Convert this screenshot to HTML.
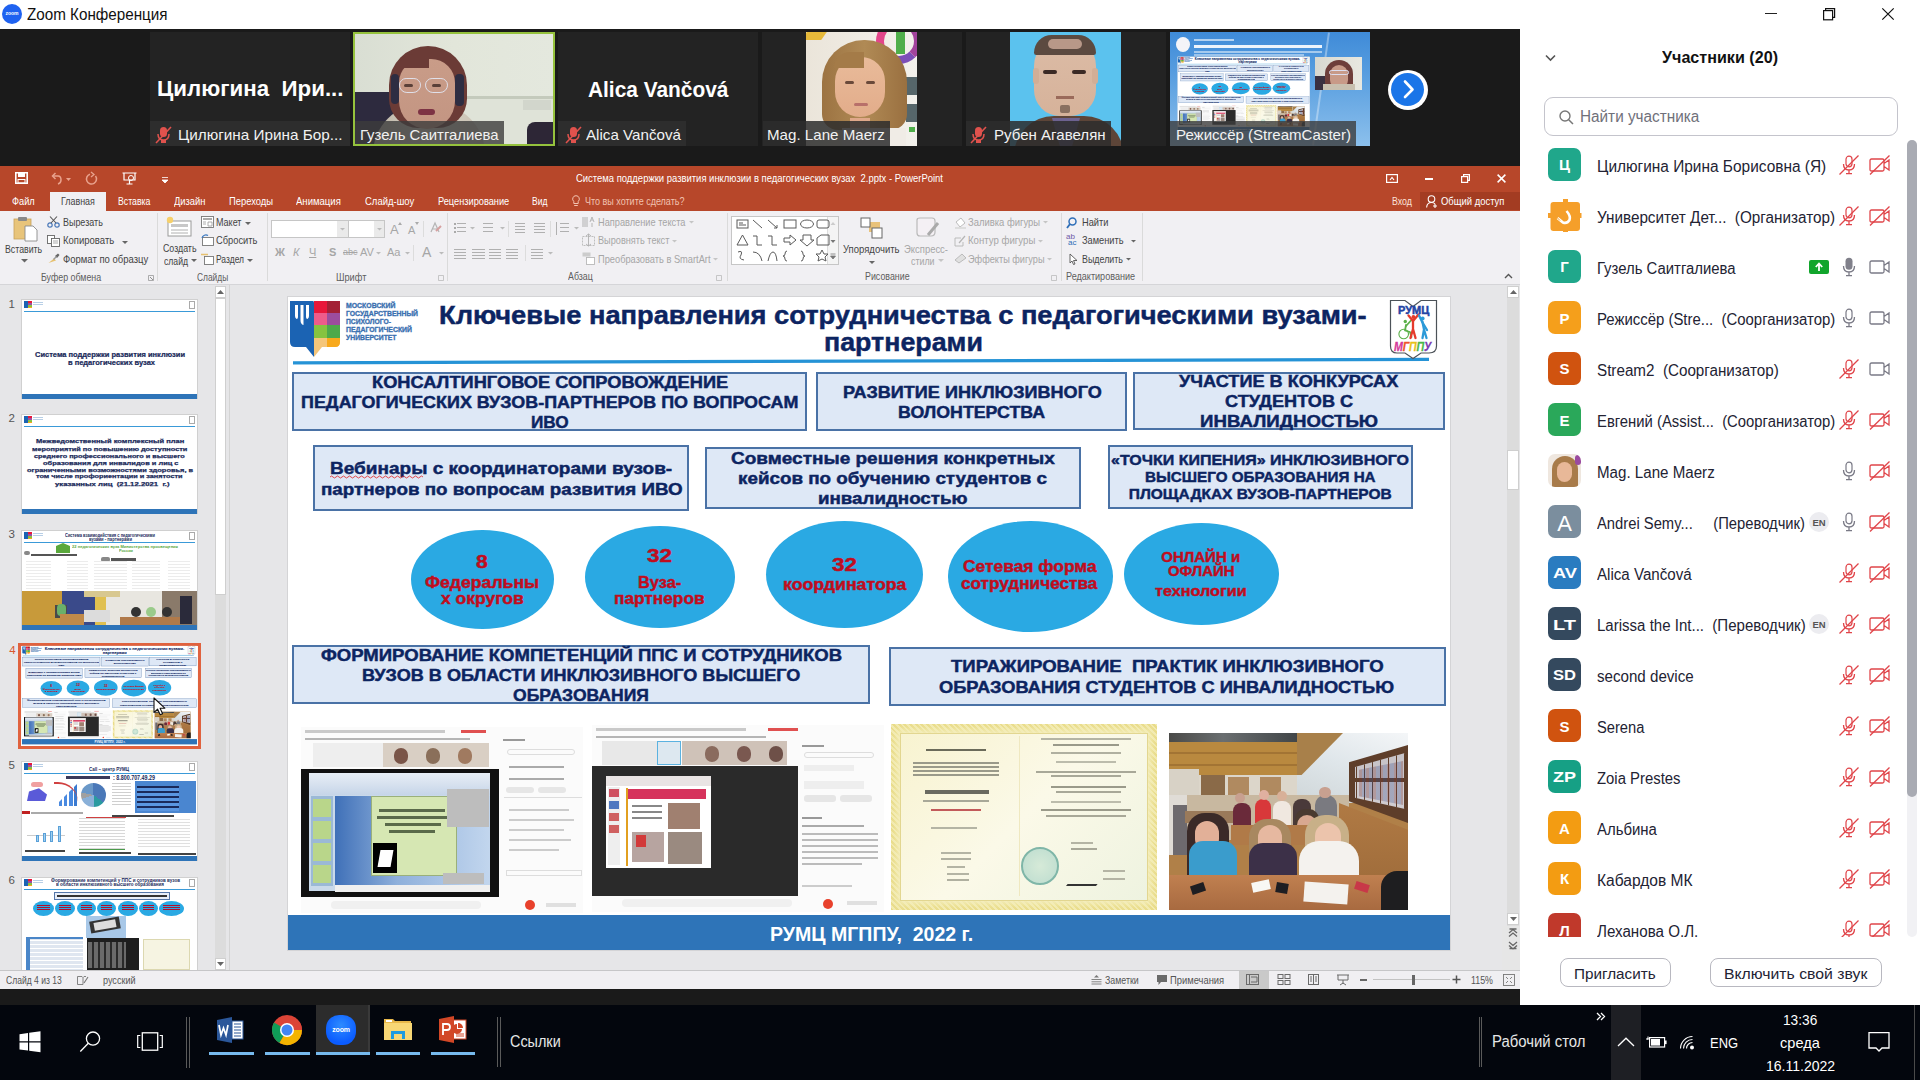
<!DOCTYPE html><html><head><meta charset="utf-8"><style>
*{margin:0;padding:0;box-sizing:border-box}
html,body{width:1920px;height:1080px;overflow:hidden;background:#fff;font-family:"Liberation Sans",sans-serif}
.a{position:absolute}
.t{position:absolute;white-space:pre;transform-origin:0 0}
svg{position:absolute;overflow:visible}

</style></head><body>
<div class="a" style="left:0;top:0;width:1920px;height:29px;background:#fff"></div>
<div class="a" style="left:2px;top:4px;width:20px;height:20px;border-radius:50%;background:#1f62f0"></div>
<div class="a" style="left:5px;top:11px;width:14px;height:5px;font:bold 5px/5px 'Liberation Sans';color:#fff;text-align:center">zoom</div>
<div class="t" id="t0" style="top:7.00px;font-size:16px;line-height:16px;color:#111;left:27.30px;transform:scaleX(0.9502);">Zoom Конференция</div>
<div class="a" style="left:1765px;top:13px;width:12px;height:1px;background:#222"></div>
<svg style="left:1823px;top:8px" width="13" height="13"><rect x="0.6" y="2.6" width="9" height="9.2" fill="none" stroke="#111" stroke-width="1.2"/><path d="M2.6 2.6V0.6H11.6V9.4H9.6" fill="none" stroke="#111" stroke-width="1.2"/></svg>
<svg style="left:1882px;top:8px" width="12" height="12"><path d="M0.3 0.3L11.7 11.7M11.7 0.3L0.3 11.7" stroke="#111" stroke-width="1.2"/></svg>
<div class="a" style="left:0;top:29px;width:1520px;height:137px;background:#1a1a1a"></div>
<div class="a" style="left:150px;top:32px;width:200px;height:114px;background:#232323;overflow:hidden"></div>
<div class="a" style="left:353px;top:32px;width:202px;height:114px;background:#232323;overflow:hidden"></div>
<div class="a" style="left:558px;top:32px;width:200px;height:114px;background:#232323;overflow:hidden"></div>
<div class="a" style="left:762px;top:32px;width:200px;height:114px;background:#232323;overflow:hidden"></div>
<div class="a" style="left:966px;top:32px;width:200px;height:114px;background:#232323;overflow:hidden"></div>
<div class="a" style="left:1170px;top:32px;width:200px;height:114px;background:#232323;overflow:hidden"></div>
<div class="t" id="t1" style="top:78.00px;font-size:22px;line-height:22px;color:#fff;font-weight:bold;left:156.50px;transform:scaleX(1.0141);">Цилюгина  Ири...</div>
<div class="a" style="left:150px;top:121px;width:200px;height:25px;background:#2d2d2d"></div>
<svg style="left:155px;top:126px" width="17" height="18"><rect x="5" y="1" width="7" height="10" rx="3.5" fill="#e0524d"/><path d="M3 8Q3 14 8.5 14Q14 14 14 8" fill="none" stroke="#e0524d" stroke-width="1.5"/><rect x="6" y="14" width="5" height="3" fill="#e0524d"/><path d="M1 17L16 1" stroke="#e0524d" stroke-width="1.6"/></svg>
<div class="t" id="t2" style="top:127.00px;font-size:15px;line-height:15px;color:#f2f2f2;left:178.40px;transform:scaleX(1.0195);">Цилюгина Ирина Бор...</div>
<div class="a" style="left:353px;top:32px;width:202px;height:114px;background:linear-gradient(90deg,#d9ded3 0%,#e2e6da 50%,#e4e8de 100%);border:2px solid #95c23d;overflow:hidden">
<div class="a" style="left:0;top:58px;width:40px;height:60px;background:#2d2a3e"></div>
<div class="a" style="left:105px;top:62px;width:95px;height:3px;background:#c4cabc"></div>
<div class="a" style="left:105px;top:65px;width:95px;height:50px;background:#dfe3d8"></div>
<div class="a" style="left:168px;top:66px;width:28px;height:10px;background:#d2d6cc"></div>
<div class="a" style="left:172px;top:88px;width:30px;height:30px;background:#2d2636;border-radius:8px 0 0 0"></div>
<div class="a" style="left:18px;top:70px;width:112px;height:50px;border-radius:50px 50px 0 0;background:linear-gradient(90deg,#bdb6a8,#d8d2c4 50%,#c9c2b4)"></div>
<div class="a" style="left:34px;top:12px;width:78px;height:82px;border-radius:40px 40px 30px 30px;background:#6b3b36"></div>
<div class="a" style="left:44px;top:25px;width:56px;height:70px;border-radius:24px 24px 28px 28px;background:linear-gradient(#c99c88,#c39582)"></div>
<div class="a" style="left:44px;top:20px;width:30px;height:14px;border-radius:20px 0 0 0;background:#6b3b36"></div>
<div class="a" style="left:44px;top:44px;width:22px;height:15px;border:1.5px solid #e0e0ea;border-radius:9px 9px 10px 10px"></div>
<div class="a" style="left:70px;top:44px;width:23px;height:15px;border:1.5px solid #e0e0ea;border-radius:9px 9px 10px 10px"></div>
<div class="a" style="left:49px;top:50px;width:9px;height:3px;background:#5a4038;border-radius:2px"></div>
<div class="a" style="left:77px;top:50px;width:9px;height:3px;background:#5a4038;border-radius:2px"></div>
<div class="a" style="left:63px;top:75px;width:17px;height:6px;border-radius:4px;background:#7d3344"></div>
<div class="a" style="left:36px;top:40px;width:8px;height:30px;border-radius:4px;background:#2e2d42"></div>
<div class="a" style="left:100px;top:40px;width:9px;height:32px;border-radius:4px;background:#2e2d42"></div>
</div>
<div class="a" style="left:355px;top:121px;width:149px;height:23px;background:rgba(60,60,60,.8)"></div>
<div class="t" id="t3" style="top:127.00px;font-size:15px;line-height:15px;color:#f2f2f2;left:360.00px;transform:scaleX(0.9928);">Гузель Саитгалиева</div>
<div class="t" id="t4" style="top:79.00px;font-size:22px;line-height:22px;color:#fff;font-weight:bold;left:588.00px;transform:scaleX(0.9487);">Alica Vančová</div>
<div class="a" style="left:558px;top:121px;width:128px;height:25px;background:#2d2d2d"></div>
<svg style="left:565px;top:126px" width="17" height="18"><rect x="5" y="1" width="7" height="10" rx="3.5" fill="#e0524d"/><path d="M3 8Q3 14 8.5 14Q14 14 14 8" fill="none" stroke="#e0524d" stroke-width="1.5"/><rect x="6" y="14" width="5" height="3" fill="#e0524d"/><path d="M1 17L16 1" stroke="#e0524d" stroke-width="1.6"/></svg>
<div class="t" id="t5" style="top:127.00px;font-size:15px;line-height:15px;color:#f2f2f2;left:586.00px;transform:scaleX(1.0111);">Alica Vančová</div>
<div class="a" style="left:806px;top:32px;width:111px;height:114px;background:linear-gradient(90deg,#ebe5da,#f3f1ec);overflow:hidden">
<div class="a" style="left:-2px;top:0;width:20px;height:8px;background:#e6b93a;transform:skewX(-35deg)"></div>
<div class="a" style="left:70px;top:-14px;width:46px;height:46px;border-radius:50%;border:8px solid #a2439c;border-left-color:#e2468a;border-bottom-color:#7d4fb8"></div>
<div class="a" style="left:90px;top:0;width:9px;height:22px;background:#4fae4a"></div>
<div class="a" style="left:100px;top:45px;width:11px;height:18px;background:#56666a"></div>
<div class="a" style="left:100px;top:72px;width:11px;height:18px;background:#56666a"></div>
<div class="a" style="left:103px;top:95px;width:6px;height:5px;background:#4fae4a"></div>
<div class="a" style="left:16px;top:8px;width:85px;height:90px;border-radius:42px 42px 16px 16px;background:linear-gradient(90deg,#9c7342,#b08a55 50%,#9a7040)"></div>
<div class="a" style="left:29px;top:25px;width:50px;height:60px;border-radius:24px 24px 25px 25px;background:linear-gradient(#e9bb9a,#e2ac8a)"></div>
<div class="a" style="left:28px;top:20px;width:30px;height:16px;border-radius:20px 0 0 0;background:#a47b48"></div>
<div class="a" style="left:39px;top:49px;width:9px;height:3px;border-radius:2px;background:#6a4a3a"></div>
<div class="a" style="left:60px;top:49px;width:9px;height:3px;border-radius:2px;background:#6a4a3a"></div>
<div class="a" style="left:48px;top:71px;width:14px;height:3px;border-radius:2px;background:#b8706a"></div>
<div class="a" style="left:44px;top:86px;width:20px;height:14px;background:#e0a88a"></div>
<div class="a" style="left:36px;top:96px;width:64px;height:20px;background:#f0ece6"></div>
</div>
<div class="a" style="left:763px;top:121px;width:127px;height:25px;background:rgba(45,45,45,.85)"></div>
<div class="t" id="t6" style="top:127.00px;font-size:15px;line-height:15px;color:#f2f2f2;left:767.00px;transform:scaleX(1.0083);">Mag. Lane Maerz</div>
<div class="a" style="left:1010px;top:32px;width:111px;height:114px;background:#5bc2ee;overflow:hidden">
<div class="a" style="left:4px;top:84px;width:110px;height:40px;border-radius:40px 40px 0 0;background:#5d4538"></div>
<div class="a" style="left:42px;top:86px;width:28px;height:30px;background:#6d6290;clip-path:polygon(0 0,100% 0,70% 100%,30% 100%)"></div>
<div class="a" style="left:24px;top:4px;width:62px;height:80px;border-radius:30px 30px 26px 26px;background:linear-gradient(#dcbca6,#d6b29a)"></div>
<div class="a" style="left:23px;top:36px;width:6px;height:16px;border-radius:3px;background:#d2ae96"></div>
<div class="a" style="left:82px;top:36px;width:6px;height:16px;border-radius:3px;background:#d2ae96"></div>
<div class="a" style="left:24px;top:3px;width:62px;height:20px;border-radius:30px 30px 4px 4px;background:#5c4a40"></div>
<div class="a" style="left:38px;top:7px;width:34px;height:10px;border-radius:14px;background:#b89888"></div>
<div class="a" style="left:33px;top:38px;width:14px;height:4px;border-radius:2px;background:#3b2a25"></div>
<div class="a" style="left:62px;top:38px;width:14px;height:4px;border-radius:2px;background:#3b2a25"></div>
<div class="a" style="left:46px;top:64px;width:18px;height:3px;background:#9a6a5a"></div>
<div class="a" style="left:50px;top:73px;width:10px;height:8px;background:#8a7060;border-radius:2px"></div>
</div>
<div class="a" style="left:966px;top:121px;width:145px;height:25px;background:rgba(45,45,45,.85)"></div>
<svg style="left:970px;top:126px" width="17" height="18"><rect x="5" y="1" width="7" height="10" rx="3.5" fill="#e0524d"/><path d="M3 8Q3 14 8.5 14Q14 14 14 8" fill="none" stroke="#e0524d" stroke-width="1.5"/><rect x="6" y="14" width="5" height="3" fill="#e0524d"/><path d="M1 17L16 1" stroke="#e0524d" stroke-width="1.6"/></svg>
<div class="t" id="t7" style="top:127.00px;font-size:15px;line-height:15px;color:#f2f2f2;left:994.00px;transform:scaleX(1.0037);">Рубен Агавелян</div>
<div class="a" style="left:1170px;top:32px;width:200px;height:114px;background:linear-gradient(180deg,#3f8bd8 0%,#5a9fe0 40%,#8cc0ec 100%);overflow:hidden">
<div class="a" style="left:150px;top:0;width:2px;height:114px;background:rgba(255,255,255,.35);transform:rotate(8deg)"></div>
<div class="a" style="left:6px;top:5px;width:14px;height:15px;border-radius:50%;background:#f4f4f8"></div>
<div class="a" style="left:24px;top:7px;width:40px;height:2px;background:rgba(255,255,255,.6)"></div>
<div class="a" style="left:24px;top:13px;width:128px;height:3px;background:rgba(255,255,255,.9)"></div>
<div class="a" style="left:24px;top:19px;width:128px;height:1.5px;background:rgba(255,255,255,.5)"></div>
<div class="a" style="left:24px;top:22px;width:110px;height:1.5px;background:rgba(255,255,255,.45)"></div>
<div class="a" style="left:145px;top:25px;width:47px;height:33px;background:linear-gradient(90deg,#d8d8d0,#e8e8e0)"></div>
<div class="a" style="left:145px;top:44px;width:10px;height:14px;background:#3a3040"></div>
<div class="a" style="left:155px;top:28px;width:28px;height:30px;border-radius:14px 14px 6px 6px;background:#6e3e3a"></div>
<div class="a" style="left:160px;top:33px;width:18px;height:24px;border-radius:9px;background:#c89a88"></div>
<div class="a" style="left:159px;top:38px;width:20px;height:5px;border:1px solid #dde;border-radius:3px"></div>
<div class="a" style="left:153px;top:52px;width:32px;height:6px;background:#c8c0b0"></div>
</div>
<div class="a" style="left:1387.5px;top:69.5px;width:40px;height:40px;border-radius:50%;background:#fff"></div>
<div class="a" style="left:1391px;top:73px;width:33px;height:33px;border-radius:50%;background:#1a75e8"></div>
<svg style="left:1401px;top:80px" width="16" height="18"><path d="M4 1.5L11.5 9.5L4 17" fill="none" stroke="#fff" stroke-width="2.6" stroke-linecap="round" stroke-linejoin="round"/></svg>
<div class="a" style="left:0;top:166px;width:1520px;height:45px;background:#b7472a"></div>
<svg style="left:15px;top:172px" width="13" height="12"><path d="M0.8 0.8H12.2V11.2H0.8Z" fill="none" stroke="#fff" stroke-width="1.6"/><rect x="3" y="1" width="7" height="4" fill="#fff"/><rect x="3" y="7.5" width="7" height="3.5" fill="none" stroke="#fff" stroke-width="1"/></svg>
<svg style="left:50px;top:172px" width="22" height="13"><path d="M3 4H8Q11 4 11 8Q11 11 8 12" fill="none" stroke="#e9a28d" stroke-width="1.5"/><path d="M5.5 1L2.5 4L5.5 7" fill="none" stroke="#e9a28d" stroke-width="1.5"/><path d="M16 6L21 6L18.5 9Z" fill="#e9a28d"/></svg>
<svg style="left:86px;top:172px" width="12" height="13"><path d="M9.5 4A5 5 0 1 1 4 2.2" fill="none" stroke="#e9a28d" stroke-width="1.5"/><path d="M5 0L8 2.5L5 5" fill="none" stroke="#e9a28d" stroke-width="1.3"/></svg>
<svg style="left:122px;top:172px" width="15" height="13"><path d="M0.5 1H14.5M2 1V8H13V1M7.5 8V12M4.5 12H10.5" fill="none" stroke="#fff" stroke-width="1.2"/><circle cx="9" cy="6" r="2.5" fill="none" stroke="#fff" stroke-width="1"/></svg>
<svg style="left:162px;top:177px" width="6" height="9"><path d="M0 0.5H6M0 3L6 3L3 6Z" fill="#fff" stroke="#fff" stroke-width="0.8"/></svg>
<div class="t" id="t8" style="top:173.00px;font-size:10.5px;line-height:10.5px;color:#fff;left:576.00px;transform:scaleX(0.8999);">Система поддержки развития инклюзии в педагогических вузах  2.pptx - PowerPoint</div>
<svg style="left:1386px;top:174px" width="12" height="9"><rect x="0.6" y="0.6" width="10.8" height="7.8" fill="none" stroke="#fff" stroke-width="1.2"/><path d="M4 6L6 3.5L8 6" fill="none" stroke="#fff" stroke-width="1.2"/></svg>
<div class="a" style="left:1425px;top:178px;width:8px;height:1.6px;background:#fff"></div>
<svg style="left:1461px;top:174px" width="9" height="9"><rect x="0.6" y="2.6" width="6" height="5.8" fill="none" stroke="#fff" stroke-width="1.2"/><path d="M2.6 2.6V0.6H8.4V6.4H6.6" fill="none" stroke="#fff" stroke-width="1.2"/></svg>
<svg style="left:1497px;top:174px" width="9" height="9"><path d="M0.6 0.6L8.4 8.4M8.4 0.6L0.6 8.4" stroke="#fff" stroke-width="1.5"/></svg>
<div class="a" style="left:50px;top:192px;width:56px;height:19px;background:#f1f0f3"></div>
<div class="a" style="left:1420px;top:192px;width:100px;height:18px;background:#a33c22"></div>
<div class="t" id="t9" style="top:196.00px;font-size:11px;line-height:11px;color:#fff;left:11.70px;transform:scaleX(0.8393);">Файл</div>
<div class="t" id="t10" style="top:196.00px;font-size:11px;line-height:11px;color:#444;left:60.60px;transform:scaleX(0.8096);">Главная</div>
<div class="t" id="t11" style="top:196.00px;font-size:11px;line-height:11px;color:#fff;left:118.40px;transform:scaleX(0.7924);">Вставка</div>
<div class="t" id="t12" style="top:196.00px;font-size:11px;line-height:11px;color:#fff;left:174.00px;transform:scaleX(0.8517);">Дизайн</div>
<div class="t" id="t13" style="top:196.00px;font-size:11px;line-height:11px;color:#fff;left:228.60px;transform:scaleX(0.8545);">Переходы</div>
<div class="t" id="t14" style="top:196.00px;font-size:11px;line-height:11px;color:#fff;left:296.30px;transform:scaleX(0.8675);">Анимация</div>
<div class="t" id="t15" style="top:196.00px;font-size:11px;line-height:11px;color:#fff;left:364.50px;transform:scaleX(0.8627);">Слайд-шоу</div>
<div class="t" id="t16" style="top:196.00px;font-size:11px;line-height:11px;color:#fff;left:437.60px;transform:scaleX(0.8381);">Рецензирование</div>
<div class="t" id="t17" style="top:196.00px;font-size:11px;line-height:11px;color:#fff;left:532.40px;transform:scaleX(0.7736);">Вид</div>
<svg style="left:572px;top:195px" width="8" height="12"><path d="M4 0.7A3.3 3.3 0 0 0 1.8 6.5V8.5H6.2V6.5A3.3 3.3 0 0 0 4 0.7ZM2.2 10.5H5.8" fill="none" stroke="#f3c4b2" stroke-width="1"/></svg>
<div class="t" id="t18" style="top:196.00px;font-size:11px;line-height:11px;color:#f1c2b0;left:584.90px;transform:scaleX(0.8182);">Что вы хотите сделать?</div>
<div class="t" id="t19" style="top:196.00px;font-size:11px;line-height:11px;color:#fbe3da;left:1392.30px;transform:scaleX(0.7995);">Вход</div>
<svg style="left:1426px;top:195px" width="12" height="13"><circle cx="5.5" cy="4" r="3.3" fill="none" stroke="#fff" stroke-width="1.1"/><path d="M0.6 12.5Q1 7.5 5.5 7.5Q8 7.5 9 9" fill="none" stroke="#fff" stroke-width="1.1"/><path d="M9 9V13M7 11H11" stroke="#fff" stroke-width="1.1"/></svg>
<div class="t" id="t20" style="top:196.00px;font-size:11px;line-height:11px;color:#fff;left:1441.00px;transform:scaleX(0.8578);">Общий доступ</div>
<div class="a" style="left:0;top:211px;width:1520px;height:74px;background:#f1f0f3;border-bottom:1px solid #d5d5d8"></div>
<div class="a" style="left:157px;top:213px;width:1px;height:68px;background:#dadada"></div>
<div class="a" style="left:267.2px;top:213px;width:1px;height:68px;background:#dadada"></div>
<div class="a" style="left:447.4px;top:213px;width:1px;height:68px;background:#dadada"></div>
<div class="a" style="left:726.5px;top:213px;width:1px;height:68px;background:#dadada"></div>
<div class="a" style="left:1060.6px;top:213px;width:1px;height:68px;background:#dadada"></div>
<div class="a" style="left:1142px;top:213px;width:1px;height:68px;background:#dadada"></div>
<svg style="left:13px;top:216px" width="25" height="26"><rect x="1" y="3" width="17" height="20" fill="#e8c47a" stroke="#c9a25a" stroke-width="0.8"/><rect x="5" y="1" width="9" height="4" rx="1" fill="#8a8a8a"/><path d="M12 10H20L24 14V25H12Z" fill="#fff" stroke="#8a8a8a" stroke-width="0.9"/></svg>
<div class="t" id="t21" style="top:244.00px;font-size:11px;line-height:11px;color:#444;left:5.00px;transform:scaleX(0.7976);">Вставить</div>
<svg style="left:21px;top:259px" width="7" height="4"><path d="M0 0H7L3.5 3.5Z" fill="#666"/></svg>
<svg style="left:47px;top:216px" width="13" height="12"><circle cx="3" cy="9" r="2.2" fill="none" stroke="#4a78b8" stroke-width="1.2"/><circle cx="10" cy="9" r="2.2" fill="none" stroke="#4a78b8" stroke-width="1.2"/><path d="M4 7L10 0.5M9 7L3 0.5" stroke="#555" stroke-width="1.1"/></svg>
<div class="t" id="t22" style="top:217.00px;font-size:11px;line-height:11px;color:#444;left:62.50px;transform:scaleX(0.8133);">Вырезать</div>
<svg style="left:47px;top:235px" width="13" height="12"><rect x="0.5" y="0.5" width="7" height="8" fill="#fff" stroke="#666" stroke-width="0.9"/><rect x="4.5" y="3.5" width="8" height="8" fill="#fff" stroke="#666" stroke-width="0.9"/><path d="M6 6H11M6 8H11" stroke="#888" stroke-width="0.7"/></svg>
<div class="t" id="t23" style="top:235.00px;font-size:11px;line-height:11px;color:#444;left:62.50px;transform:scaleX(0.8644);">Копировать</div>
<svg style="left:122px;top:241px" width="6" height="3"><path d="M0 0H6L3 3Z" fill="#666"/></svg>
<svg style="left:48px;top:253px" width="12" height="11"><path d="M0.5 10L6 5.5L8 7.5Z" fill="#e7c16f"/><path d="M7 3L10 0.5L11.5 2L9 5Z" fill="#666"/><path d="M5 6L8 3L9 4L6 7Z" fill="#999"/></svg>
<div class="t" id="t24" style="top:254.00px;font-size:11px;line-height:11px;color:#444;left:62.50px;transform:scaleX(0.8637);">Формат по образцу</div>
<div class="t" id="t25" style="top:272.00px;font-size:10.5px;line-height:10.5px;color:#5e5e5e;left:41.40px;transform:scaleX(0.8436);">Буфер обмена</div>
<svg style="left:148px;top:275px" width="6" height="6"><path d="M0.5 0.5H5.5V5.5H0.5Z" fill="none" stroke="#999" stroke-width="0.8"/><path d="M2 2L5 5" stroke="#777" stroke-width="0.8"/></svg>
<svg style="left:166px;top:216px" width="26" height="21"><rect x="2" y="5" width="23" height="15" fill="#fff" stroke="#9a9a9a" stroke-width="1"/><rect x="5" y="8" width="17" height="3" fill="#c8c8c8"/><path d="M5 14H22M5 17H22" stroke="#b0b0b0" stroke-width="1"/><circle cx="4" cy="4" r="3.2" fill="#f6d06b"/></svg>
<div class="t" id="t26" style="top:243.00px;font-size:11px;line-height:11px;color:#444;left:162.50px;transform:scaleX(0.8012);">Создать</div>
<div class="t" id="t27" style="top:256.00px;font-size:11px;line-height:11px;color:#444;left:164.00px;transform:scaleX(0.7841);">слайд</div>
<svg style="left:191px;top:259px" width="6" height="3"><path d="M0 0H6L3 3Z" fill="#666"/></svg>
<svg style="left:201px;top:216px" width="13" height="12"><rect x="0.5" y="0.5" width="12" height="11" fill="#fff" stroke="#777" stroke-width="0.9"/><rect x="2" y="2" width="9" height="2" fill="#aaa"/><path d="M2 6H5M2 8H5M7 6H11V10H7Z" stroke="#999" stroke-width="0.8" fill="none"/></svg>
<div class="t" id="t28" style="top:217.00px;font-size:11px;line-height:11px;color:#444;left:216.40px;transform:scaleX(0.8189);">Макет</div>
<svg style="left:245px;top:222px" width="6" height="3"><path d="M0 0H6L3 3Z" fill="#666"/></svg>
<svg style="left:201px;top:234px" width="13" height="12"><rect x="1.5" y="3.5" width="11" height="8" fill="#fff" stroke="#777" stroke-width="0.9"/><path d="M1 4A4 4 0 0 1 7 1.5" fill="none" stroke="#3a78c0" stroke-width="1.2"/></svg>
<div class="t" id="t29" style="top:235.00px;font-size:11px;line-height:11px;color:#444;left:216.40px;transform:scaleX(0.8465);">Сбросить</div>
<svg style="left:201px;top:253px" width="13" height="12"><rect x="3.5" y="3.5" width="9" height="8" fill="#fff" stroke="#777" stroke-width="0.9"/><path d="M0 1.5H7" stroke="#e7c16f" stroke-width="1.5"/></svg>
<div class="t" id="t30" style="top:254.00px;font-size:11px;line-height:11px;color:#444;left:216.40px;transform:scaleX(0.7701);">Раздел</div>
<svg style="left:247px;top:259px" width="6" height="3"><path d="M0 0H6L3 3Z" fill="#666"/></svg>
<div class="t" id="t31" style="top:272.00px;font-size:10.5px;line-height:10.5px;color:#5e5e5e;left:196.60px;transform:scaleX(0.7981);">Слайды</div>
<div class="a" style="left:271px;top:220px;width:114px;height:18px;background:#fff;border:1px solid #c6c6c6"></div>
<div class="a" style="left:337px;top:221px;width:11px;height:16px;background:#eaeaea"></div>
<div class="a" style="left:348px;top:220px;width:1px;height:18px;background:#c6c6c6"></div>
<div class="a" style="left:374px;top:221px;width:10px;height:16px;background:#eaeaea"></div>
<svg style="left:340px;top:228px" width="5" height="3"><path d="M0 0H5L2.5 2.5Z" fill="#bbb"/></svg>
<svg style="left:377px;top:228px" width="5" height="3"><path d="M0 0H5L2.5 2.5Z" fill="#bbb"/></svg>
<div class="t" id="t32" style="top:223.00px;font-size:13px;line-height:13px;color:#a6a6a6;left:390.00px;">A</div>
<svg style="left:398px;top:222px" width="4" height="3"><path d="M0 3L2 0L4 3Z" fill="#aaa"/></svg>
<div class="t" id="t33" style="top:225.00px;font-size:11px;line-height:11px;color:#a6a6a6;left:408.00px;">A</div>
<svg style="left:415px;top:222px" width="4" height="3"><path d="M0 0L2 3L4 0Z" fill="#aaa"/></svg>
<div class="a" style="left:423px;top:221px;width:1px;height:16px;background:#dcdcdc"></div>
<svg style="left:430px;top:222px" width="12" height="11"><path d="M1 10L5 1L9 10M2.5 7H7.5" fill="none" stroke="#b5b5b5" stroke-width="1.2"/><path d="M6 9L11 4" stroke="#d6a0a0" stroke-width="2"/></svg>
<div class="t" id="t34" style="top:247.00px;font-size:11px;line-height:11px;color:#a6a6a6;left:275.00px;font-weight:bold;">Ж</div>
<div class="t" id="t35" style="top:247.00px;font-size:11px;line-height:11px;color:#a6a6a6;left:293.00px;font-style:italic;">К</div>
<div class="t" id="t36" style="top:247.00px;font-size:11px;line-height:11px;color:#a6a6a6;left:309.00px;text-decoration:underline;">Ч</div>
<div class="t" id="t37" style="top:247.00px;font-size:11px;line-height:11px;color:#a6a6a6;left:329.00px;font-weight:bold;">S</div>
<div class="t" id="t38" style="top:247.00px;font-size:11px;line-height:11px;color:#a6a6a6;left:343.00px;text-decoration:line-through;font-size:9px;">abc</div>
<div class="t" id="t39" style="top:247.00px;font-size:11px;line-height:11px;color:#a6a6a6;left:360.00px;">AV</div>
<div class="t" id="t40" style="top:247.00px;font-size:11px;line-height:11px;color:#a6a6a6;left:387.00px;">Aa</div>
<div class="t" id="t41" style="top:247.00px;font-size:11px;line-height:11px;color:#a6a6a6;left:422.00px;font-size:14px;">A</div>
<svg style="left:376px;top:252px" width="5" height="3"><path d="M0 0H5L2.5 2.5Z" fill="#bbb"/></svg>
<svg style="left:405px;top:252px" width="5" height="3"><path d="M0 0H5L2.5 2.5Z" fill="#bbb"/></svg>
<svg style="left:439px;top:252px" width="5" height="3"><path d="M0 0H5L2.5 2.5Z" fill="#bbb"/></svg>
<div class="a" style="left:413px;top:245px;width:1px;height:16px;background:#dcdcdc"></div>
<div class="t" id="t42" style="top:272.00px;font-size:10.5px;line-height:10.5px;color:#5e5e5e;left:335.80px;transform:scaleX(0.8800);">Шрифт</div>
<svg style="left:438px;top:275px" width="6" height="6"><path d="M0.5 0.5H5.5V5.5H0.5Z" fill="none" stroke="#bbb" stroke-width="0.8"/></svg>
<div class="a" style="left:457px;top:223px;width:9px;height:1.4px;background:#b0b0b0"></div><div class="a" style="left:457px;top:227px;width:9px;height:1.4px;background:#b0b0b0"></div><div class="a" style="left:457px;top:231px;width:9px;height:1.4px;background:#b0b0b0"></div><div class="a" style="left:483px;top:223px;width:10px;height:1.4px;background:#b0b0b0"></div><div class="a" style="left:483px;top:227px;width:10px;height:1.4px;background:#b0b0b0"></div><div class="a" style="left:483px;top:231px;width:10px;height:1.4px;background:#b0b0b0"></div><div class="a" style="left:515px;top:223px;width:10px;height:1.4px;background:#b0b0b0"></div><div class="a" style="left:515px;top:226px;width:10px;height:1.4px;background:#b0b0b0"></div><div class="a" style="left:515px;top:229px;width:10px;height:1.4px;background:#b0b0b0"></div><div class="a" style="left:515px;top:232px;width:10px;height:1.4px;background:#b0b0b0"></div><div class="a" style="left:534px;top:223px;width:11px;height:1.4px;background:#b0b0b0"></div><div class="a" style="left:534px;top:226px;width:11px;height:1.4px;background:#b0b0b0"></div><div class="a" style="left:534px;top:229px;width:11px;height:1.4px;background:#b0b0b0"></div><div class="a" style="left:534px;top:232px;width:11px;height:1.4px;background:#b0b0b0"></div><div class="a" style="left:560px;top:223px;width:9px;height:1.4px;background:#b0b0b0"></div><div class="a" style="left:560px;top:227px;width:9px;height:1.4px;background:#b0b0b0"></div><div class="a" style="left:560px;top:231px;width:9px;height:1.4px;background:#b0b0b0"></div>
<div class="a" style="left:454px;top:222.5px;width:2px;height:2px;background:#aaa"></div><div class="a" style="left:454px;top:226.5px;width:2px;height:2px;background:#aaa"></div><div class="a" style="left:454px;top:230.5px;width:2px;height:2px;background:#aaa"></div>
<svg style="left:470px;top:227px" width="5" height="3"><path d="M0 0H5L2.5 2.5Z" fill="#bbb"/></svg>
<svg style="left:500px;top:227px" width="5" height="3"><path d="M0 0H5L2.5 2.5Z" fill="#bbb"/></svg>
<svg style="left:574px;top:227px" width="5" height="3"><path d="M0 0H5L2.5 2.5Z" fill="#bbb"/></svg>
<div class="a" style="left:508px;top:221px;width:1px;height:16px;background:#dcdcdc"></div>
<div class="a" style="left:550px;top:221px;width:1px;height:16px;background:#dcdcdc"></div>
<div class="a" style="left:556px;top:222px;width:1.4px;height:13px;background:#b0b0b0"></div>
<div class="a" style="left:454px;top:249px;width:12px;height:1.4px;background:#b0b0b0"></div><div class="a" style="left:454px;top:252px;width:12px;height:1.4px;background:#b0b0b0"></div><div class="a" style="left:454px;top:255px;width:12px;height:1.4px;background:#b0b0b0"></div><div class="a" style="left:454px;top:258px;width:12px;height:1.4px;background:#b0b0b0"></div><div class="a" style="left:472px;top:249px;width:13px;height:1.4px;background:#b0b0b0"></div><div class="a" style="left:472px;top:252px;width:13px;height:1.4px;background:#b0b0b0"></div><div class="a" style="left:472px;top:255px;width:13px;height:1.4px;background:#b0b0b0"></div><div class="a" style="left:472px;top:258px;width:13px;height:1.4px;background:#b0b0b0"></div><div class="a" style="left:489px;top:249px;width:12px;height:1.4px;background:#b0b0b0"></div><div class="a" style="left:489px;top:252px;width:12px;height:1.4px;background:#b0b0b0"></div><div class="a" style="left:489px;top:255px;width:12px;height:1.4px;background:#b0b0b0"></div><div class="a" style="left:489px;top:258px;width:12px;height:1.4px;background:#b0b0b0"></div><div class="a" style="left:506px;top:249px;width:12px;height:1.4px;background:#b0b0b0"></div><div class="a" style="left:506px;top:252px;width:12px;height:1.4px;background:#b0b0b0"></div><div class="a" style="left:506px;top:255px;width:12px;height:1.4px;background:#b0b0b0"></div><div class="a" style="left:506px;top:258px;width:12px;height:1.4px;background:#b0b0b0"></div><div class="a" style="left:531px;top:249px;width:12px;height:1.4px;background:#b0b0b0"></div><div class="a" style="left:531px;top:252px;width:12px;height:1.4px;background:#b0b0b0"></div><div class="a" style="left:531px;top:255px;width:12px;height:1.4px;background:#b0b0b0"></div><div class="a" style="left:531px;top:258px;width:12px;height:1.4px;background:#b0b0b0"></div>
<div class="a" style="left:525px;top:245px;width:1px;height:16px;background:#dcdcdc"></div>
<svg style="left:548px;top:252px" width="5" height="3"><path d="M0 0H5L2.5 2.5Z" fill="#bbb"/></svg>
<svg style="left:582px;top:216px" width="13" height="12"><path d="M1 1V11M3 1V11M5 1V11" stroke="#b0b0b0" stroke-width="1"/><path d="M8 6L10 1L12 6M9 4H11M10 7V11" fill="none" stroke="#b0b0b0" stroke-width="0.9"/></svg>
<div class="t" id="t43" style="top:217.00px;font-size:11px;line-height:11px;color:#a6a6a6;left:598.00px;transform:scaleX(0.8381);">Направление текста</div>
<svg style="left:582px;top:234px" width="13" height="13"><rect x="0.5" y="2.5" width="12" height="9" fill="none" stroke="#b8b8b8" stroke-width="0.9" stroke-dasharray="2 1"/><path d="M6.5 0V12M4 2L6.5 0L9 2M4 10L6.5 12L9 10" fill="none" stroke="#b0b0b0" stroke-width="0.9"/></svg>
<div class="t" id="t44" style="top:235.00px;font-size:11px;line-height:11px;color:#a6a6a6;left:598.00px;transform:scaleX(0.8333);">Выровнять текст</div>
<svg style="left:582px;top:252px" width="13" height="13"><rect x="0.5" y="0.5" width="8" height="4" fill="#ccc"/><rect x="4.5" y="5.5" width="8" height="7" fill="#fff" stroke="#b8b8b8" stroke-width="0.9"/></svg>
<div class="t" id="t45" style="top:254.00px;font-size:11px;line-height:11px;color:#a6a6a6;left:598.00px;transform:scaleX(0.8431);">Преобразовать в SmartArt</div>
<svg style="left:689px;top:221px" width="5" height="3"><path d="M0 0H5L2.5 2.5Z" fill="#c5c5c5"/></svg>
<svg style="left:672px;top:240px" width="5" height="3"><path d="M0 0H5L2.5 2.5Z" fill="#c5c5c5"/></svg>
<svg style="left:713px;top:258px" width="5" height="3"><path d="M0 0H5L2.5 2.5Z" fill="#c5c5c5"/></svg>
<div class="t" id="t46" style="top:271.00px;font-size:10.5px;line-height:10.5px;color:#5e5e5e;left:568.00px;transform:scaleX(0.8416);">Абзац</div>
<svg style="left:716px;top:275px" width="6" height="6"><path d="M0.5 0.5H5.5V5.5H0.5Z" fill="none" stroke="#bbb" stroke-width="0.8"/></svg>
<div class="a" style="left:731px;top:216px;width:108px;height:49px;background:#fff;border:1px solid #c6c6c6"></div>
<div class="a" style="left:827px;top:217px;width:11px;height:47px;background:#f4f4f4;border-left:1px solid #dedede"></div>
<svg style="left:735px;top:219px" width="90" height="44">
<g fill="none" stroke="#5a5a5a" stroke-width="1">
<rect x="2" y="1" width="11" height="8"/><path d="M4 4H8M4 6H11"/>
<path d="M18 1L27 9"/><path d="M33 1L42 9M42 9V6M42 9H39"/>
<rect x="49" y="1" width="12" height="8"/><ellipse cx="72" cy="5" rx="6.5" ry="4"/><rect x="82" y="1" width="12" height="8" rx="2"/>
<path d="M2 26L7.5 16L13 26Z"/><path d="M18 17H22V26H27"/><path d="M33 17H37V26H42"/>
<path d="M49 19H55V16L61 21L55 26V23H49Z"/><path d="M68 16H76V21H79L72 27L65 21H68Z"/><path d="M82 19L86 16H94V26H82Z"/>
<path d="M3 33Q8 31 6 36Q3 40 9 41"/><path d="M18 33Q25 33 27 42"/><path d="M33 42Q35 33 38 33Q41 33 42 42"/>
<path d="M52 32Q50 32 50 35Q50 37 48 37Q50 37 50 40Q50 42 52 42"/><path d="M66 32Q68 32 68 35Q68 37 70 37Q68 37 68 40Q68 42 66 42"/>
<path d="M87 31L89 35L93 35L90 38L91 42L87 40L83 42L84 38L81 35L85 35Z"/>
</g></svg>
<svg style="left:830px;top:221px" width="6" height="40"><path d="M0.5 4L3 1L5.5 4" fill="#ccc"/><path d="M0.5 19L3 22L5.5 19Z" fill="#777"/><path d="M0.5 33H5.5M0.5 35L3 38L5.5 35Z" fill="#777" stroke="#777" stroke-width="0.8"/></svg>
<svg style="left:860px;top:217px" width="23" height="22"><rect x="9" y="5" width="11" height="10" fill="#e9c27a"/><rect x="1" y="1" width="9" height="9" fill="#fff" stroke="#666" stroke-width="1"/><rect x="12" y="11" width="10" height="10" fill="#fff" stroke="#666" stroke-width="1"/></svg>
<div class="t" id="t47" style="top:244.00px;font-size:11px;line-height:11px;color:#444;left:843.00px;transform:scaleX(0.8630);">Упорядочить</div>
<svg style="left:869px;top:261px" width="6" height="3"><path d="M0 0H6L3 3Z" fill="#666"/></svg>
<svg style="left:914px;top:217px" width="26" height="24"><path d="M3 3Q3 1 6 1H18Q21 1 21 4V15Q21 19 17 19H6Q3 19 3 16Z" fill="#f4f0f4" stroke="#b9b9b9" stroke-width="1.2"/><path d="M14 18L24 6" stroke="#aaa" stroke-width="3"/></svg>
<div class="t" id="t48" style="top:244.00px;font-size:11px;line-height:11px;color:#a6a6a6;left:904.00px;transform:scaleX(0.8593);">Экспресс-</div>
<div class="t" id="t49" style="top:256.00px;font-size:11px;line-height:11px;color:#a6a6a6;left:910.50px;transform:scaleX(0.8034);">стили</div>
<svg style="left:938px;top:259px" width="6" height="3"><path d="M0 0H6L3 3Z" fill="#c5c5c5"/></svg>
<svg style="left:954px;top:217px" width="13" height="13"><path d="M2 5L7 1L11 6L6 10Z" fill="#fff" stroke="#b5b5b5" stroke-width="0.9"/><path d="M1 11H12" stroke="#ddd" stroke-width="2"/></svg>
<div class="t" id="t50" style="top:217.00px;font-size:11px;line-height:11px;color:#a6a6a6;left:968.20px;transform:scaleX(0.8582);">Заливка фигуры</div>
<svg style="left:954px;top:235px" width="13" height="12"><path d="M1 3H7M1 3V11H9V7" fill="none" stroke="#b5b5b5" stroke-width="0.9"/><path d="M5 8L11 1" stroke="#b5b5b5" stroke-width="1.2"/></svg>
<div class="t" id="t51" style="top:235.00px;font-size:11px;line-height:11px;color:#a6a6a6;left:968.20px;transform:scaleX(0.8749);">Контур фигуры</div>
<svg style="left:954px;top:253px" width="13" height="11"><path d="M1 7L8 1L12 5L5 10Z" fill="#e0e0e0" stroke="#b5b5b5" stroke-width="0.9"/></svg>
<div class="t" id="t52" style="top:254.00px;font-size:11px;line-height:11px;color:#a6a6a6;left:968.20px;transform:scaleX(0.8345);">Эффекты фигуры</div>
<svg style="left:1043px;top:221px" width="5" height="3"><path d="M0 0H5L2.5 2.5Z" fill="#c5c5c5"/></svg>
<svg style="left:1038px;top:240px" width="5" height="3"><path d="M0 0H5L2.5 2.5Z" fill="#c5c5c5"/></svg>
<svg style="left:1047px;top:258px" width="5" height="3"><path d="M0 0H5L2.5 2.5Z" fill="#c5c5c5"/></svg>
<div class="t" id="t53" style="top:271.00px;font-size:10.5px;line-height:10.5px;color:#5e5e5e;left:864.60px;transform:scaleX(0.8432);">Рисование</div>
<svg style="left:1051px;top:275px" width="6" height="6"><path d="M0.5 0.5H5.5V5.5H0.5Z" fill="none" stroke="#bbb" stroke-width="0.8"/></svg>
<svg style="left:1066px;top:217px" width="11" height="12"><circle cx="6.5" cy="4.5" r="3.5" fill="none" stroke="#2f6fb8" stroke-width="1.5"/><path d="M4 7L1 11" stroke="#2f6fb8" stroke-width="1.8"/></svg>
<div class="t" id="t54" style="top:217.00px;font-size:11px;line-height:11px;color:#444;left:1081.50px;transform:scaleX(0.8442);">Найти</div>
<div class="t" id="t55" style="top:233.00px;font-size:8px;line-height:8px;color:#6f5aa8;left:1066.00px;">ab</div>
<div class="t" id="t56" style="top:239.00px;font-size:8px;line-height:8px;color:#2f6fb8;left:1068.00px;">ac</div>
<div class="t" id="t57" style="top:235.00px;font-size:11px;line-height:11px;color:#444;left:1081.50px;transform:scaleX(0.8394);">Заменить</div>
<svg style="left:1131px;top:240px" width="5" height="3"><path d="M0 0H5L2.5 2.5Z" fill="#666"/></svg>
<svg style="left:1069px;top:253px" width="9" height="12"><path d="M1 1L8 7.5H4.5L6 11L4.5 11.5L3 8L1 10Z" fill="#fff" stroke="#555" stroke-width="0.9"/></svg>
<div class="t" id="t58" style="top:254.00px;font-size:11px;line-height:11px;color:#444;left:1081.50px;transform:scaleX(0.8079);">Выделить</div>
<svg style="left:1126px;top:258px" width="5" height="3"><path d="M0 0H5L2.5 2.5Z" fill="#666"/></svg>
<div class="t" id="t59" style="top:271.00px;font-size:10.5px;line-height:10.5px;color:#5e5e5e;left:1066.30px;transform:scaleX(0.8637);">Редактирование</div>
<svg style="left:1504px;top:273px" width="9" height="6"><path d="M1 5L4.5 1.5L8 5" fill="none" stroke="#555" stroke-width="1.4"/></svg>
<div class="a" style="left:0;top:285px;width:1520px;height:685px;background:#e6e6e8"></div>
<div class="a" style="left:229px;top:285px;width:1px;height:685px;background:#d4d4d4"></div>
<div class="a" style="left:215px;top:286px;width:11px;height:684px;background:#dcdcdc"></div>
<div class="a" style="left:215px;top:286px;width:11px;height:12px;background:#fff;border:1px solid #cfcfcf"></div>
<svg style="left:217px;top:290px" width="7" height="4"><path d="M0 4L3.5 0L7 4Z" fill="#666"/></svg>
<div class="a" style="left:215px;top:298px;width:11px;height:297px;background:#fff;border:1px solid #cfcfcf"></div>
<div class="a" style="left:215px;top:958px;width:11px;height:12px;background:#fff;border:1px solid #cfcfcf"></div>
<svg style="left:217px;top:962px" width="7" height="4"><path d="M0 0L3.5 4L7 0Z" fill="#666"/></svg>
<div class="a" style="left:1507px;top:286px;width:12px;height:684px;background:#dcdcdc"></div>
<div class="a" style="left:1507px;top:286px;width:12px;height:12px;background:#fff;border:1px solid #cfcfcf"></div>
<svg style="left:1510px;top:290px" width="7" height="4"><path d="M0 4L3.5 0L7 4Z" fill="#666"/></svg>
<div class="a" style="left:1507px;top:450px;width:12px;height:40px;background:#fff;border:1px solid #cfcfcf"></div>
<div class="a" style="left:1507px;top:913px;width:12px;height:12px;background:#fff;border:1px solid #cfcfcf"></div>
<svg style="left:1510px;top:917px" width="7" height="4"><path d="M0 0L3.5 4L7 0Z" fill="#666"/></svg>
<div class="a" style="left:1502px;top:926px;width:18px;height:44px;background:#e6e6e6"></div>
<svg style="left:1509px;top:928px" width="8" height="22"><path d="M0.5 1H7.5M0 5L4 1.5L8 5M0 8.5L4 5L8 8.5" fill="none" stroke="#666" stroke-width="1.3"/><path d="M0.5 20.5H7.5M0 14L4 17.5L8 14M0 17.5L4 21L8 17.5" fill="none" stroke="#666" stroke-width="1.3"/></svg>
<div class="a" style="left:0;top:970px;width:1520px;height:19px;background:#f0eff2;border-top:1px solid #c6c6c8"></div>
<div class="t" id="t60" style="top:975.00px;font-size:10.5px;line-height:10.5px;color:#555;left:5.80px;transform:scaleX(0.8131);">Слайд 4 из 13</div>
<svg style="left:77px;top:975px" width="12" height="10"><path d="M0.5 1.5H5L6 2.5V9.5H0.5ZM6 2.5L7 1.5H9" fill="none" stroke="#777" stroke-width="0.9"/><path d="M7 8L11 2" stroke="#777" stroke-width="1.1"/></svg>
<div class="t" id="t61" style="top:975.00px;font-size:10.5px;line-height:10.5px;color:#555;left:102.50px;transform:scaleX(0.8624);">русский</div>
<svg style="left:1091px;top:975px" width="11" height="10"><path d="M5.5 0L3 2.5H8Z" fill="#777"/><path d="M0.5 4.5H10.5M0.5 6.8H10.5M0.5 9H10.5" stroke="#777" stroke-width="0.9"/></svg>
<div class="t" id="t62" style="top:975.00px;font-size:10.5px;line-height:10.5px;color:#555;left:1105.30px;transform:scaleX(0.8389);">Заметки</div>
<svg style="left:1157px;top:975px" width="10" height="11"><path d="M0 0H10V7H4L1.5 10V7H0Z" fill="#6a6a6a"/></svg>
<div class="t" id="t63" style="top:975.00px;font-size:10.5px;line-height:10.5px;color:#555;left:1169.60px;transform:scaleX(0.8940);">Примечания</div>
<div class="a" style="left:1239px;top:971px;width:30px;height:18px;background:#c9c9c9"></div>
<svg style="left:1246px;top:974px" width="104" height="12"><g fill="none" stroke="#6a6a6a" stroke-width="1">
<rect x="0.5" y="0.5" width="12" height="10"/><path d="M3.5 0.5V10.5M5 3H11V8H5"/>
<rect x="32" y="0.5" width="5" height="4"/><rect x="39" y="0.5" width="5" height="4"/><rect x="32" y="6.5" width="5" height="4"/><rect x="39" y="6.5" width="5" height="4"/>
<rect x="62.5" y="0.5" width="10" height="10"/><path d="M67.5 0.5V10.5M64 3H66M64 5H66M64 7H66M69 3H71M69 5H71M69 7H71"/>
<path d="M91 1H103M92 1V6H102V1M97 6V10M94 11L97 9L100 11"/>
</g></svg>
<div class="a" style="left:1360px;top:979px;width:7px;height:1.5px;background:#666"></div>
<div class="a" style="left:1373px;top:979px;width:77px;height:1px;background:#c2c2c2"></div>
<div class="a" style="left:1412px;top:975px;width:3px;height:10px;background:#666"></div>
<svg style="left:1452px;top:975px" width="9" height="9"><path d="M4.5 0.5V8.5M0.5 4.5H8.5" stroke="#555" stroke-width="1.5"/></svg>
<div class="t" id="t64" style="top:975.00px;font-size:10.5px;line-height:10.5px;color:#555;left:1470.90px;transform:scaleX(0.8436);">115%</div>
<svg style="left:1503px;top:974px" width="12" height="12"><rect x="0.5" y="0.5" width="11" height="11" fill="none" stroke="#777" stroke-width="0.9"/><path d="M3 3L5 5M9 3L7 5M3 9L5 7M9 9L7 7" stroke="#777" stroke-width="0.9"/></svg>
<div class="a" style="left:0;top:989px;width:1520px;height:16px;background:#1a1a1a"></div>
<div class="a" style="left:288px;top:297px;width:1162px;height:653px;background:#fff;box-shadow:0 0 0 1px #d4d4d6"></div>
<svg style="left:289px;top:300px" width="52" height="60">
<path d="M1 1H24Q25 1 25 3V57L17 47H6Q1 47 1 42Z" fill="#1b63b3"/>
<path d="M25 4Q25 1 28 1H51V42Q51 47 46 47H33L25 57Z" fill="#f5c67a"/>
<rect x="25" y="1" width="13" height="12" fill="#e8173a"/><rect x="38" y="1" width="13" height="12" fill="#a32135"/>
<rect x="25" y="13" width="13" height="12" fill="#ee5c8a"/><rect x="38" y="13" width="13" height="12" fill="#9c4d9d"/>
<rect x="25" y="25" width="13" height="13" fill="#86c340"/><rect x="38" y="25" width="13" height="13" fill="#4ea94a"/>
<path d="M38 38H51V42Q51 47 46 47H38Z" fill="#f8a91c"/>
<path d="M6 5H9V17Q9 19 7.5 19Q6 18 6 16ZM11.5 5H14.5V25Q13 25 12 23Q11.5 22 11.5 20ZM17 5H20V16Q20 18 18.5 19Q17 19 17 17Z" fill="#fff"/>
</svg>
<div class="t" id="t65" style="top:302.00px;font-size:7.8px;line-height:7.8px;color:#3a70b0;font-weight:bold;left:346.00px;transform:scaleX(0.8847);-webkit-text-stroke:0.35px">МОСКОВСКИЙ</div>
<div class="t" id="t66" style="top:310.00px;font-size:7.8px;line-height:7.8px;color:#3a70b0;font-weight:bold;left:346.00px;transform:scaleX(0.8770);-webkit-text-stroke:0.35px">ГОСУДАРСТВЕННЫЙ</div>
<div class="t" id="t67" style="top:318.00px;font-size:7.8px;line-height:7.8px;color:#3a70b0;font-weight:bold;left:346.00px;transform:scaleX(0.8615);-webkit-text-stroke:0.35px">ПСИХОЛОГО-</div>
<div class="t" id="t68" style="top:326.00px;font-size:7.8px;line-height:7.8px;color:#3a70b0;font-weight:bold;left:346.00px;transform:scaleX(0.8839);-webkit-text-stroke:0.35px">ПЕДАГОГИЧЕСКИЙ</div>
<div class="t" id="t69" style="top:334.00px;font-size:7.8px;line-height:7.8px;color:#3a70b0;font-weight:bold;left:346.00px;transform:scaleX(0.8723);-webkit-text-stroke:0.35px">УНИВЕРСИТЕТ</div>
<div class="t" id="t70" style="top:302.00px;font-size:26px;line-height:26px;color:#0c2461;font-weight:bold;left:439.20px;transform:scaleX(1.0485);-webkit-text-stroke:0.45px;">Ключевые направления сотрудничества с педагогическими вузами-</div>
<div class="t" id="t71" style="top:329.00px;font-size:26px;line-height:26px;color:#0c2461;font-weight:bold;left:823.90px;transform:scaleX(1.0307);-webkit-text-stroke:0.45px;">партнерами</div>
<svg style="left:0;top:0" width="1" height="1"><path d="M293 362.8L1429 359.4" stroke="#2593d6" stroke-width="3.2"/></svg>
<svg style="left:1389px;top:299px" width="50" height="62">
<path d="M1.5 1.5H16L24 7.5L32 1.5H47.5V47Q47.5 54 40 54H32L24 59.5L16 54H8Q1.5 54 1.5 47Z" fill="#fff" stroke="#4c5258" stroke-width="1.2"/>
<g fill="none" stroke-linecap="round" stroke-linejoin="round">
<g stroke="#5cb04a" stroke-width="1.8"><path d="M17 26L16 31.5L21 33L22.5 38"/><path d="M17 27L22 21.5"/></g>
<circle cx="14.7" cy="35" r="4.8" stroke="#5cb04a" stroke-width="1.1"/>
<g stroke="#e53b2c" stroke-width="2.3"><path d="M19.5 16.5L24 22L29.5 15.5"/><path d="M24 21V30L21.5 39M24 30L26.5 39"/></g>
<g stroke="#2c9ad8" stroke-width="2.3"><path d="M30 16.5L33.5 23.5L38 31"/><path d="M33.5 23L35 30.5L33.5 39M35 30.5L37.5 39"/></g>
</g>
<circle cx="16.3" cy="22.5" r="1.7" fill="#5cb04a"/><circle cx="24.4" cy="18" r="1.9" fill="#e53b2c"/><circle cx="33.7" cy="19.5" r="1.9" fill="#2c9ad8"/>
</svg>
<div class="t" id="t72" style="top:306.00px;font-size:10px;line-height:10px;color:#2344a4;font-weight:bold;left:1397.80px;transform:scaleX(1.0983);-webkit-text-stroke:0.45px;">РУМЦ</div>
<div class="t" style="left:1394px;top:339.5px;font:italic bold 13px/13px 'Liberation Sans';letter-spacing:-0.2px;-webkit-text-stroke:0.3px;transform:scaleX(0.82)"><span style="color:#d43a9a">М</span><span style="color:#f0542a">Г</span><span style="color:#e8c21a">П</span><span style="color:#4cb848">П</span><span style="color:#7a3ab0">У</span></div>
<div class="a" style="left:291.5px;top:372px;width:515.5px;height:58.5px;background:#dee8f6;border:2px solid #4a72a6"></div>
<div class="t" id="t73" style="top:374.00px;font-size:16.3px;line-height:16.3px;color:#0c2461;font-weight:bold;left:371.70px;transform:scaleX(1.1205);-webkit-text-stroke:0.45px;">КОНСАЛТИНГОВОЕ СОПРОВОЖДЕНИЕ</div>
<div class="t" id="t74" style="top:394.00px;font-size:16.3px;line-height:16.3px;color:#0c2461;font-weight:bold;left:300.70px;transform:scaleX(1.1017);-webkit-text-stroke:0.45px;">ПЕДАГОГИЧЕСКИХ ВУЗОВ-ПАРТНЕРОВ ПО ВОПРОСАМ</div>
<div class="t" id="t75" style="top:414.00px;font-size:16.3px;line-height:16.3px;color:#0c2461;font-weight:bold;left:530.60px;transform:scaleX(1.0555);-webkit-text-stroke:0.45px;">ИВО</div>
<div class="a" style="left:815.5px;top:372px;width:311.5px;height:58.5px;background:#dee8f6;border:2px solid #4a72a6"></div>
<div class="t" id="t76" style="top:384.00px;font-size:16.3px;line-height:16.3px;color:#0c2461;font-weight:bold;left:842.50px;transform:scaleX(1.1091);-webkit-text-stroke:0.45px;">РАЗВИТИЕ ИНКЛЮЗИВНОГО</div>
<div class="t" id="t77" style="top:404.00px;font-size:16.3px;line-height:16.3px;color:#0c2461;font-weight:bold;left:898.00px;transform:scaleX(1.0912);-webkit-text-stroke:0.45px;">ВОЛОНТЕРСТВА</div>
<div class="a" style="left:1132.5px;top:371.5px;width:312.5px;height:58.0px;background:#dee8f6;border:2px solid #4a72a6"></div>
<div class="t" id="t78" style="top:373.00px;font-size:16.3px;line-height:16.3px;color:#0c2461;font-weight:bold;left:1178.75px;transform:scaleX(1.1138);-webkit-text-stroke:0.45px;">УЧАСТИЕ В КОНКУРСАХ</div>
<div class="t" id="t79" style="top:393.00px;font-size:16.3px;line-height:16.3px;color:#0c2461;font-weight:bold;left:1224.70px;transform:scaleX(1.1133);-webkit-text-stroke:0.45px;">СТУДЕНТОВ С</div>
<div class="t" id="t80" style="top:413.00px;font-size:16.3px;line-height:16.3px;color:#0c2461;font-weight:bold;left:1199.70px;transform:scaleX(1.1467);-webkit-text-stroke:0.45px;">ИНВАЛИДНОСТЬЮ</div>
<div class="a" style="left:312.8px;top:444.7px;width:376.59999999999997px;height:66.55000000000001px;background:#dee8f6;border:2px solid #4a72a6"></div>
<div class="t" id="t81" style="top:460.00px;font-size:16.3px;line-height:16.3px;color:#0c2461;font-weight:bold;left:330.00px;transform:scaleX(1.1684);-webkit-text-stroke:0.45px;">Вебинары с координаторами вузов-</div>
<svg style="left:330px;top:475px" width="100" height="4"><path d="M0 2Q1.5 0 3 2T6 2T9 2T12 2T15 2T18 2T21 2T24 2T27 2T30 2T33 2T36 2T39 2T42 2T45 2T48 2T51 2T54 2T57 2T60 2T63 2T66 2T69 2T72 2T75 2T78 2T81 2T84 2T87 2T90 2T93 2" fill="none" stroke="#e02020" stroke-width="0.8"/></svg>
<div class="t" id="t82" style="top:481.00px;font-size:16.3px;line-height:16.3px;color:#0c2461;font-weight:bold;left:320.60px;transform:scaleX(1.1539);-webkit-text-stroke:0.45px;">партнеров по вопросам развития ИВО</div>
<div class="a" style="left:705px;top:447.2px;width:376px;height:61.55000000000001px;background:#dee8f6;border:2px solid #4a72a6"></div>
<div class="t" id="t83" style="top:450.00px;font-size:16.3px;line-height:16.3px;color:#0c2461;font-weight:bold;left:730.60px;transform:scaleX(1.1663);-webkit-text-stroke:0.45px;">Совместные решения конкретных</div>
<div class="t" id="t84" style="top:470.00px;font-size:16.3px;line-height:16.3px;color:#0c2461;font-weight:bold;left:738.40px;transform:scaleX(1.1565);-webkit-text-stroke:0.45px;">кейсов по обучению студентов с</div>
<div class="t" id="t85" style="top:490.00px;font-size:16.3px;line-height:16.3px;color:#0c2461;font-weight:bold;left:818.00px;transform:scaleX(1.1510);-webkit-text-stroke:0.45px;">инвалидностью</div>
<div class="a" style="left:1107.5px;top:445.3px;width:305.5px;height:63.44999999999999px;background:#dee8f6;border:2px solid #4a72a6"></div>
<div class="t" id="t86" style="top:452.00px;font-size:15.5px;line-height:15.5px;color:#0c2461;font-weight:bold;left:1111.00px;transform:scaleX(1.0324);-webkit-text-stroke:0.45px;">«ТОЧКИ КИПЕНИЯ» ИНКЛЮЗИВНОГО</div>
<div class="t" id="t87" style="top:469.00px;font-size:15.5px;line-height:15.5px;color:#0c2461;font-weight:bold;left:1145.00px;transform:scaleX(0.9807);-webkit-text-stroke:0.45px;">ВЫСШЕГО ОБРАЗОВАНИЯ НА</div>
<div class="t" id="t88" style="top:486.00px;font-size:15.5px;line-height:15.5px;color:#0c2461;font-weight:bold;left:1128.75px;-webkit-text-stroke:0.45px;">ПЛОЩАДКАХ ВУЗОВ-ПАРТНЕРОВ</div>
<div class="a" style="left:411.25px;top:530.3px;width:142.75px;height:99.10000000000002px;border-radius:50%;background:#2aa9e3"></div>
<div class="t" id="t89" style="top:552.00px;font-size:19px;line-height:19px;color:#c00d1e;font-weight:bold;left:476.00px;transform:scaleX(1.1155);-webkit-text-stroke:0.45px;">8</div>
<div class="t" id="t90" style="top:574.00px;font-size:16.3px;line-height:16.3px;color:#c00d1e;font-weight:bold;left:425.30px;transform:scaleX(1.0822);-webkit-text-stroke:0.45px;">Федеральны</div>
<div class="t" id="t91" style="top:590.00px;font-size:16.3px;line-height:16.3px;color:#c00d1e;font-weight:bold;left:441.00px;transform:scaleX(1.0749);-webkit-text-stroke:0.45px;">х округов</div>
<div class="a" style="left:584.7px;top:525.6px;width:150.0px;height:102.5px;border-radius:50%;background:#2aa9e3"></div>
<div class="t" id="t92" style="top:546.00px;font-size:19px;line-height:19px;color:#c00d1e;font-weight:bold;left:647.20px;transform:scaleX(1.1826);-webkit-text-stroke:0.45px;">32</div>
<div class="t" id="t93" style="top:574.00px;font-size:16.3px;line-height:16.3px;color:#c00d1e;font-weight:bold;left:637.80px;transform:scaleX(1.0057);-webkit-text-stroke:0.45px;">Вуза-</div>
<div class="t" id="t94" style="top:590.00px;font-size:16.3px;line-height:16.3px;color:#c00d1e;font-weight:bold;left:614.40px;transform:scaleX(1.0610);-webkit-text-stroke:0.45px;">партнеров</div>
<div class="a" style="left:766px;top:521px;width:157px;height:107px;border-radius:50%;background:#2aa9e3"></div>
<div class="t" id="t95" style="top:555.00px;font-size:19px;line-height:19px;color:#c00d1e;font-weight:bold;left:831.60px;transform:scaleX(1.1826);-webkit-text-stroke:0.45px;">32</div>
<div class="t" id="t96" style="top:576.00px;font-size:16.3px;line-height:16.3px;color:#c00d1e;font-weight:bold;left:782.50px;transform:scaleX(1.0899);-webkit-text-stroke:0.45px;">координатора</div>
<div class="a" style="left:947.5px;top:521px;width:165.5999999999999px;height:110.89999999999998px;border-radius:50%;background:#2aa9e3"></div>
<div class="t" id="t97" style="top:558.00px;font-size:16.3px;line-height:16.3px;color:#c00d1e;font-weight:bold;left:963.00px;transform:scaleX(1.0680);-webkit-text-stroke:0.45px;">Сетевая форма</div>
<div class="t" id="t98" style="top:575.00px;font-size:16.3px;line-height:16.3px;color:#c00d1e;font-weight:bold;left:961.25px;transform:scaleX(1.0538);-webkit-text-stroke:0.45px;">сотрудничества</div>
<div class="a" style="left:1123.75px;top:523px;width:155.0px;height:102px;border-radius:50%;background:#2aa9e3"></div>
<div class="t" id="t99" style="top:549.00px;font-size:15px;line-height:15px;color:#c00d1e;font-weight:bold;left:1161.25px;-webkit-text-stroke:0.45px;">ОНЛАЙН и</div>
<div class="t" id="t100" style="top:563.00px;font-size:15px;line-height:15px;color:#c00d1e;font-weight:bold;left:1167.50px;transform:scaleX(0.9944);-webkit-text-stroke:0.45px;">ОФЛАЙН</div>
<div class="t" id="t101" style="top:583.00px;font-size:15px;line-height:15px;color:#c00d1e;font-weight:bold;left:1155.00px;transform:scaleX(1.0792);-webkit-text-stroke:0.45px;">технологии</div>
<div class="a" style="left:291.9px;top:645px;width:578.1px;height:58.75px;background:#dee8f6;border:2px solid #4a72a6"></div>
<div class="t" id="t102" style="top:647.00px;font-size:16.3px;line-height:16.3px;color:#0c2461;font-weight:bold;left:320.60px;transform:scaleX(1.1384);-webkit-text-stroke:0.45px;">ФОРМИРОВАНИЕ КОМПЕТЕНЦИЙ ППС И СОТРУДНИКОВ</div>
<div class="t" id="t103" style="top:667.00px;font-size:16.3px;line-height:16.3px;color:#0c2461;font-weight:bold;left:361.90px;transform:scaleX(1.1099);-webkit-text-stroke:0.45px;">ВУЗОВ В ОБЛАСТИ ИНКЛЮЗИВНОГО ВЫСШЕГО</div>
<div class="t" id="t104" style="top:687.00px;font-size:16.3px;line-height:16.3px;color:#0c2461;font-weight:bold;left:512.80px;transform:scaleX(1.0783);-webkit-text-stroke:0.45px;">ОБРАЗОВАНИЯ</div>
<div class="a" style="left:889.4px;top:646.6px;width:556.1999999999999px;height:59.64999999999998px;background:#dee8f6;border:2px solid #4a72a6"></div>
<div class="t" id="t105" style="top:658.00px;font-size:16.3px;line-height:16.3px;color:#0c2461;font-weight:bold;left:951.25px;transform:scaleX(1.1408);-webkit-text-stroke:0.45px;">ТИРАЖИРОВАНИЕ  ПРАКТИК ИНКЛЮЗИВНОГО</div>
<div class="t" id="t106" style="top:679.00px;font-size:16.3px;line-height:16.3px;color:#0c2461;font-weight:bold;left:939.40px;transform:scaleX(1.1221);-webkit-text-stroke:0.45px;">ОБРАЗОВАНИЯ СТУДЕНТОВ С ИНВАЛИДНОСТЬЮ</div>
<div class="a" style="left:301px;top:727px;width:282px;height:186px;background:#fbfbfb;overflow:hidden">
<div class="a" style="left:4px;top:3px;width:140px;height:3px;background:#c9c9c9"></div>
<div class="a" style="left:4px;top:11px;width:165px;height:2px;background:#b5b5b5"></div>
<div class="a" style="left:160px;top:3px;width:25px;height:3px;background:#e05050"></div>
<div class="a" style="left:12px;top:16px;width:75px;height:24px;background:#eeeeee"></div>
<div class="a" style="left:82px;top:16px;width:106px;height:24px;background:#d9cfc4"></div>
<div class="a" style="left:93px;top:21px;width:14px;height:16px;border-radius:7px;background:#7a5548"></div>
<div class="a" style="left:125px;top:21px;width:14px;height:16px;border-radius:7px;background:#8a6f5a"></div>
<div class="a" style="left:157px;top:21px;width:14px;height:16px;border-radius:7px;background:#a07a60"></div>
<div class="a" style="left:0;top:42px;width:198px;height:128px;background:#111"></div>
<div class="a" style="left:8px;top:46px;width:181px;height:118px;background:#c9d9ea"></div>
<div class="a" style="left:8px;top:46px;width:181px;height:22px;background:linear-gradient(#e8eef6,#c6d5e8)"></div>
<div class="a" style="left:10px;top:69px;width:22px;height:90px;background:#9bb9d6"></div>
<div class="a" style="left:12px;top:72px;width:18px;height:18px;background:#b9d68a"></div>
<div class="a" style="left:12px;top:94px;width:18px;height:18px;background:#b9d68a"></div>
<div class="a" style="left:12px;top:116px;width:18px;height:18px;background:#b9d68a"></div>
<div class="a" style="left:12px;top:138px;width:18px;height:18px;background:#b9d68a"></div>
<div class="a" style="left:34px;top:69px;width:155px;height:90px;background:linear-gradient(90deg,#3f70b8,#8fb0db 40%,#c2d6ee)"></div>
<div class="a" style="left:70px;top:69px;width:86px;height:80px;background:#d6e7b3;border:1px solid #9ab07a"></div>
<div class="a" style="left:78px;top:82px;width:66px;height:2.5px;background:#5a6a4a"></div>
<div class="a" style="left:76px;top:89px;width:70px;height:2.5px;background:#5a6a4a"></div>
<div class="a" style="left:84px;top:96px;width:56px;height:2.5px;background:#5a6a4a"></div>
<div class="a" style="left:88px;top:103px;width:46px;height:2.5px;background:#5a6a4a"></div>
<div class="a" style="left:72px;top:116px;width:24px;height:30px;background:#000"></div>
<div class="a" style="left:78px;top:123px;width:13px;height:17px;background:#fff;transform:skewX(-10deg)"></div>
<div class="a" style="left:146px;top:62px;width:42px;height:38px;background:#bdbdbd"></div>
<div class="a" style="left:142px;top:146px;width:41px;height:11px;background:#bdbdbd"></div>
<div class="a" style="left:34px;top:158px;width:155px;height:7px;background:#f0f0f0"></div>
<div class="a" style="left:202px;top:12px;width:22px;height:2px;background:#999"></div>
<div class="a" style="left:206px;top:22px;width:68px;height:6px;border:1px solid #ddd;border-radius:3px"></div>
<div class="a" style="left:208px;top:39px;width:55px;height:2px;background:#aaa"></div>
<div class="a" style="left:208px;top:51px;width:55px;height:2px;background:#aaa"></div>
<div class="a" style="left:205px;top:60px;width:28px;height:6px;background:#e6e6e6;border-radius:3px"></div>
<div class="a" style="left:237px;top:60px;width:28px;height:6px;background:#e6e6e6;border-radius:3px"></div>
<div class="a" style="left:203px;top:70px;width:78px;height:1px;background:#ddd"></div>
<div class="a" style="left:208px;top:82px;width:60px;height:1.5px;background:#ccc"></div>
<div class="a" style="left:208px;top:92px;width:65px;height:1.5px;background:#ccc"></div>
<div class="a" style="left:208px;top:102px;width:55px;height:1.5px;background:#ccc"></div>
<div class="a" style="left:208px;top:112px;width:62px;height:1.5px;background:#ccc"></div>
<div class="a" style="left:208px;top:122px;width:50px;height:1.5px;background:#ccc"></div>
<div class="a" style="left:205px;top:143px;width:76px;height:6px;border:1px solid #ddd"></div>
<div class="a" style="left:30px;top:174px;width:150px;height:8px;background:#f0f0f0;border-radius:4px"></div>
<div class="a" style="left:224px;top:173px;width:10px;height:10px;border-radius:50%;background:#e8412c"></div>
<div class="a" style="left:245px;top:176px;width:30px;height:4px;background:#e0e0e0"></div>
</div>
<div class="a" style="left:592px;top:725px;width:292px;height:187px;background:#fbfbfb;overflow:hidden">
<div class="a" style="left:4px;top:3px;width:150px;height:3px;background:#c9c9c9"></div>
<div class="a" style="left:4px;top:11px;width:170px;height:2px;background:#b5b5b5"></div>
<div class="a" style="left:176px;top:3px;width:30px;height:3px;background:#e05050"></div>
<div class="a" style="left:10px;top:16px;width:55px;height:24px;background:#e8e8e8"></div>
<div class="a" style="left:65px;top:16px;width:24px;height:24px;background:#dde8f0;border:1px solid #5bb2e0"></div>
<div class="a" style="left:90px;top:16px;width:105px;height:24px;background:#cfc2b8"></div>
<div class="a" style="left:113px;top:21px;width:14px;height:16px;border-radius:7px;background:#8a6b5e"></div>
<div class="a" style="left:145px;top:21px;width:14px;height:16px;border-radius:7px;background:#7a5850"></div>
<div class="a" style="left:177px;top:21px;width:14px;height:16px;border-radius:7px;background:#6e5048"></div>
<div class="a" style="left:0;top:41px;width:206px;height:130px;background:#2a2a2a"></div>
<div class="a" style="left:14px;top:51px;width:105px;height:92px;background:#fff"></div>
<div class="a" style="left:14px;top:51px;width:105px;height:10px;background:#e9e4e4"></div>
<div class="a" style="left:16px;top:62px;width:12px;height:78px;background:#eee"></div>
<div class="a" style="left:17px;top:64px;width:10px;height:8px;background:#cf5060"></div>
<div class="a" style="left:17px;top:76px;width:10px;height:8px;background:#5078c0"></div>
<div class="a" style="left:17px;top:88px;width:10px;height:8px;background:#cf6060"></div>
<div class="a" style="left:17px;top:100px;width:10px;height:8px;background:#cf6060"></div>
<div class="a" style="left:34px;top:63px;width:80px;height:78px;background:#fff;border-left:2px solid #e2a020"></div>
<div class="a" style="left:36px;top:64px;width:78px;height:10px;background:#d6335c"></div>
<div class="a" style="left:40px;top:80px;width:30px;height:2px;background:#888"></div>
<div class="a" style="left:40px;top:86px;width:30px;height:2px;background:#888"></div>
<div class="a" style="left:40px;top:92px;width:30px;height:2px;background:#888"></div>
<div class="a" style="left:76px;top:78px;width:32px;height:26px;background:#a08070"></div>
<div class="a" style="left:40px;top:107px;width:32px;height:30px;background:#b7a4a0"></div>
<div class="a" style="left:76px;top:107px;width:34px;height:32px;background:#9a8a80"></div>
<div class="a" style="left:44px;top:110px;width:10px;height:12px;background:#d23a3a"></div>
<div class="a" style="left:210px;top:20px;width:22px;height:2px;background:#999"></div>
<div class="a" style="left:212px;top:27px;width:70px;height:6px;border:1px solid #ddd;border-radius:3px"></div>
<div class="a" style="left:212px;top:40px;width:50px;height:6px;background:#eee"></div>
<div class="a" style="left:212px;top:56px;width:60px;height:8px;background:#eee"></div>
<div class="a" style="left:212px;top:70px;width:32px;height:7px;background:#e6e6e6;border-radius:3px"></div>
<div class="a" style="left:248px;top:70px;width:32px;height:7px;background:#e6e6e6;border-radius:3px"></div>
<div class="a" style="left:210px;top:92px;width:20px;height:2px;background:#999"></div>
<div class="a" style="left:210px;top:100px;width:62px;height:1.5px;background:#aaa"></div>
<div class="a" style="left:210px;top:108px;width:76px;height:1.5px;background:#bbb"></div>
<div class="a" style="left:210px;top:114px;width:76px;height:1.5px;background:#bbb"></div>
<div class="a" style="left:210px;top:120px;width:76px;height:1.5px;background:#bbb"></div>
<div class="a" style="left:210px;top:126px;width:76px;height:1.5px;background:#bbb"></div>
<div class="a" style="left:210px;top:132px;width:76px;height:1.5px;background:#bbb"></div>
<div class="a" style="left:210px;top:138px;width:60px;height:1.5px;background:#bbb"></div>
<div class="a" style="left:210px;top:160px;width:50px;height:1.5px;background:#ccc"></div>
<div class="a" style="left:30px;top:174px;width:170px;height:8px;background:#f0f0f0;border-radius:4px"></div>
<div class="a" style="left:231px;top:174px;width:10px;height:10px;border-radius:50%;background:#e8412c"></div>
<div class="a" style="left:255px;top:176px;width:30px;height:4px;background:#e0e0e0"></div>
</div>
<div class="a" style="left:891px;top:724px;width:266px;height:186px;background:repeating-linear-gradient(45deg,#e9dc8a 0 2px,#f2eab0 2px 4px);overflow:hidden">
<div class="a" style="left:9px;top:9px;width:248px;height:168px;background:linear-gradient(135deg,#f8f3d0,#fbf9e8 50%,#eef3e0);border:1px solid #e2d690;box-shadow:0 0 6px 3px #f4eebc"></div>
<div class="a" style="left:128px;top:12px;width:1px;height:160px;background:#efe8c0"></div>
<div class="a" style="left:35px;top:25px;width:60px;height:2px;background:#6b6b5a"></div>
<div class="a" style="left:22px;top:38px;width:86px;height:1.5px;background:#9a9a8a"></div>
<div class="a" style="left:22px;top:42px;width:86px;height:1.5px;background:#9a9a8a"></div>
<div class="a" style="left:22px;top:46px;width:86px;height:1.5px;background:#9a9a8a"></div>
<div class="a" style="left:22px;top:50px;width:86px;height:1.5px;background:#9a9a8a"></div>
<div class="a" style="left:34px;top:66px;width:64px;height:4px;background:#6a6a60"></div>
<div class="a" style="left:32px;top:76px;width:66px;height:1.5px;background:#a8a898"></div>
<div class="a" style="left:40px;top:85px;width:50px;height:2px;background:#c25a5a"></div>
<div class="a" style="left:40px;top:103px;width:46px;height:1.5px;background:#b4b4a4"></div>
<div class="a" style="left:50px;top:128px;width:30px;height:1.5px;background:#b4b4a4"></div>
<div class="a" style="left:50px;top:134px;width:30px;height:1.5px;background:#b0b0a0"></div>
<div class="a" style="left:56px;top:142px;width:18px;height:1.5px;background:#b4b4a4"></div>
<div class="a" style="left:56px;top:149px;width:22px;height:1.5px;background:#b4b4a4"></div>
<div class="a" style="left:56px;top:155px;width:22px;height:1.5px;background:#b0b0a0"></div>
<div class="a" style="left:150px;top:14px;width:90px;height:1.5px;background:#b4b4a4"></div>
<div class="a" style="left:162px;top:20px;width:66px;height:1.5px;background:#9a9a8a"></div>
<div class="a" style="left:160px;top:28px;width:70px;height:1.5px;background:#b0b0a0"></div>
<div class="a" style="left:165px;top:37px;width:60px;height:1.5px;background:#bcbcac"></div>
<div class="a" style="left:145px;top:47px;width:100px;height:1.5px;background:#a8a898"></div>
<div class="a" style="left:160px;top:51px;width:70px;height:1.5px;background:#a8a898"></div>
<div class="a" style="left:160px;top:62px;width:75px;height:1.5px;background:#9a9a8a"></div>
<div class="a" style="left:165px;top:67px;width:65px;height:1.5px;background:#a8a898"></div>
<div class="a" style="left:160px;top:77px;width:70px;height:1.5px;background:#bcbcac"></div>
<div class="a" style="left:150px;top:85px;width:90px;height:1.5px;background:#9a9a8a"></div>
<div class="a" style="left:155px;top:91px;width:80px;height:1.5px;background:#a8a898"></div>
<div class="a" style="left:180px;top:118px;width:22px;height:1.5px;background:#b4b4a4"></div>
<div class="a" style="left:180px;top:124px;width:26px;height:1.5px;background:#a8a898"></div>
<div class="a" style="left:130px;top:123px;width:38px;height:38px;border-radius:50%;border:2px solid #7fb6a8;background:radial-gradient(#d6ead8,#bcdccf)"></div>
<div class="a" style="left:180px;top:150px;width:30px;height:12px;border-bottom:2px solid #333;transform:skewX(-40deg)"></div>
<div class="a" style="left:212px;top:146px;width:22px;height:1.5px;background:#b4b4a4"></div>
<div class="a" style="left:212px;top:154px;width:22px;height:1.5px;background:#b4b4a4"></div>
</div>
<div class="a" style="left:1169px;top:733px;width:239px;height:177px;background:#b08048;overflow:hidden">
<div class="a" style="left:0;top:0;width:135px;height:9px;background:linear-gradient(90deg,#4a4a48,#6a6e70 40%,#3e4244)"></div>
<div class="a" style="left:0;top:9px;width:135px;height:36px;background:repeating-linear-gradient(180deg,#b9893f 0 10px,#a27434 10px 12px)"></div>
<div class="a" style="left:0;top:36px;width:30px;height:40px;background:#d8d2c6"></div>
<div class="a" style="left:30px;top:42px;width:120px;height:32px;background:#dcd6ca"></div>
<div class="a" style="left:32px;top:42px;width:24px;height:20px;background:#8a6a48"></div>
<div class="a" style="left:59px;top:44px;width:21px;height:30px;background:#b08a60"></div>
<div class="a" style="left:91px;top:44px;width:21px;height:24px;background:#b08a60"></div>
<div class="a" style="left:128px;top:0;width:111px;height:70px;background:linear-gradient(200deg,#f4f6f8 0%,#dfe6ea 50%,#cfd6d8 100%)"></div>
<div class="a" style="left:128px;top:0;width:46px;height:42px;background:#a8804a;clip-path:polygon(0 0,100% 0,10% 100%,0 100%)"></div>
<div class="a" style="left:180px;top:12px;width:59px;height:78px;background:#5e3e2a;clip-path:polygon(0 22%,100% 0,100% 100%,0 72%)"></div>
<div class="a" style="left:186px;top:20px;width:50px;height:56px;background:repeating-linear-gradient(90deg,transparent 0 1px,#5e3e2a 1px 2px,transparent 2px 8px),linear-gradient(180deg,#c8c4c8 0 44%,#5e3e2a 44% 52%,#d0ccd0 52% 100%);clip-path:polygon(0 25%,100% 0,100% 100%,0 80%)"></div><div class="a" style="left:190px;top:28px;width:44px;height:44px;background:repeating-linear-gradient(90deg,rgba(120,60,60,.35) 0 3px,rgba(60,80,140,.3) 3px 7px);clip-path:polygon(0 20%,100% 0,100% 100%,0 80%)"></div>
<div class="a" style="left:0;top:62px;width:180px;height:45px;background:#c8b8a0"></div>
<div class="a" style="left:170px;top:70px;width:69px;height:107px;background:linear-gradient(180deg,#b07a44,#9a6838);clip-path:polygon(0 0,100% 25%,100% 100%,0 100%)"></div>
<div class="a" style="left:0;top:62px;width:18px;height:60px;background:#e0dcd6"></div>
<div class="a" style="left:4px;top:72px;width:14px;height:50px;background:#6e6a6e"></div>
<div class="a" style="left:16px;top:78px;width:50px;height:12px;background:#9a7a5a"></div>
<div class="a" style="left:64px;top:70px;width:18px;height:22px;border-radius:8px 8px 0 0;background:#6a2a3a"></div>
<div class="a" style="left:86px;top:66px;width:16px;height:24px;border-radius:8px 8px 0 0;background:#d8383a"></div>
<div class="a" style="left:104px;top:68px;width:18px;height:24px;border-radius:8px 8px 0 0;background:#f0e8e0"></div>
<div class="a" style="left:124px;top:66px;width:18px;height:26px;border-radius:8px 8px 0 0;background:#4a3a3a"></div>
<div class="a" style="left:146px;top:62px;width:22px;height:30px;border-radius:10px 10px 0 0;background:#7a7a80"></div>
<div class="a" style="left:66px;top:60px;width:10px;height:10px;border-radius:5px;background:#c8a090"></div>
<div class="a" style="left:90px;top:57px;width:10px;height:10px;border-radius:5px;background:#e0b0a0"></div>
<div class="a" style="left:108px;top:58px;width:10px;height:10px;border-radius:5px;background:#d8b098"></div>
<div class="a" style="left:150px;top:54px;width:12px;height:11px;border-radius:6px;background:#c8a090"></div>
<div class="a" style="left:126px;top:76px;width:24px;height:30px;border-radius:10px 10px 0 0;background:#4a3a30"></div>
<div class="a" style="left:128px;top:82px;width:20px;height:22px;border-radius:10px;background:#d8a890"></div>
<div class="a" style="left:62px;top:92px;width:110px;height:20px;background:#b07a48"></div>
<div class="a" style="left:20px;top:100px;width:40px;height:4px;background:#a07040"></div>
<div class="a" style="left:18px;top:80px;width:42px;height:70px;border-radius:18px 18px 0 0;background:#3a2a28"></div>
<div class="a" style="left:26px;top:88px;width:24px;height:30px;border-radius:12px;background:#e2b098"></div>
<div class="a" style="left:20px;top:108px;width:48px;height:42px;border-radius:14px 14px 0 0;background:#3a9ccc"></div>
<div class="a" style="left:80px;top:86px;width:42px;height:64px;border-radius:18px 18px 0 0;background:#a88860"></div>
<div class="a" style="left:89px;top:92px;width:24px;height:30px;border-radius:12px;background:#e6b8a0"></div>
<div class="a" style="left:80px;top:110px;width:48px;height:40px;border-radius:14px 14px 0 0;background:#3c3048"></div>
<div class="a" style="left:136px;top:82px;width:44px;height:52px;border-radius:20px 20px 0 0;background:#c8b088"></div>
<div class="a" style="left:146px;top:90px;width:26px;height:32px;border-radius:13px;background:#ecc4ac"></div>
<div class="a" style="left:130px;top:108px;width:60px;height:48px;border-radius:20px 20px 0 0;background:#f4f2ee"></div>
<div class="a" style="left:0;top:142px;width:239px;height:35px;background:linear-gradient(180deg,#c08050,#a86a40)"></div>
<div class="a" style="left:22px;top:151px;width:14px;height:9px;background:#1e1e22;transform:rotate(-18deg)"></div>
<div class="a" style="left:107px;top:150px;width:12px;height:10px;background:#1e1e22;transform:rotate(10deg)"></div>
<div class="a" style="left:83px;top:148px;width:18px;height:10px;background:#f8f8f4;transform:rotate(-12deg)"></div>
<div class="a" style="left:135px;top:150px;width:44px;height:20px;background:#f4f2ee;transform:rotate(4deg)"></div>
<div class="a" style="left:186px;top:150px;width:14px;height:8px;background:#c83848;transform:rotate(18deg)"></div>
<div class="a" style="left:212px;top:138px;width:30px;height:40px;border-radius:16px 0 0 0;background:#1e1e20"></div>
</div>
<div class="a" style="left:288px;top:915px;width:1162px;height:35px;background:#2e74b8"></div>
<div class="t" id="t107" style="top:923.00px;font-size:21px;line-height:21px;color:#fff;font-weight:bold;left:770.00px;transform:scaleX(0.9311);">РУМЦ МГППУ,  2022 г.</div>
<div class="a" style="left:0;top:0;width:1920px;height:1080px;transform-origin:0 0;transform:translate(1145.009px,23.087px) scale(0.11351)">
<div class="a" style="left:288px;top:297px;width:1162px;height:653px;background:#fff;box-shadow:0 0 0 1px #d4d4d6"></div>
<svg style="left:289px;top:300px" width="52" height="60">
<path d="M1 1H24Q25 1 25 3V57L17 47H6Q1 47 1 42Z" fill="#1b63b3"/>
<path d="M25 4Q25 1 28 1H51V42Q51 47 46 47H33L25 57Z" fill="#f5c67a"/>
<rect x="25" y="1" width="13" height="12" fill="#e8173a"/><rect x="38" y="1" width="13" height="12" fill="#a32135"/>
<rect x="25" y="13" width="13" height="12" fill="#ee5c8a"/><rect x="38" y="13" width="13" height="12" fill="#9c4d9d"/>
<rect x="25" y="25" width="13" height="13" fill="#86c340"/><rect x="38" y="25" width="13" height="13" fill="#4ea94a"/>
<path d="M38 38H51V42Q51 47 46 47H38Z" fill="#f8a91c"/>
<path d="M6 5H9V17Q9 19 7.5 19Q6 18 6 16ZM11.5 5H14.5V25Q13 25 12 23Q11.5 22 11.5 20ZM17 5H20V16Q20 18 18.5 19Q17 19 17 17Z" fill="#fff"/>
</svg>
<div class="t" style="top:302.00px;font-size:7.8px;line-height:7.8px;color:#3a70b0;font-weight:bold;left:346.00px;transform:scaleX(0.8847);-webkit-text-stroke:0.35px">МОСКОВСКИЙ</div>
<div class="t" style="top:310.00px;font-size:7.8px;line-height:7.8px;color:#3a70b0;font-weight:bold;left:346.00px;transform:scaleX(0.8770);-webkit-text-stroke:0.35px">ГОСУДАРСТВЕННЫЙ</div>
<div class="t" style="top:318.00px;font-size:7.8px;line-height:7.8px;color:#3a70b0;font-weight:bold;left:346.00px;transform:scaleX(0.8615);-webkit-text-stroke:0.35px">ПСИХОЛОГО-</div>
<div class="t" style="top:326.00px;font-size:7.8px;line-height:7.8px;color:#3a70b0;font-weight:bold;left:346.00px;transform:scaleX(0.8839);-webkit-text-stroke:0.35px">ПЕДАГОГИЧЕСКИЙ</div>
<div class="t" style="top:334.00px;font-size:7.8px;line-height:7.8px;color:#3a70b0;font-weight:bold;left:346.00px;transform:scaleX(0.8723);-webkit-text-stroke:0.35px">УНИВЕРСИТЕТ</div>
<div class="t" style="top:302.00px;font-size:26px;line-height:26px;color:#0c2461;font-weight:bold;left:439.20px;transform:scaleX(1.0485);-webkit-text-stroke:0.45px;">Ключевые направления сотрудничества с педагогическими вузами-</div>
<div class="t" style="top:329.00px;font-size:26px;line-height:26px;color:#0c2461;font-weight:bold;left:823.90px;transform:scaleX(1.0307);-webkit-text-stroke:0.45px;">партнерами</div>
<svg style="left:0;top:0" width="1" height="1"><path d="M293 362.8L1429 359.4" stroke="#2593d6" stroke-width="3.2"/></svg>
<svg style="left:1389px;top:299px" width="50" height="62">
<path d="M1.5 1.5H16L24 7.5L32 1.5H47.5V47Q47.5 54 40 54H32L24 59.5L16 54H8Q1.5 54 1.5 47Z" fill="#fff" stroke="#4c5258" stroke-width="1.2"/>
<g fill="none" stroke-linecap="round" stroke-linejoin="round">
<g stroke="#5cb04a" stroke-width="1.8"><path d="M17 26L16 31.5L21 33L22.5 38"/><path d="M17 27L22 21.5"/></g>
<circle cx="14.7" cy="35" r="4.8" stroke="#5cb04a" stroke-width="1.1"/>
<g stroke="#e53b2c" stroke-width="2.3"><path d="M19.5 16.5L24 22L29.5 15.5"/><path d="M24 21V30L21.5 39M24 30L26.5 39"/></g>
<g stroke="#2c9ad8" stroke-width="2.3"><path d="M30 16.5L33.5 23.5L38 31"/><path d="M33.5 23L35 30.5L33.5 39M35 30.5L37.5 39"/></g>
</g>
<circle cx="16.3" cy="22.5" r="1.7" fill="#5cb04a"/><circle cx="24.4" cy="18" r="1.9" fill="#e53b2c"/><circle cx="33.7" cy="19.5" r="1.9" fill="#2c9ad8"/>
</svg>
<div class="t" style="top:306.00px;font-size:10px;line-height:10px;color:#2344a4;font-weight:bold;left:1397.80px;transform:scaleX(1.0983);-webkit-text-stroke:0.45px;">РУМЦ</div>
<div class="t" style="left:1394px;top:339.5px;font:italic bold 13px/13px 'Liberation Sans';letter-spacing:-0.2px;-webkit-text-stroke:0.3px;transform:scaleX(0.82)"><span style="color:#d43a9a">М</span><span style="color:#f0542a">Г</span><span style="color:#e8c21a">П</span><span style="color:#4cb848">П</span><span style="color:#7a3ab0">У</span></div>
<div class="a" style="left:291.5px;top:372px;width:515.5px;height:58.5px;background:#dee8f6;border:2px solid #4a72a6"></div>
<div class="t" style="top:374.00px;font-size:16.3px;line-height:16.3px;color:#0c2461;font-weight:bold;left:371.70px;transform:scaleX(1.1205);-webkit-text-stroke:0.45px;">КОНСАЛТИНГОВОЕ СОПРОВОЖДЕНИЕ</div>
<div class="t" style="top:394.00px;font-size:16.3px;line-height:16.3px;color:#0c2461;font-weight:bold;left:300.70px;transform:scaleX(1.1017);-webkit-text-stroke:0.45px;">ПЕДАГОГИЧЕСКИХ ВУЗОВ-ПАРТНЕРОВ ПО ВОПРОСАМ</div>
<div class="t" style="top:414.00px;font-size:16.3px;line-height:16.3px;color:#0c2461;font-weight:bold;left:530.60px;transform:scaleX(1.0555);-webkit-text-stroke:0.45px;">ИВО</div>
<div class="a" style="left:815.5px;top:372px;width:311.5px;height:58.5px;background:#dee8f6;border:2px solid #4a72a6"></div>
<div class="t" style="top:384.00px;font-size:16.3px;line-height:16.3px;color:#0c2461;font-weight:bold;left:842.50px;transform:scaleX(1.1091);-webkit-text-stroke:0.45px;">РАЗВИТИЕ ИНКЛЮЗИВНОГО</div>
<div class="t" style="top:404.00px;font-size:16.3px;line-height:16.3px;color:#0c2461;font-weight:bold;left:898.00px;transform:scaleX(1.0912);-webkit-text-stroke:0.45px;">ВОЛОНТЕРСТВА</div>
<div class="a" style="left:1132.5px;top:371.5px;width:312.5px;height:58.0px;background:#dee8f6;border:2px solid #4a72a6"></div>
<div class="t" style="top:373.00px;font-size:16.3px;line-height:16.3px;color:#0c2461;font-weight:bold;left:1178.75px;transform:scaleX(1.1138);-webkit-text-stroke:0.45px;">УЧАСТИЕ В КОНКУРСАХ</div>
<div class="t" style="top:393.00px;font-size:16.3px;line-height:16.3px;color:#0c2461;font-weight:bold;left:1224.70px;transform:scaleX(1.1133);-webkit-text-stroke:0.45px;">СТУДЕНТОВ С</div>
<div class="t" style="top:413.00px;font-size:16.3px;line-height:16.3px;color:#0c2461;font-weight:bold;left:1199.70px;transform:scaleX(1.1467);-webkit-text-stroke:0.45px;">ИНВАЛИДНОСТЬЮ</div>
<div class="a" style="left:312.8px;top:444.7px;width:376.59999999999997px;height:66.55000000000001px;background:#dee8f6;border:2px solid #4a72a6"></div>
<div class="t" style="top:460.00px;font-size:16.3px;line-height:16.3px;color:#0c2461;font-weight:bold;left:330.00px;transform:scaleX(1.1684);-webkit-text-stroke:0.45px;">Вебинары с координаторами вузов-</div>
<svg style="left:330px;top:475px" width="100" height="4"><path d="M0 2Q1.5 0 3 2T6 2T9 2T12 2T15 2T18 2T21 2T24 2T27 2T30 2T33 2T36 2T39 2T42 2T45 2T48 2T51 2T54 2T57 2T60 2T63 2T66 2T69 2T72 2T75 2T78 2T81 2T84 2T87 2T90 2T93 2" fill="none" stroke="#e02020" stroke-width="0.8"/></svg>
<div class="t" style="top:481.00px;font-size:16.3px;line-height:16.3px;color:#0c2461;font-weight:bold;left:320.60px;transform:scaleX(1.1539);-webkit-text-stroke:0.45px;">партнеров по вопросам развития ИВО</div>
<div class="a" style="left:705px;top:447.2px;width:376px;height:61.55000000000001px;background:#dee8f6;border:2px solid #4a72a6"></div>
<div class="t" style="top:450.00px;font-size:16.3px;line-height:16.3px;color:#0c2461;font-weight:bold;left:730.60px;transform:scaleX(1.1663);-webkit-text-stroke:0.45px;">Совместные решения конкретных</div>
<div class="t" style="top:470.00px;font-size:16.3px;line-height:16.3px;color:#0c2461;font-weight:bold;left:738.40px;transform:scaleX(1.1565);-webkit-text-stroke:0.45px;">кейсов по обучению студентов с</div>
<div class="t" style="top:490.00px;font-size:16.3px;line-height:16.3px;color:#0c2461;font-weight:bold;left:818.00px;transform:scaleX(1.1510);-webkit-text-stroke:0.45px;">инвалидностью</div>
<div class="a" style="left:1107.5px;top:445.3px;width:305.5px;height:63.44999999999999px;background:#dee8f6;border:2px solid #4a72a6"></div>
<div class="t" style="top:452.00px;font-size:15.5px;line-height:15.5px;color:#0c2461;font-weight:bold;left:1111.00px;transform:scaleX(1.0324);-webkit-text-stroke:0.45px;">«ТОЧКИ КИПЕНИЯ» ИНКЛЮЗИВНОГО</div>
<div class="t" style="top:469.00px;font-size:15.5px;line-height:15.5px;color:#0c2461;font-weight:bold;left:1145.00px;transform:scaleX(0.9807);-webkit-text-stroke:0.45px;">ВЫСШЕГО ОБРАЗОВАНИЯ НА</div>
<div class="t" style="top:486.00px;font-size:15.5px;line-height:15.5px;color:#0c2461;font-weight:bold;left:1128.75px;-webkit-text-stroke:0.45px;">ПЛОЩАДКАХ ВУЗОВ-ПАРТНЕРОВ</div>
<div class="a" style="left:411.25px;top:530.3px;width:142.75px;height:99.10000000000002px;border-radius:50%;background:#2aa9e3"></div>
<div class="t" style="top:552.00px;font-size:19px;line-height:19px;color:#c00d1e;font-weight:bold;left:476.00px;transform:scaleX(1.1155);-webkit-text-stroke:0.45px;">8</div>
<div class="t" style="top:574.00px;font-size:16.3px;line-height:16.3px;color:#c00d1e;font-weight:bold;left:425.30px;transform:scaleX(1.0822);-webkit-text-stroke:0.45px;">Федеральны</div>
<div class="t" style="top:590.00px;font-size:16.3px;line-height:16.3px;color:#c00d1e;font-weight:bold;left:441.00px;transform:scaleX(1.0749);-webkit-text-stroke:0.45px;">х округов</div>
<div class="a" style="left:584.7px;top:525.6px;width:150.0px;height:102.5px;border-radius:50%;background:#2aa9e3"></div>
<div class="t" style="top:546.00px;font-size:19px;line-height:19px;color:#c00d1e;font-weight:bold;left:647.20px;transform:scaleX(1.1826);-webkit-text-stroke:0.45px;">32</div>
<div class="t" style="top:574.00px;font-size:16.3px;line-height:16.3px;color:#c00d1e;font-weight:bold;left:637.80px;transform:scaleX(1.0057);-webkit-text-stroke:0.45px;">Вуза-</div>
<div class="t" style="top:590.00px;font-size:16.3px;line-height:16.3px;color:#c00d1e;font-weight:bold;left:614.40px;transform:scaleX(1.0610);-webkit-text-stroke:0.45px;">партнеров</div>
<div class="a" style="left:766px;top:521px;width:157px;height:107px;border-radius:50%;background:#2aa9e3"></div>
<div class="t" style="top:555.00px;font-size:19px;line-height:19px;color:#c00d1e;font-weight:bold;left:831.60px;transform:scaleX(1.1826);-webkit-text-stroke:0.45px;">32</div>
<div class="t" style="top:576.00px;font-size:16.3px;line-height:16.3px;color:#c00d1e;font-weight:bold;left:782.50px;transform:scaleX(1.0899);-webkit-text-stroke:0.45px;">координатора</div>
<div class="a" style="left:947.5px;top:521px;width:165.5999999999999px;height:110.89999999999998px;border-radius:50%;background:#2aa9e3"></div>
<div class="t" style="top:558.00px;font-size:16.3px;line-height:16.3px;color:#c00d1e;font-weight:bold;left:963.00px;transform:scaleX(1.0680);-webkit-text-stroke:0.45px;">Сетевая форма</div>
<div class="t" style="top:575.00px;font-size:16.3px;line-height:16.3px;color:#c00d1e;font-weight:bold;left:961.25px;transform:scaleX(1.0538);-webkit-text-stroke:0.45px;">сотрудничества</div>
<div class="a" style="left:1123.75px;top:523px;width:155.0px;height:102px;border-radius:50%;background:#2aa9e3"></div>
<div class="t" style="top:549.00px;font-size:15px;line-height:15px;color:#c00d1e;font-weight:bold;left:1161.25px;-webkit-text-stroke:0.45px;">ОНЛАЙН и</div>
<div class="t" style="top:563.00px;font-size:15px;line-height:15px;color:#c00d1e;font-weight:bold;left:1167.50px;transform:scaleX(0.9944);-webkit-text-stroke:0.45px;">ОФЛАЙН</div>
<div class="t" style="top:583.00px;font-size:15px;line-height:15px;color:#c00d1e;font-weight:bold;left:1155.00px;transform:scaleX(1.0792);-webkit-text-stroke:0.45px;">технологии</div>
<div class="a" style="left:291.9px;top:645px;width:578.1px;height:58.75px;background:#dee8f6;border:2px solid #4a72a6"></div>
<div class="t" style="top:647.00px;font-size:16.3px;line-height:16.3px;color:#0c2461;font-weight:bold;left:320.60px;transform:scaleX(1.1384);-webkit-text-stroke:0.45px;">ФОРМИРОВАНИЕ КОМПЕТЕНЦИЙ ППС И СОТРУДНИКОВ</div>
<div class="t" style="top:667.00px;font-size:16.3px;line-height:16.3px;color:#0c2461;font-weight:bold;left:361.90px;transform:scaleX(1.1099);-webkit-text-stroke:0.45px;">ВУЗОВ В ОБЛАСТИ ИНКЛЮЗИВНОГО ВЫСШЕГО</div>
<div class="t" style="top:687.00px;font-size:16.3px;line-height:16.3px;color:#0c2461;font-weight:bold;left:512.80px;transform:scaleX(1.0783);-webkit-text-stroke:0.45px;">ОБРАЗОВАНИЯ</div>
<div class="a" style="left:889.4px;top:646.6px;width:556.1999999999999px;height:59.64999999999998px;background:#dee8f6;border:2px solid #4a72a6"></div>
<div class="t" style="top:658.00px;font-size:16.3px;line-height:16.3px;color:#0c2461;font-weight:bold;left:951.25px;transform:scaleX(1.1408);-webkit-text-stroke:0.45px;">ТИРАЖИРОВАНИЕ  ПРАКТИК ИНКЛЮЗИВНОГО</div>
<div class="t" style="top:679.00px;font-size:16.3px;line-height:16.3px;color:#0c2461;font-weight:bold;left:939.40px;transform:scaleX(1.1221);-webkit-text-stroke:0.45px;">ОБРАЗОВАНИЯ СТУДЕНТОВ С ИНВАЛИДНОСТЬЮ</div>
<div class="a" style="left:301px;top:727px;width:282px;height:186px;background:#fbfbfb;overflow:hidden">
<div class="a" style="left:4px;top:3px;width:140px;height:3px;background:#c9c9c9"></div>
<div class="a" style="left:4px;top:11px;width:165px;height:2px;background:#b5b5b5"></div>
<div class="a" style="left:160px;top:3px;width:25px;height:3px;background:#e05050"></div>
<div class="a" style="left:12px;top:16px;width:75px;height:24px;background:#eeeeee"></div>
<div class="a" style="left:82px;top:16px;width:106px;height:24px;background:#d9cfc4"></div>
<div class="a" style="left:93px;top:21px;width:14px;height:16px;border-radius:7px;background:#7a5548"></div>
<div class="a" style="left:125px;top:21px;width:14px;height:16px;border-radius:7px;background:#8a6f5a"></div>
<div class="a" style="left:157px;top:21px;width:14px;height:16px;border-radius:7px;background:#a07a60"></div>
<div class="a" style="left:0;top:42px;width:198px;height:128px;background:#111"></div>
<div class="a" style="left:8px;top:46px;width:181px;height:118px;background:#c9d9ea"></div>
<div class="a" style="left:8px;top:46px;width:181px;height:22px;background:linear-gradient(#e8eef6,#c6d5e8)"></div>
<div class="a" style="left:10px;top:69px;width:22px;height:90px;background:#9bb9d6"></div>
<div class="a" style="left:12px;top:72px;width:18px;height:18px;background:#b9d68a"></div>
<div class="a" style="left:12px;top:94px;width:18px;height:18px;background:#b9d68a"></div>
<div class="a" style="left:12px;top:116px;width:18px;height:18px;background:#b9d68a"></div>
<div class="a" style="left:12px;top:138px;width:18px;height:18px;background:#b9d68a"></div>
<div class="a" style="left:34px;top:69px;width:155px;height:90px;background:linear-gradient(90deg,#3f70b8,#8fb0db 40%,#c2d6ee)"></div>
<div class="a" style="left:70px;top:69px;width:86px;height:80px;background:#d6e7b3;border:1px solid #9ab07a"></div>
<div class="a" style="left:78px;top:82px;width:66px;height:2.5px;background:#5a6a4a"></div>
<div class="a" style="left:76px;top:89px;width:70px;height:2.5px;background:#5a6a4a"></div>
<div class="a" style="left:84px;top:96px;width:56px;height:2.5px;background:#5a6a4a"></div>
<div class="a" style="left:88px;top:103px;width:46px;height:2.5px;background:#5a6a4a"></div>
<div class="a" style="left:72px;top:116px;width:24px;height:30px;background:#000"></div>
<div class="a" style="left:78px;top:123px;width:13px;height:17px;background:#fff;transform:skewX(-10deg)"></div>
<div class="a" style="left:146px;top:62px;width:42px;height:38px;background:#bdbdbd"></div>
<div class="a" style="left:142px;top:146px;width:41px;height:11px;background:#bdbdbd"></div>
<div class="a" style="left:34px;top:158px;width:155px;height:7px;background:#f0f0f0"></div>
<div class="a" style="left:202px;top:12px;width:22px;height:2px;background:#999"></div>
<div class="a" style="left:206px;top:22px;width:68px;height:6px;border:1px solid #ddd;border-radius:3px"></div>
<div class="a" style="left:208px;top:39px;width:55px;height:2px;background:#aaa"></div>
<div class="a" style="left:208px;top:51px;width:55px;height:2px;background:#aaa"></div>
<div class="a" style="left:205px;top:60px;width:28px;height:6px;background:#e6e6e6;border-radius:3px"></div>
<div class="a" style="left:237px;top:60px;width:28px;height:6px;background:#e6e6e6;border-radius:3px"></div>
<div class="a" style="left:203px;top:70px;width:78px;height:1px;background:#ddd"></div>
<div class="a" style="left:208px;top:82px;width:60px;height:1.5px;background:#ccc"></div>
<div class="a" style="left:208px;top:92px;width:65px;height:1.5px;background:#ccc"></div>
<div class="a" style="left:208px;top:102px;width:55px;height:1.5px;background:#ccc"></div>
<div class="a" style="left:208px;top:112px;width:62px;height:1.5px;background:#ccc"></div>
<div class="a" style="left:208px;top:122px;width:50px;height:1.5px;background:#ccc"></div>
<div class="a" style="left:205px;top:143px;width:76px;height:6px;border:1px solid #ddd"></div>
<div class="a" style="left:30px;top:174px;width:150px;height:8px;background:#f0f0f0;border-radius:4px"></div>
<div class="a" style="left:224px;top:173px;width:10px;height:10px;border-radius:50%;background:#e8412c"></div>
<div class="a" style="left:245px;top:176px;width:30px;height:4px;background:#e0e0e0"></div>
</div>
<div class="a" style="left:592px;top:725px;width:292px;height:187px;background:#fbfbfb;overflow:hidden">
<div class="a" style="left:4px;top:3px;width:150px;height:3px;background:#c9c9c9"></div>
<div class="a" style="left:4px;top:11px;width:170px;height:2px;background:#b5b5b5"></div>
<div class="a" style="left:176px;top:3px;width:30px;height:3px;background:#e05050"></div>
<div class="a" style="left:10px;top:16px;width:55px;height:24px;background:#e8e8e8"></div>
<div class="a" style="left:65px;top:16px;width:24px;height:24px;background:#dde8f0;border:1px solid #5bb2e0"></div>
<div class="a" style="left:90px;top:16px;width:105px;height:24px;background:#cfc2b8"></div>
<div class="a" style="left:113px;top:21px;width:14px;height:16px;border-radius:7px;background:#8a6b5e"></div>
<div class="a" style="left:145px;top:21px;width:14px;height:16px;border-radius:7px;background:#7a5850"></div>
<div class="a" style="left:177px;top:21px;width:14px;height:16px;border-radius:7px;background:#6e5048"></div>
<div class="a" style="left:0;top:41px;width:206px;height:130px;background:#2a2a2a"></div>
<div class="a" style="left:14px;top:51px;width:105px;height:92px;background:#fff"></div>
<div class="a" style="left:14px;top:51px;width:105px;height:10px;background:#e9e4e4"></div>
<div class="a" style="left:16px;top:62px;width:12px;height:78px;background:#eee"></div>
<div class="a" style="left:17px;top:64px;width:10px;height:8px;background:#cf5060"></div>
<div class="a" style="left:17px;top:76px;width:10px;height:8px;background:#5078c0"></div>
<div class="a" style="left:17px;top:88px;width:10px;height:8px;background:#cf6060"></div>
<div class="a" style="left:17px;top:100px;width:10px;height:8px;background:#cf6060"></div>
<div class="a" style="left:34px;top:63px;width:80px;height:78px;background:#fff;border-left:2px solid #e2a020"></div>
<div class="a" style="left:36px;top:64px;width:78px;height:10px;background:#d6335c"></div>
<div class="a" style="left:40px;top:80px;width:30px;height:2px;background:#888"></div>
<div class="a" style="left:40px;top:86px;width:30px;height:2px;background:#888"></div>
<div class="a" style="left:40px;top:92px;width:30px;height:2px;background:#888"></div>
<div class="a" style="left:76px;top:78px;width:32px;height:26px;background:#a08070"></div>
<div class="a" style="left:40px;top:107px;width:32px;height:30px;background:#b7a4a0"></div>
<div class="a" style="left:76px;top:107px;width:34px;height:32px;background:#9a8a80"></div>
<div class="a" style="left:44px;top:110px;width:10px;height:12px;background:#d23a3a"></div>
<div class="a" style="left:210px;top:20px;width:22px;height:2px;background:#999"></div>
<div class="a" style="left:212px;top:27px;width:70px;height:6px;border:1px solid #ddd;border-radius:3px"></div>
<div class="a" style="left:212px;top:40px;width:50px;height:6px;background:#eee"></div>
<div class="a" style="left:212px;top:56px;width:60px;height:8px;background:#eee"></div>
<div class="a" style="left:212px;top:70px;width:32px;height:7px;background:#e6e6e6;border-radius:3px"></div>
<div class="a" style="left:248px;top:70px;width:32px;height:7px;background:#e6e6e6;border-radius:3px"></div>
<div class="a" style="left:210px;top:92px;width:20px;height:2px;background:#999"></div>
<div class="a" style="left:210px;top:100px;width:62px;height:1.5px;background:#aaa"></div>
<div class="a" style="left:210px;top:108px;width:76px;height:1.5px;background:#bbb"></div>
<div class="a" style="left:210px;top:114px;width:76px;height:1.5px;background:#bbb"></div>
<div class="a" style="left:210px;top:120px;width:76px;height:1.5px;background:#bbb"></div>
<div class="a" style="left:210px;top:126px;width:76px;height:1.5px;background:#bbb"></div>
<div class="a" style="left:210px;top:132px;width:76px;height:1.5px;background:#bbb"></div>
<div class="a" style="left:210px;top:138px;width:60px;height:1.5px;background:#bbb"></div>
<div class="a" style="left:210px;top:160px;width:50px;height:1.5px;background:#ccc"></div>
<div class="a" style="left:30px;top:174px;width:170px;height:8px;background:#f0f0f0;border-radius:4px"></div>
<div class="a" style="left:231px;top:174px;width:10px;height:10px;border-radius:50%;background:#e8412c"></div>
<div class="a" style="left:255px;top:176px;width:30px;height:4px;background:#e0e0e0"></div>
</div>
<div class="a" style="left:891px;top:724px;width:266px;height:186px;background:repeating-linear-gradient(45deg,#e9dc8a 0 2px,#f2eab0 2px 4px);overflow:hidden">
<div class="a" style="left:9px;top:9px;width:248px;height:168px;background:linear-gradient(135deg,#f8f3d0,#fbf9e8 50%,#eef3e0);border:1px solid #e2d690;box-shadow:0 0 6px 3px #f4eebc"></div>
<div class="a" style="left:128px;top:12px;width:1px;height:160px;background:#efe8c0"></div>
<div class="a" style="left:35px;top:25px;width:60px;height:2px;background:#6b6b5a"></div>
<div class="a" style="left:22px;top:38px;width:86px;height:1.5px;background:#9a9a8a"></div>
<div class="a" style="left:22px;top:42px;width:86px;height:1.5px;background:#9a9a8a"></div>
<div class="a" style="left:22px;top:46px;width:86px;height:1.5px;background:#9a9a8a"></div>
<div class="a" style="left:22px;top:50px;width:86px;height:1.5px;background:#9a9a8a"></div>
<div class="a" style="left:34px;top:66px;width:64px;height:4px;background:#6a6a60"></div>
<div class="a" style="left:32px;top:76px;width:66px;height:1.5px;background:#a8a898"></div>
<div class="a" style="left:40px;top:85px;width:50px;height:2px;background:#c25a5a"></div>
<div class="a" style="left:40px;top:103px;width:46px;height:1.5px;background:#b4b4a4"></div>
<div class="a" style="left:50px;top:128px;width:30px;height:1.5px;background:#b4b4a4"></div>
<div class="a" style="left:50px;top:134px;width:30px;height:1.5px;background:#b0b0a0"></div>
<div class="a" style="left:56px;top:142px;width:18px;height:1.5px;background:#b4b4a4"></div>
<div class="a" style="left:56px;top:149px;width:22px;height:1.5px;background:#b4b4a4"></div>
<div class="a" style="left:56px;top:155px;width:22px;height:1.5px;background:#b0b0a0"></div>
<div class="a" style="left:150px;top:14px;width:90px;height:1.5px;background:#b4b4a4"></div>
<div class="a" style="left:162px;top:20px;width:66px;height:1.5px;background:#9a9a8a"></div>
<div class="a" style="left:160px;top:28px;width:70px;height:1.5px;background:#b0b0a0"></div>
<div class="a" style="left:165px;top:37px;width:60px;height:1.5px;background:#bcbcac"></div>
<div class="a" style="left:145px;top:47px;width:100px;height:1.5px;background:#a8a898"></div>
<div class="a" style="left:160px;top:51px;width:70px;height:1.5px;background:#a8a898"></div>
<div class="a" style="left:160px;top:62px;width:75px;height:1.5px;background:#9a9a8a"></div>
<div class="a" style="left:165px;top:67px;width:65px;height:1.5px;background:#a8a898"></div>
<div class="a" style="left:160px;top:77px;width:70px;height:1.5px;background:#bcbcac"></div>
<div class="a" style="left:150px;top:85px;width:90px;height:1.5px;background:#9a9a8a"></div>
<div class="a" style="left:155px;top:91px;width:80px;height:1.5px;background:#a8a898"></div>
<div class="a" style="left:180px;top:118px;width:22px;height:1.5px;background:#b4b4a4"></div>
<div class="a" style="left:180px;top:124px;width:26px;height:1.5px;background:#a8a898"></div>
<div class="a" style="left:130px;top:123px;width:38px;height:38px;border-radius:50%;border:2px solid #7fb6a8;background:radial-gradient(#d6ead8,#bcdccf)"></div>
<div class="a" style="left:180px;top:150px;width:30px;height:12px;border-bottom:2px solid #333;transform:skewX(-40deg)"></div>
<div class="a" style="left:212px;top:146px;width:22px;height:1.5px;background:#b4b4a4"></div>
<div class="a" style="left:212px;top:154px;width:22px;height:1.5px;background:#b4b4a4"></div>
</div>
<div class="a" style="left:1169px;top:733px;width:239px;height:177px;background:#b08048;overflow:hidden">
<div class="a" style="left:0;top:0;width:135px;height:9px;background:linear-gradient(90deg,#4a4a48,#6a6e70 40%,#3e4244)"></div>
<div class="a" style="left:0;top:9px;width:135px;height:36px;background:repeating-linear-gradient(180deg,#b9893f 0 10px,#a27434 10px 12px)"></div>
<div class="a" style="left:0;top:36px;width:30px;height:40px;background:#d8d2c6"></div>
<div class="a" style="left:30px;top:42px;width:120px;height:32px;background:#dcd6ca"></div>
<div class="a" style="left:32px;top:42px;width:24px;height:20px;background:#8a6a48"></div>
<div class="a" style="left:59px;top:44px;width:21px;height:30px;background:#b08a60"></div>
<div class="a" style="left:91px;top:44px;width:21px;height:24px;background:#b08a60"></div>
<div class="a" style="left:128px;top:0;width:111px;height:70px;background:linear-gradient(200deg,#f4f6f8 0%,#dfe6ea 50%,#cfd6d8 100%)"></div>
<div class="a" style="left:128px;top:0;width:46px;height:42px;background:#a8804a;clip-path:polygon(0 0,100% 0,10% 100%,0 100%)"></div>
<div class="a" style="left:180px;top:12px;width:59px;height:78px;background:#5e3e2a;clip-path:polygon(0 22%,100% 0,100% 100%,0 72%)"></div>
<div class="a" style="left:186px;top:20px;width:50px;height:56px;background:repeating-linear-gradient(90deg,transparent 0 1px,#5e3e2a 1px 2px,transparent 2px 8px),linear-gradient(180deg,#c8c4c8 0 44%,#5e3e2a 44% 52%,#d0ccd0 52% 100%);clip-path:polygon(0 25%,100% 0,100% 100%,0 80%)"></div><div class="a" style="left:190px;top:28px;width:44px;height:44px;background:repeating-linear-gradient(90deg,rgba(120,60,60,.35) 0 3px,rgba(60,80,140,.3) 3px 7px);clip-path:polygon(0 20%,100% 0,100% 100%,0 80%)"></div>
<div class="a" style="left:0;top:62px;width:180px;height:45px;background:#c8b8a0"></div>
<div class="a" style="left:170px;top:70px;width:69px;height:107px;background:linear-gradient(180deg,#b07a44,#9a6838);clip-path:polygon(0 0,100% 25%,100% 100%,0 100%)"></div>
<div class="a" style="left:0;top:62px;width:18px;height:60px;background:#e0dcd6"></div>
<div class="a" style="left:4px;top:72px;width:14px;height:50px;background:#6e6a6e"></div>
<div class="a" style="left:16px;top:78px;width:50px;height:12px;background:#9a7a5a"></div>
<div class="a" style="left:64px;top:70px;width:18px;height:22px;border-radius:8px 8px 0 0;background:#6a2a3a"></div>
<div class="a" style="left:86px;top:66px;width:16px;height:24px;border-radius:8px 8px 0 0;background:#d8383a"></div>
<div class="a" style="left:104px;top:68px;width:18px;height:24px;border-radius:8px 8px 0 0;background:#f0e8e0"></div>
<div class="a" style="left:124px;top:66px;width:18px;height:26px;border-radius:8px 8px 0 0;background:#4a3a3a"></div>
<div class="a" style="left:146px;top:62px;width:22px;height:30px;border-radius:10px 10px 0 0;background:#7a7a80"></div>
<div class="a" style="left:66px;top:60px;width:10px;height:10px;border-radius:5px;background:#c8a090"></div>
<div class="a" style="left:90px;top:57px;width:10px;height:10px;border-radius:5px;background:#e0b0a0"></div>
<div class="a" style="left:108px;top:58px;width:10px;height:10px;border-radius:5px;background:#d8b098"></div>
<div class="a" style="left:150px;top:54px;width:12px;height:11px;border-radius:6px;background:#c8a090"></div>
<div class="a" style="left:126px;top:76px;width:24px;height:30px;border-radius:10px 10px 0 0;background:#4a3a30"></div>
<div class="a" style="left:128px;top:82px;width:20px;height:22px;border-radius:10px;background:#d8a890"></div>
<div class="a" style="left:62px;top:92px;width:110px;height:20px;background:#b07a48"></div>
<div class="a" style="left:20px;top:100px;width:40px;height:4px;background:#a07040"></div>
<div class="a" style="left:18px;top:80px;width:42px;height:70px;border-radius:18px 18px 0 0;background:#3a2a28"></div>
<div class="a" style="left:26px;top:88px;width:24px;height:30px;border-radius:12px;background:#e2b098"></div>
<div class="a" style="left:20px;top:108px;width:48px;height:42px;border-radius:14px 14px 0 0;background:#3a9ccc"></div>
<div class="a" style="left:80px;top:86px;width:42px;height:64px;border-radius:18px 18px 0 0;background:#a88860"></div>
<div class="a" style="left:89px;top:92px;width:24px;height:30px;border-radius:12px;background:#e6b8a0"></div>
<div class="a" style="left:80px;top:110px;width:48px;height:40px;border-radius:14px 14px 0 0;background:#3c3048"></div>
<div class="a" style="left:136px;top:82px;width:44px;height:52px;border-radius:20px 20px 0 0;background:#c8b088"></div>
<div class="a" style="left:146px;top:90px;width:26px;height:32px;border-radius:13px;background:#ecc4ac"></div>
<div class="a" style="left:130px;top:108px;width:60px;height:48px;border-radius:20px 20px 0 0;background:#f4f2ee"></div>
<div class="a" style="left:0;top:142px;width:239px;height:35px;background:linear-gradient(180deg,#c08050,#a86a40)"></div>
<div class="a" style="left:22px;top:151px;width:14px;height:9px;background:#1e1e22;transform:rotate(-18deg)"></div>
<div class="a" style="left:107px;top:150px;width:12px;height:10px;background:#1e1e22;transform:rotate(10deg)"></div>
<div class="a" style="left:83px;top:148px;width:18px;height:10px;background:#f8f8f4;transform:rotate(-12deg)"></div>
<div class="a" style="left:135px;top:150px;width:44px;height:20px;background:#f4f2ee;transform:rotate(4deg)"></div>
<div class="a" style="left:186px;top:150px;width:14px;height:8px;background:#c83848;transform:rotate(18deg)"></div>
<div class="a" style="left:212px;top:138px;width:30px;height:40px;border-radius:16px 0 0 0;background:#1e1e20"></div>
</div>
<div class="a" style="left:288px;top:915px;width:1162px;height:35px;background:#2e74b8"></div>
<div class="t" style="top:923.00px;font-size:21px;line-height:21px;color:#fff;font-weight:bold;left:770.00px;transform:scaleX(0.9311);">РУМЦ МГППУ,  2022 г.</div>
</div>
<div class="a" style="left:1170px;top:121px;width:186px;height:25px;background:rgba(60,60,60,.8)"></div>
<div class="t" id="t108" style="top:127.00px;font-size:15px;line-height:15px;color:#f2f2f2;left:1175.70px;transform:scaleX(1.0039);">Режиссёр (StreamCaster)</div>
<div class="a" style="left:21px;top:299px;width:177px;height:100px;background:#fff;border:1px solid #d0d0d0;overflow:hidden"></div>
<div class="a" style="left:24px;top:301px;width:4px;height:7px;background:#1b63b3"></div>
<div class="a" style="left:28px;top:301px;width:4px;height:7px;background:linear-gradient(#e8173a 0 30%,#9c4d9d 30% 55%,#86c340 55% 80%,#f8a91c 80%)"></div>
<div class="a" style="left:33px;top:302px;width:10px;height:4px;background:repeating-linear-gradient(#b8cfe6 0 1px,transparent 1px 2px)"></div>
<div class="a" style="left:189px;top:301px;width:6px;height:8px;border:1px solid #aaa;background:#fff"></div>
<div class="a" style="left:24px;top:311px;width:171px;height:1px;background:#3a9ad8"></div>
<div class="t" id="t109" style="top:352.00px;font-size:6.5px;line-height:6.5px;color:#1a2a5a;font-weight:bold;left:35.00px;transform:scaleX(1.1519);-webkit-text-stroke:0.2px">Система поддержки развития инклюзии</div>
<div class="t" id="t110" style="top:360.00px;font-size:6.5px;line-height:6.5px;color:#1a2a5a;font-weight:bold;left:67.50px;transform:scaleX(1.1490);-webkit-text-stroke:0.2px">в педагогических вузах</div>
<div class="a" style="left:22px;top:394px;width:175px;height:5px;background:#2e74b8"></div>
<div class="t" id="t111" style="top:299.00px;font-size:11.5px;line-height:11.5px;color:#555;left:8.59px;">1</div>
<div class="a" style="left:21px;top:414px;width:177px;height:100px;background:#fff;border:1px solid #d0d0d0;overflow:hidden"></div>
<div class="a" style="left:24px;top:416px;width:4px;height:7px;background:#1b63b3"></div>
<div class="a" style="left:28px;top:416px;width:4px;height:7px;background:linear-gradient(#e8173a 0 30%,#9c4d9d 30% 55%,#86c340 55% 80%,#f8a91c 80%)"></div>
<div class="a" style="left:33px;top:417px;width:10px;height:4px;background:repeating-linear-gradient(#b8cfe6 0 1px,transparent 1px 2px)"></div>
<div class="a" style="left:189px;top:416px;width:6px;height:8px;border:1px solid #aaa;background:#fff"></div>
<div class="a" style="left:24px;top:426px;width:171px;height:1px;background:#3a9ad8"></div>
<div class="t" id="t112" style="top:438.00px;font-size:6px;line-height:6px;color:#1a2a5a;font-weight:bold;left:35.90px;transform:scaleX(1.2500);-webkit-text-stroke:0.25px">Межведомственный комплексный план</div>
<div class="t" id="t113" style="top:446.00px;font-size:6px;line-height:6px;color:#1a2a5a;font-weight:bold;left:31.80px;transform:scaleX(1.2233);-webkit-text-stroke:0.25px">мероприятий по повышению доступности</div>
<div class="t" id="t114" style="top:453.00px;font-size:6px;line-height:6px;color:#1a2a5a;font-weight:bold;left:34.40px;transform:scaleX(1.2182);-webkit-text-stroke:0.25px">среднего профессионального и высшего</div>
<div class="t" id="t115" style="top:460.00px;font-size:6px;line-height:6px;color:#1a2a5a;font-weight:bold;left:42.50px;transform:scaleX(1.2397);-webkit-text-stroke:0.25px">образования для инвалидов и лиц с</div>
<div class="t" id="t116" style="top:467.00px;font-size:6px;line-height:6px;color:#1a2a5a;font-weight:bold;left:26.70px;transform:scaleX(1.2380);-webkit-text-stroke:0.25px">ограниченными возможностями здоровья, в</div>
<div class="t" id="t117" style="top:473.00px;font-size:6px;line-height:6px;color:#1a2a5a;font-weight:bold;left:36.40px;transform:scaleX(1.2212);-webkit-text-stroke:0.25px">том числе профориентации и занятости</div>
<div class="t" id="t118" style="top:481.00px;font-size:6px;line-height:6px;color:#1a2a5a;font-weight:bold;left:54.70px;transform:scaleX(1.2901);-webkit-text-stroke:0.25px">указанных лиц  (21.12.2021  г.)</div>
<div class="a" style="left:22px;top:509px;width:175px;height:5px;background:#2e74b8"></div>
<div class="t" id="t119" style="top:413.00px;font-size:11.5px;line-height:11.5px;color:#555;left:8.59px;">2</div>
<div class="a" style="left:21px;top:530px;width:177px;height:100px;background:#fff;border:1px solid #d0d0d0;overflow:hidden"></div>
<div class="a" style="left:24px;top:532px;width:4px;height:7px;background:#1b63b3"></div>
<div class="a" style="left:28px;top:532px;width:4px;height:7px;background:linear-gradient(#e8173a 0 30%,#9c4d9d 30% 55%,#86c340 55% 80%,#f8a91c 80%)"></div>
<div class="a" style="left:33px;top:533px;width:10px;height:4px;background:repeating-linear-gradient(#b8cfe6 0 1px,transparent 1px 2px)"></div>
<div class="a" style="left:189px;top:532px;width:6px;height:8px;border:1px solid #aaa;background:#fff"></div>
<div class="a" style="left:24px;top:542px;width:171px;height:1px;background:#3a9ad8"></div>
<div class="t" id="t120" style="top:534.00px;font-size:4.6px;line-height:4.6px;color:#1a2a5a;font-weight:bold;left:65.00px;transform:scaleX(0.8744);">Система взаимодействия с педагогическими</div>
<div class="t" id="t121" style="top:538.00px;font-size:4.6px;line-height:4.6px;color:#1a2a5a;font-weight:bold;left:88.50px;transform:scaleX(0.9047);">вузами - партнерами</div>
<div class="a" style="left:56px;top:543px;width:14px;height:10px;background:#5aa83c;clip-path:polygon(50% 0,100% 30%,100% 100%,0 100%,0 30%)"></div>
<div class="t" id="t122" style="top:545.00px;font-size:4.3px;line-height:4.3px;color:#5aa83c;font-weight:bold;left:72.00px;transform:scaleX(0.9504);">22 педагогических вуза Министерства просвещения</div>
<div class="t" id="t123" style="top:549.00px;font-size:4.3px;line-height:4.3px;color:#5aa83c;font-weight:bold;left:119.00px;transform:scaleX(0.9096);">России</div>
<div class="a" style="left:24px;top:551px;width:6px;height:4px;background:#888;border-radius:2px"></div><div class="a" style="left:31px;top:554px;width:46px;height:2px;background:#555"></div>
<div class="a" style="left:101px;top:557px;width:9px;height:5px;background:#888;border-radius:2px"></div><div class="a" style="left:111px;top:558px;width:25px;height:2.5px;background:#555"></div>
<div class="a" style="left:26px;top:561px;width:25px;height:28px;background:repeating-linear-gradient(#ececec 0 1px,#fff 1px 3px)"></div>
<div class="a" style="left:67px;top:561px;width:21px;height:28px;background:repeating-linear-gradient(#ececec 0 1px,#fff 1px 3px)"></div>
<div class="a" style="left:94px;top:561px;width:33px;height:28px;background:repeating-linear-gradient(#ececec 0 1px,#fff 1px 3px)"></div>
<div class="a" style="left:132px;top:561px;width:28px;height:28px;background:repeating-linear-gradient(#ececec 0 1px,#fff 1px 3px)"></div>
<div class="a" style="left:168px;top:561px;width:22px;height:28px;background:repeating-linear-gradient(#ececec 0 1px,#fff 1px 3px)"></div>
<div class="a" style="left:22px;top:591px;width:175px;height:34px;background:linear-gradient(90deg,#c89a3a 0 23%,#3a4a8a 23% 42%,#e0c050 42% 48%,#e8e6e0 48% 80%,#8a7a6a 80%)"></div>
<div class="a" style="left:84px;top:591px;width:36px;height:6px;background:#d8c890"></div>
<div class="a" style="left:55px;top:605px;width:12px;height:13px;background:#4a4a4a"></div>
<div class="a" style="left:57px;top:604px;width:9px;height:12px;background:#6ab06a;border-radius:4px"></div>
<div class="a" style="left:60px;top:614px;width:24px;height:11px;background:#c08a4a"></div>
<div class="a" style="left:84px;top:610px;width:26px;height:12px;background:#dcdcdc"></div>
<div class="a" style="left:120px;top:617px;width:60px;height:8px;background:#b07a4a"></div>
<div class="a" style="left:131px;top:607px;width:10px;height:10px;background:#333;border-radius:5px"></div>
<div class="a" style="left:146px;top:607px;width:10px;height:10px;background:#9acb8a;border-radius:5px"></div>
<div class="a" style="left:162px;top:607px;width:10px;height:10px;background:#333;border-radius:5px"></div>
<div class="a" style="left:180px;top:596px;width:12px;height:28px;background:#2a2a3a"></div>
<div class="a" style="left:22px;top:625px;width:175px;height:5px;background:#2e74b8"></div>
<div class="t" id="t124" style="top:529.00px;font-size:11.5px;line-height:11.5px;color:#555;left:8.59px;">3</div>
<div class="a" style="left:18px;top:643px;width:183px;height:106px;border:3px solid #e0623e;background:#fff"></div>
<div class="a" style="left:0;top:0;width:1920px;height:1080px;transform-origin:0 0;transform:translate(-21.373px,601.271px) scale(0.15060)">
<div class="a" style="left:288px;top:297px;width:1162px;height:653px;background:#fff;box-shadow:0 0 0 1px #d4d4d6"></div>
<svg style="left:289px;top:300px" width="52" height="60">
<path d="M1 1H24Q25 1 25 3V57L17 47H6Q1 47 1 42Z" fill="#1b63b3"/>
<path d="M25 4Q25 1 28 1H51V42Q51 47 46 47H33L25 57Z" fill="#f5c67a"/>
<rect x="25" y="1" width="13" height="12" fill="#e8173a"/><rect x="38" y="1" width="13" height="12" fill="#a32135"/>
<rect x="25" y="13" width="13" height="12" fill="#ee5c8a"/><rect x="38" y="13" width="13" height="12" fill="#9c4d9d"/>
<rect x="25" y="25" width="13" height="13" fill="#86c340"/><rect x="38" y="25" width="13" height="13" fill="#4ea94a"/>
<path d="M38 38H51V42Q51 47 46 47H38Z" fill="#f8a91c"/>
<path d="M6 5H9V17Q9 19 7.5 19Q6 18 6 16ZM11.5 5H14.5V25Q13 25 12 23Q11.5 22 11.5 20ZM17 5H20V16Q20 18 18.5 19Q17 19 17 17Z" fill="#fff"/>
</svg>
<div class="t" style="top:302.00px;font-size:7.8px;line-height:7.8px;color:#3a70b0;font-weight:bold;left:346.00px;transform:scaleX(0.8847);-webkit-text-stroke:0.35px">МОСКОВСКИЙ</div>
<div class="t" style="top:310.00px;font-size:7.8px;line-height:7.8px;color:#3a70b0;font-weight:bold;left:346.00px;transform:scaleX(0.8770);-webkit-text-stroke:0.35px">ГОСУДАРСТВЕННЫЙ</div>
<div class="t" style="top:318.00px;font-size:7.8px;line-height:7.8px;color:#3a70b0;font-weight:bold;left:346.00px;transform:scaleX(0.8615);-webkit-text-stroke:0.35px">ПСИХОЛОГО-</div>
<div class="t" style="top:326.00px;font-size:7.8px;line-height:7.8px;color:#3a70b0;font-weight:bold;left:346.00px;transform:scaleX(0.8839);-webkit-text-stroke:0.35px">ПЕДАГОГИЧЕСКИЙ</div>
<div class="t" style="top:334.00px;font-size:7.8px;line-height:7.8px;color:#3a70b0;font-weight:bold;left:346.00px;transform:scaleX(0.8723);-webkit-text-stroke:0.35px">УНИВЕРСИТЕТ</div>
<div class="t" style="top:302.00px;font-size:26px;line-height:26px;color:#0c2461;font-weight:bold;left:439.20px;transform:scaleX(1.0485);-webkit-text-stroke:0.45px;">Ключевые направления сотрудничества с педагогическими вузами-</div>
<div class="t" style="top:329.00px;font-size:26px;line-height:26px;color:#0c2461;font-weight:bold;left:823.90px;transform:scaleX(1.0307);-webkit-text-stroke:0.45px;">партнерами</div>
<svg style="left:0;top:0" width="1" height="1"><path d="M293 362.8L1429 359.4" stroke="#2593d6" stroke-width="3.2"/></svg>
<svg style="left:1389px;top:299px" width="50" height="62">
<path d="M1.5 1.5H16L24 7.5L32 1.5H47.5V47Q47.5 54 40 54H32L24 59.5L16 54H8Q1.5 54 1.5 47Z" fill="#fff" stroke="#4c5258" stroke-width="1.2"/>
<g fill="none" stroke-linecap="round" stroke-linejoin="round">
<g stroke="#5cb04a" stroke-width="1.8"><path d="M17 26L16 31.5L21 33L22.5 38"/><path d="M17 27L22 21.5"/></g>
<circle cx="14.7" cy="35" r="4.8" stroke="#5cb04a" stroke-width="1.1"/>
<g stroke="#e53b2c" stroke-width="2.3"><path d="M19.5 16.5L24 22L29.5 15.5"/><path d="M24 21V30L21.5 39M24 30L26.5 39"/></g>
<g stroke="#2c9ad8" stroke-width="2.3"><path d="M30 16.5L33.5 23.5L38 31"/><path d="M33.5 23L35 30.5L33.5 39M35 30.5L37.5 39"/></g>
</g>
<circle cx="16.3" cy="22.5" r="1.7" fill="#5cb04a"/><circle cx="24.4" cy="18" r="1.9" fill="#e53b2c"/><circle cx="33.7" cy="19.5" r="1.9" fill="#2c9ad8"/>
</svg>
<div class="t" style="top:306.00px;font-size:10px;line-height:10px;color:#2344a4;font-weight:bold;left:1397.80px;transform:scaleX(1.0983);-webkit-text-stroke:0.45px;">РУМЦ</div>
<div class="t" style="left:1394px;top:339.5px;font:italic bold 13px/13px 'Liberation Sans';letter-spacing:-0.2px;-webkit-text-stroke:0.3px;transform:scaleX(0.82)"><span style="color:#d43a9a">М</span><span style="color:#f0542a">Г</span><span style="color:#e8c21a">П</span><span style="color:#4cb848">П</span><span style="color:#7a3ab0">У</span></div>
<div class="a" style="left:291.5px;top:372px;width:515.5px;height:58.5px;background:#dee8f6;border:2px solid #4a72a6"></div>
<div class="t" style="top:374.00px;font-size:16.3px;line-height:16.3px;color:#0c2461;font-weight:bold;left:371.70px;transform:scaleX(1.1205);-webkit-text-stroke:0.45px;">КОНСАЛТИНГОВОЕ СОПРОВОЖДЕНИЕ</div>
<div class="t" style="top:394.00px;font-size:16.3px;line-height:16.3px;color:#0c2461;font-weight:bold;left:300.70px;transform:scaleX(1.1017);-webkit-text-stroke:0.45px;">ПЕДАГОГИЧЕСКИХ ВУЗОВ-ПАРТНЕРОВ ПО ВОПРОСАМ</div>
<div class="t" style="top:414.00px;font-size:16.3px;line-height:16.3px;color:#0c2461;font-weight:bold;left:530.60px;transform:scaleX(1.0555);-webkit-text-stroke:0.45px;">ИВО</div>
<div class="a" style="left:815.5px;top:372px;width:311.5px;height:58.5px;background:#dee8f6;border:2px solid #4a72a6"></div>
<div class="t" style="top:384.00px;font-size:16.3px;line-height:16.3px;color:#0c2461;font-weight:bold;left:842.50px;transform:scaleX(1.1091);-webkit-text-stroke:0.45px;">РАЗВИТИЕ ИНКЛЮЗИВНОГО</div>
<div class="t" style="top:404.00px;font-size:16.3px;line-height:16.3px;color:#0c2461;font-weight:bold;left:898.00px;transform:scaleX(1.0912);-webkit-text-stroke:0.45px;">ВОЛОНТЕРСТВА</div>
<div class="a" style="left:1132.5px;top:371.5px;width:312.5px;height:58.0px;background:#dee8f6;border:2px solid #4a72a6"></div>
<div class="t" style="top:373.00px;font-size:16.3px;line-height:16.3px;color:#0c2461;font-weight:bold;left:1178.75px;transform:scaleX(1.1138);-webkit-text-stroke:0.45px;">УЧАСТИЕ В КОНКУРСАХ</div>
<div class="t" style="top:393.00px;font-size:16.3px;line-height:16.3px;color:#0c2461;font-weight:bold;left:1224.70px;transform:scaleX(1.1133);-webkit-text-stroke:0.45px;">СТУДЕНТОВ С</div>
<div class="t" style="top:413.00px;font-size:16.3px;line-height:16.3px;color:#0c2461;font-weight:bold;left:1199.70px;transform:scaleX(1.1467);-webkit-text-stroke:0.45px;">ИНВАЛИДНОСТЬЮ</div>
<div class="a" style="left:312.8px;top:444.7px;width:376.59999999999997px;height:66.55000000000001px;background:#dee8f6;border:2px solid #4a72a6"></div>
<div class="t" style="top:460.00px;font-size:16.3px;line-height:16.3px;color:#0c2461;font-weight:bold;left:330.00px;transform:scaleX(1.1684);-webkit-text-stroke:0.45px;">Вебинары с координаторами вузов-</div>
<svg style="left:330px;top:475px" width="100" height="4"><path d="M0 2Q1.5 0 3 2T6 2T9 2T12 2T15 2T18 2T21 2T24 2T27 2T30 2T33 2T36 2T39 2T42 2T45 2T48 2T51 2T54 2T57 2T60 2T63 2T66 2T69 2T72 2T75 2T78 2T81 2T84 2T87 2T90 2T93 2" fill="none" stroke="#e02020" stroke-width="0.8"/></svg>
<div class="t" style="top:481.00px;font-size:16.3px;line-height:16.3px;color:#0c2461;font-weight:bold;left:320.60px;transform:scaleX(1.1539);-webkit-text-stroke:0.45px;">партнеров по вопросам развития ИВО</div>
<div class="a" style="left:705px;top:447.2px;width:376px;height:61.55000000000001px;background:#dee8f6;border:2px solid #4a72a6"></div>
<div class="t" style="top:450.00px;font-size:16.3px;line-height:16.3px;color:#0c2461;font-weight:bold;left:730.60px;transform:scaleX(1.1663);-webkit-text-stroke:0.45px;">Совместные решения конкретных</div>
<div class="t" style="top:470.00px;font-size:16.3px;line-height:16.3px;color:#0c2461;font-weight:bold;left:738.40px;transform:scaleX(1.1565);-webkit-text-stroke:0.45px;">кейсов по обучению студентов с</div>
<div class="t" style="top:490.00px;font-size:16.3px;line-height:16.3px;color:#0c2461;font-weight:bold;left:818.00px;transform:scaleX(1.1510);-webkit-text-stroke:0.45px;">инвалидностью</div>
<div class="a" style="left:1107.5px;top:445.3px;width:305.5px;height:63.44999999999999px;background:#dee8f6;border:2px solid #4a72a6"></div>
<div class="t" style="top:452.00px;font-size:15.5px;line-height:15.5px;color:#0c2461;font-weight:bold;left:1111.00px;transform:scaleX(1.0324);-webkit-text-stroke:0.45px;">«ТОЧКИ КИПЕНИЯ» ИНКЛЮЗИВНОГО</div>
<div class="t" style="top:469.00px;font-size:15.5px;line-height:15.5px;color:#0c2461;font-weight:bold;left:1145.00px;transform:scaleX(0.9807);-webkit-text-stroke:0.45px;">ВЫСШЕГО ОБРАЗОВАНИЯ НА</div>
<div class="t" style="top:486.00px;font-size:15.5px;line-height:15.5px;color:#0c2461;font-weight:bold;left:1128.75px;-webkit-text-stroke:0.45px;">ПЛОЩАДКАХ ВУЗОВ-ПАРТНЕРОВ</div>
<div class="a" style="left:411.25px;top:530.3px;width:142.75px;height:99.10000000000002px;border-radius:50%;background:#2aa9e3"></div>
<div class="t" style="top:552.00px;font-size:19px;line-height:19px;color:#c00d1e;font-weight:bold;left:476.00px;transform:scaleX(1.1155);-webkit-text-stroke:0.45px;">8</div>
<div class="t" style="top:574.00px;font-size:16.3px;line-height:16.3px;color:#c00d1e;font-weight:bold;left:425.30px;transform:scaleX(1.0822);-webkit-text-stroke:0.45px;">Федеральны</div>
<div class="t" style="top:590.00px;font-size:16.3px;line-height:16.3px;color:#c00d1e;font-weight:bold;left:441.00px;transform:scaleX(1.0749);-webkit-text-stroke:0.45px;">х округов</div>
<div class="a" style="left:584.7px;top:525.6px;width:150.0px;height:102.5px;border-radius:50%;background:#2aa9e3"></div>
<div class="t" style="top:546.00px;font-size:19px;line-height:19px;color:#c00d1e;font-weight:bold;left:647.20px;transform:scaleX(1.1826);-webkit-text-stroke:0.45px;">32</div>
<div class="t" style="top:574.00px;font-size:16.3px;line-height:16.3px;color:#c00d1e;font-weight:bold;left:637.80px;transform:scaleX(1.0057);-webkit-text-stroke:0.45px;">Вуза-</div>
<div class="t" style="top:590.00px;font-size:16.3px;line-height:16.3px;color:#c00d1e;font-weight:bold;left:614.40px;transform:scaleX(1.0610);-webkit-text-stroke:0.45px;">партнеров</div>
<div class="a" style="left:766px;top:521px;width:157px;height:107px;border-radius:50%;background:#2aa9e3"></div>
<div class="t" style="top:555.00px;font-size:19px;line-height:19px;color:#c00d1e;font-weight:bold;left:831.60px;transform:scaleX(1.1826);-webkit-text-stroke:0.45px;">32</div>
<div class="t" style="top:576.00px;font-size:16.3px;line-height:16.3px;color:#c00d1e;font-weight:bold;left:782.50px;transform:scaleX(1.0899);-webkit-text-stroke:0.45px;">координатора</div>
<div class="a" style="left:947.5px;top:521px;width:165.5999999999999px;height:110.89999999999998px;border-radius:50%;background:#2aa9e3"></div>
<div class="t" style="top:558.00px;font-size:16.3px;line-height:16.3px;color:#c00d1e;font-weight:bold;left:963.00px;transform:scaleX(1.0680);-webkit-text-stroke:0.45px;">Сетевая форма</div>
<div class="t" style="top:575.00px;font-size:16.3px;line-height:16.3px;color:#c00d1e;font-weight:bold;left:961.25px;transform:scaleX(1.0538);-webkit-text-stroke:0.45px;">сотрудничества</div>
<div class="a" style="left:1123.75px;top:523px;width:155.0px;height:102px;border-radius:50%;background:#2aa9e3"></div>
<div class="t" style="top:549.00px;font-size:15px;line-height:15px;color:#c00d1e;font-weight:bold;left:1161.25px;-webkit-text-stroke:0.45px;">ОНЛАЙН и</div>
<div class="t" style="top:563.00px;font-size:15px;line-height:15px;color:#c00d1e;font-weight:bold;left:1167.50px;transform:scaleX(0.9944);-webkit-text-stroke:0.45px;">ОФЛАЙН</div>
<div class="t" style="top:583.00px;font-size:15px;line-height:15px;color:#c00d1e;font-weight:bold;left:1155.00px;transform:scaleX(1.0792);-webkit-text-stroke:0.45px;">технологии</div>
<div class="a" style="left:291.9px;top:645px;width:578.1px;height:58.75px;background:#dee8f6;border:2px solid #4a72a6"></div>
<div class="t" style="top:647.00px;font-size:16.3px;line-height:16.3px;color:#0c2461;font-weight:bold;left:320.60px;transform:scaleX(1.1384);-webkit-text-stroke:0.45px;">ФОРМИРОВАНИЕ КОМПЕТЕНЦИЙ ППС И СОТРУДНИКОВ</div>
<div class="t" style="top:667.00px;font-size:16.3px;line-height:16.3px;color:#0c2461;font-weight:bold;left:361.90px;transform:scaleX(1.1099);-webkit-text-stroke:0.45px;">ВУЗОВ В ОБЛАСТИ ИНКЛЮЗИВНОГО ВЫСШЕГО</div>
<div class="t" style="top:687.00px;font-size:16.3px;line-height:16.3px;color:#0c2461;font-weight:bold;left:512.80px;transform:scaleX(1.0783);-webkit-text-stroke:0.45px;">ОБРАЗОВАНИЯ</div>
<div class="a" style="left:889.4px;top:646.6px;width:556.1999999999999px;height:59.64999999999998px;background:#dee8f6;border:2px solid #4a72a6"></div>
<div class="t" style="top:658.00px;font-size:16.3px;line-height:16.3px;color:#0c2461;font-weight:bold;left:951.25px;transform:scaleX(1.1408);-webkit-text-stroke:0.45px;">ТИРАЖИРОВАНИЕ  ПРАКТИК ИНКЛЮЗИВНОГО</div>
<div class="t" style="top:679.00px;font-size:16.3px;line-height:16.3px;color:#0c2461;font-weight:bold;left:939.40px;transform:scaleX(1.1221);-webkit-text-stroke:0.45px;">ОБРАЗОВАНИЯ СТУДЕНТОВ С ИНВАЛИДНОСТЬЮ</div>
<div class="a" style="left:301px;top:727px;width:282px;height:186px;background:#fbfbfb;overflow:hidden">
<div class="a" style="left:4px;top:3px;width:140px;height:3px;background:#c9c9c9"></div>
<div class="a" style="left:4px;top:11px;width:165px;height:2px;background:#b5b5b5"></div>
<div class="a" style="left:160px;top:3px;width:25px;height:3px;background:#e05050"></div>
<div class="a" style="left:12px;top:16px;width:75px;height:24px;background:#eeeeee"></div>
<div class="a" style="left:82px;top:16px;width:106px;height:24px;background:#d9cfc4"></div>
<div class="a" style="left:93px;top:21px;width:14px;height:16px;border-radius:7px;background:#7a5548"></div>
<div class="a" style="left:125px;top:21px;width:14px;height:16px;border-radius:7px;background:#8a6f5a"></div>
<div class="a" style="left:157px;top:21px;width:14px;height:16px;border-radius:7px;background:#a07a60"></div>
<div class="a" style="left:0;top:42px;width:198px;height:128px;background:#111"></div>
<div class="a" style="left:8px;top:46px;width:181px;height:118px;background:#c9d9ea"></div>
<div class="a" style="left:8px;top:46px;width:181px;height:22px;background:linear-gradient(#e8eef6,#c6d5e8)"></div>
<div class="a" style="left:10px;top:69px;width:22px;height:90px;background:#9bb9d6"></div>
<div class="a" style="left:12px;top:72px;width:18px;height:18px;background:#b9d68a"></div>
<div class="a" style="left:12px;top:94px;width:18px;height:18px;background:#b9d68a"></div>
<div class="a" style="left:12px;top:116px;width:18px;height:18px;background:#b9d68a"></div>
<div class="a" style="left:12px;top:138px;width:18px;height:18px;background:#b9d68a"></div>
<div class="a" style="left:34px;top:69px;width:155px;height:90px;background:linear-gradient(90deg,#3f70b8,#8fb0db 40%,#c2d6ee)"></div>
<div class="a" style="left:70px;top:69px;width:86px;height:80px;background:#d6e7b3;border:1px solid #9ab07a"></div>
<div class="a" style="left:78px;top:82px;width:66px;height:2.5px;background:#5a6a4a"></div>
<div class="a" style="left:76px;top:89px;width:70px;height:2.5px;background:#5a6a4a"></div>
<div class="a" style="left:84px;top:96px;width:56px;height:2.5px;background:#5a6a4a"></div>
<div class="a" style="left:88px;top:103px;width:46px;height:2.5px;background:#5a6a4a"></div>
<div class="a" style="left:72px;top:116px;width:24px;height:30px;background:#000"></div>
<div class="a" style="left:78px;top:123px;width:13px;height:17px;background:#fff;transform:skewX(-10deg)"></div>
<div class="a" style="left:146px;top:62px;width:42px;height:38px;background:#bdbdbd"></div>
<div class="a" style="left:142px;top:146px;width:41px;height:11px;background:#bdbdbd"></div>
<div class="a" style="left:34px;top:158px;width:155px;height:7px;background:#f0f0f0"></div>
<div class="a" style="left:202px;top:12px;width:22px;height:2px;background:#999"></div>
<div class="a" style="left:206px;top:22px;width:68px;height:6px;border:1px solid #ddd;border-radius:3px"></div>
<div class="a" style="left:208px;top:39px;width:55px;height:2px;background:#aaa"></div>
<div class="a" style="left:208px;top:51px;width:55px;height:2px;background:#aaa"></div>
<div class="a" style="left:205px;top:60px;width:28px;height:6px;background:#e6e6e6;border-radius:3px"></div>
<div class="a" style="left:237px;top:60px;width:28px;height:6px;background:#e6e6e6;border-radius:3px"></div>
<div class="a" style="left:203px;top:70px;width:78px;height:1px;background:#ddd"></div>
<div class="a" style="left:208px;top:82px;width:60px;height:1.5px;background:#ccc"></div>
<div class="a" style="left:208px;top:92px;width:65px;height:1.5px;background:#ccc"></div>
<div class="a" style="left:208px;top:102px;width:55px;height:1.5px;background:#ccc"></div>
<div class="a" style="left:208px;top:112px;width:62px;height:1.5px;background:#ccc"></div>
<div class="a" style="left:208px;top:122px;width:50px;height:1.5px;background:#ccc"></div>
<div class="a" style="left:205px;top:143px;width:76px;height:6px;border:1px solid #ddd"></div>
<div class="a" style="left:30px;top:174px;width:150px;height:8px;background:#f0f0f0;border-radius:4px"></div>
<div class="a" style="left:224px;top:173px;width:10px;height:10px;border-radius:50%;background:#e8412c"></div>
<div class="a" style="left:245px;top:176px;width:30px;height:4px;background:#e0e0e0"></div>
</div>
<div class="a" style="left:592px;top:725px;width:292px;height:187px;background:#fbfbfb;overflow:hidden">
<div class="a" style="left:4px;top:3px;width:150px;height:3px;background:#c9c9c9"></div>
<div class="a" style="left:4px;top:11px;width:170px;height:2px;background:#b5b5b5"></div>
<div class="a" style="left:176px;top:3px;width:30px;height:3px;background:#e05050"></div>
<div class="a" style="left:10px;top:16px;width:55px;height:24px;background:#e8e8e8"></div>
<div class="a" style="left:65px;top:16px;width:24px;height:24px;background:#dde8f0;border:1px solid #5bb2e0"></div>
<div class="a" style="left:90px;top:16px;width:105px;height:24px;background:#cfc2b8"></div>
<div class="a" style="left:113px;top:21px;width:14px;height:16px;border-radius:7px;background:#8a6b5e"></div>
<div class="a" style="left:145px;top:21px;width:14px;height:16px;border-radius:7px;background:#7a5850"></div>
<div class="a" style="left:177px;top:21px;width:14px;height:16px;border-radius:7px;background:#6e5048"></div>
<div class="a" style="left:0;top:41px;width:206px;height:130px;background:#2a2a2a"></div>
<div class="a" style="left:14px;top:51px;width:105px;height:92px;background:#fff"></div>
<div class="a" style="left:14px;top:51px;width:105px;height:10px;background:#e9e4e4"></div>
<div class="a" style="left:16px;top:62px;width:12px;height:78px;background:#eee"></div>
<div class="a" style="left:17px;top:64px;width:10px;height:8px;background:#cf5060"></div>
<div class="a" style="left:17px;top:76px;width:10px;height:8px;background:#5078c0"></div>
<div class="a" style="left:17px;top:88px;width:10px;height:8px;background:#cf6060"></div>
<div class="a" style="left:17px;top:100px;width:10px;height:8px;background:#cf6060"></div>
<div class="a" style="left:34px;top:63px;width:80px;height:78px;background:#fff;border-left:2px solid #e2a020"></div>
<div class="a" style="left:36px;top:64px;width:78px;height:10px;background:#d6335c"></div>
<div class="a" style="left:40px;top:80px;width:30px;height:2px;background:#888"></div>
<div class="a" style="left:40px;top:86px;width:30px;height:2px;background:#888"></div>
<div class="a" style="left:40px;top:92px;width:30px;height:2px;background:#888"></div>
<div class="a" style="left:76px;top:78px;width:32px;height:26px;background:#a08070"></div>
<div class="a" style="left:40px;top:107px;width:32px;height:30px;background:#b7a4a0"></div>
<div class="a" style="left:76px;top:107px;width:34px;height:32px;background:#9a8a80"></div>
<div class="a" style="left:44px;top:110px;width:10px;height:12px;background:#d23a3a"></div>
<div class="a" style="left:210px;top:20px;width:22px;height:2px;background:#999"></div>
<div class="a" style="left:212px;top:27px;width:70px;height:6px;border:1px solid #ddd;border-radius:3px"></div>
<div class="a" style="left:212px;top:40px;width:50px;height:6px;background:#eee"></div>
<div class="a" style="left:212px;top:56px;width:60px;height:8px;background:#eee"></div>
<div class="a" style="left:212px;top:70px;width:32px;height:7px;background:#e6e6e6;border-radius:3px"></div>
<div class="a" style="left:248px;top:70px;width:32px;height:7px;background:#e6e6e6;border-radius:3px"></div>
<div class="a" style="left:210px;top:92px;width:20px;height:2px;background:#999"></div>
<div class="a" style="left:210px;top:100px;width:62px;height:1.5px;background:#aaa"></div>
<div class="a" style="left:210px;top:108px;width:76px;height:1.5px;background:#bbb"></div>
<div class="a" style="left:210px;top:114px;width:76px;height:1.5px;background:#bbb"></div>
<div class="a" style="left:210px;top:120px;width:76px;height:1.5px;background:#bbb"></div>
<div class="a" style="left:210px;top:126px;width:76px;height:1.5px;background:#bbb"></div>
<div class="a" style="left:210px;top:132px;width:76px;height:1.5px;background:#bbb"></div>
<div class="a" style="left:210px;top:138px;width:60px;height:1.5px;background:#bbb"></div>
<div class="a" style="left:210px;top:160px;width:50px;height:1.5px;background:#ccc"></div>
<div class="a" style="left:30px;top:174px;width:170px;height:8px;background:#f0f0f0;border-radius:4px"></div>
<div class="a" style="left:231px;top:174px;width:10px;height:10px;border-radius:50%;background:#e8412c"></div>
<div class="a" style="left:255px;top:176px;width:30px;height:4px;background:#e0e0e0"></div>
</div>
<div class="a" style="left:891px;top:724px;width:266px;height:186px;background:repeating-linear-gradient(45deg,#e9dc8a 0 2px,#f2eab0 2px 4px);overflow:hidden">
<div class="a" style="left:9px;top:9px;width:248px;height:168px;background:linear-gradient(135deg,#f8f3d0,#fbf9e8 50%,#eef3e0);border:1px solid #e2d690;box-shadow:0 0 6px 3px #f4eebc"></div>
<div class="a" style="left:128px;top:12px;width:1px;height:160px;background:#efe8c0"></div>
<div class="a" style="left:35px;top:25px;width:60px;height:2px;background:#6b6b5a"></div>
<div class="a" style="left:22px;top:38px;width:86px;height:1.5px;background:#9a9a8a"></div>
<div class="a" style="left:22px;top:42px;width:86px;height:1.5px;background:#9a9a8a"></div>
<div class="a" style="left:22px;top:46px;width:86px;height:1.5px;background:#9a9a8a"></div>
<div class="a" style="left:22px;top:50px;width:86px;height:1.5px;background:#9a9a8a"></div>
<div class="a" style="left:34px;top:66px;width:64px;height:4px;background:#6a6a60"></div>
<div class="a" style="left:32px;top:76px;width:66px;height:1.5px;background:#a8a898"></div>
<div class="a" style="left:40px;top:85px;width:50px;height:2px;background:#c25a5a"></div>
<div class="a" style="left:40px;top:103px;width:46px;height:1.5px;background:#b4b4a4"></div>
<div class="a" style="left:50px;top:128px;width:30px;height:1.5px;background:#b4b4a4"></div>
<div class="a" style="left:50px;top:134px;width:30px;height:1.5px;background:#b0b0a0"></div>
<div class="a" style="left:56px;top:142px;width:18px;height:1.5px;background:#b4b4a4"></div>
<div class="a" style="left:56px;top:149px;width:22px;height:1.5px;background:#b4b4a4"></div>
<div class="a" style="left:56px;top:155px;width:22px;height:1.5px;background:#b0b0a0"></div>
<div class="a" style="left:150px;top:14px;width:90px;height:1.5px;background:#b4b4a4"></div>
<div class="a" style="left:162px;top:20px;width:66px;height:1.5px;background:#9a9a8a"></div>
<div class="a" style="left:160px;top:28px;width:70px;height:1.5px;background:#b0b0a0"></div>
<div class="a" style="left:165px;top:37px;width:60px;height:1.5px;background:#bcbcac"></div>
<div class="a" style="left:145px;top:47px;width:100px;height:1.5px;background:#a8a898"></div>
<div class="a" style="left:160px;top:51px;width:70px;height:1.5px;background:#a8a898"></div>
<div class="a" style="left:160px;top:62px;width:75px;height:1.5px;background:#9a9a8a"></div>
<div class="a" style="left:165px;top:67px;width:65px;height:1.5px;background:#a8a898"></div>
<div class="a" style="left:160px;top:77px;width:70px;height:1.5px;background:#bcbcac"></div>
<div class="a" style="left:150px;top:85px;width:90px;height:1.5px;background:#9a9a8a"></div>
<div class="a" style="left:155px;top:91px;width:80px;height:1.5px;background:#a8a898"></div>
<div class="a" style="left:180px;top:118px;width:22px;height:1.5px;background:#b4b4a4"></div>
<div class="a" style="left:180px;top:124px;width:26px;height:1.5px;background:#a8a898"></div>
<div class="a" style="left:130px;top:123px;width:38px;height:38px;border-radius:50%;border:2px solid #7fb6a8;background:radial-gradient(#d6ead8,#bcdccf)"></div>
<div class="a" style="left:180px;top:150px;width:30px;height:12px;border-bottom:2px solid #333;transform:skewX(-40deg)"></div>
<div class="a" style="left:212px;top:146px;width:22px;height:1.5px;background:#b4b4a4"></div>
<div class="a" style="left:212px;top:154px;width:22px;height:1.5px;background:#b4b4a4"></div>
</div>
<div class="a" style="left:1169px;top:733px;width:239px;height:177px;background:#b08048;overflow:hidden">
<div class="a" style="left:0;top:0;width:135px;height:9px;background:linear-gradient(90deg,#4a4a48,#6a6e70 40%,#3e4244)"></div>
<div class="a" style="left:0;top:9px;width:135px;height:36px;background:repeating-linear-gradient(180deg,#b9893f 0 10px,#a27434 10px 12px)"></div>
<div class="a" style="left:0;top:36px;width:30px;height:40px;background:#d8d2c6"></div>
<div class="a" style="left:30px;top:42px;width:120px;height:32px;background:#dcd6ca"></div>
<div class="a" style="left:32px;top:42px;width:24px;height:20px;background:#8a6a48"></div>
<div class="a" style="left:59px;top:44px;width:21px;height:30px;background:#b08a60"></div>
<div class="a" style="left:91px;top:44px;width:21px;height:24px;background:#b08a60"></div>
<div class="a" style="left:128px;top:0;width:111px;height:70px;background:linear-gradient(200deg,#f4f6f8 0%,#dfe6ea 50%,#cfd6d8 100%)"></div>
<div class="a" style="left:128px;top:0;width:46px;height:42px;background:#a8804a;clip-path:polygon(0 0,100% 0,10% 100%,0 100%)"></div>
<div class="a" style="left:180px;top:12px;width:59px;height:78px;background:#5e3e2a;clip-path:polygon(0 22%,100% 0,100% 100%,0 72%)"></div>
<div class="a" style="left:186px;top:20px;width:50px;height:56px;background:repeating-linear-gradient(90deg,transparent 0 1px,#5e3e2a 1px 2px,transparent 2px 8px),linear-gradient(180deg,#c8c4c8 0 44%,#5e3e2a 44% 52%,#d0ccd0 52% 100%);clip-path:polygon(0 25%,100% 0,100% 100%,0 80%)"></div><div class="a" style="left:190px;top:28px;width:44px;height:44px;background:repeating-linear-gradient(90deg,rgba(120,60,60,.35) 0 3px,rgba(60,80,140,.3) 3px 7px);clip-path:polygon(0 20%,100% 0,100% 100%,0 80%)"></div>
<div class="a" style="left:0;top:62px;width:180px;height:45px;background:#c8b8a0"></div>
<div class="a" style="left:170px;top:70px;width:69px;height:107px;background:linear-gradient(180deg,#b07a44,#9a6838);clip-path:polygon(0 0,100% 25%,100% 100%,0 100%)"></div>
<div class="a" style="left:0;top:62px;width:18px;height:60px;background:#e0dcd6"></div>
<div class="a" style="left:4px;top:72px;width:14px;height:50px;background:#6e6a6e"></div>
<div class="a" style="left:16px;top:78px;width:50px;height:12px;background:#9a7a5a"></div>
<div class="a" style="left:64px;top:70px;width:18px;height:22px;border-radius:8px 8px 0 0;background:#6a2a3a"></div>
<div class="a" style="left:86px;top:66px;width:16px;height:24px;border-radius:8px 8px 0 0;background:#d8383a"></div>
<div class="a" style="left:104px;top:68px;width:18px;height:24px;border-radius:8px 8px 0 0;background:#f0e8e0"></div>
<div class="a" style="left:124px;top:66px;width:18px;height:26px;border-radius:8px 8px 0 0;background:#4a3a3a"></div>
<div class="a" style="left:146px;top:62px;width:22px;height:30px;border-radius:10px 10px 0 0;background:#7a7a80"></div>
<div class="a" style="left:66px;top:60px;width:10px;height:10px;border-radius:5px;background:#c8a090"></div>
<div class="a" style="left:90px;top:57px;width:10px;height:10px;border-radius:5px;background:#e0b0a0"></div>
<div class="a" style="left:108px;top:58px;width:10px;height:10px;border-radius:5px;background:#d8b098"></div>
<div class="a" style="left:150px;top:54px;width:12px;height:11px;border-radius:6px;background:#c8a090"></div>
<div class="a" style="left:126px;top:76px;width:24px;height:30px;border-radius:10px 10px 0 0;background:#4a3a30"></div>
<div class="a" style="left:128px;top:82px;width:20px;height:22px;border-radius:10px;background:#d8a890"></div>
<div class="a" style="left:62px;top:92px;width:110px;height:20px;background:#b07a48"></div>
<div class="a" style="left:20px;top:100px;width:40px;height:4px;background:#a07040"></div>
<div class="a" style="left:18px;top:80px;width:42px;height:70px;border-radius:18px 18px 0 0;background:#3a2a28"></div>
<div class="a" style="left:26px;top:88px;width:24px;height:30px;border-radius:12px;background:#e2b098"></div>
<div class="a" style="left:20px;top:108px;width:48px;height:42px;border-radius:14px 14px 0 0;background:#3a9ccc"></div>
<div class="a" style="left:80px;top:86px;width:42px;height:64px;border-radius:18px 18px 0 0;background:#a88860"></div>
<div class="a" style="left:89px;top:92px;width:24px;height:30px;border-radius:12px;background:#e6b8a0"></div>
<div class="a" style="left:80px;top:110px;width:48px;height:40px;border-radius:14px 14px 0 0;background:#3c3048"></div>
<div class="a" style="left:136px;top:82px;width:44px;height:52px;border-radius:20px 20px 0 0;background:#c8b088"></div>
<div class="a" style="left:146px;top:90px;width:26px;height:32px;border-radius:13px;background:#ecc4ac"></div>
<div class="a" style="left:130px;top:108px;width:60px;height:48px;border-radius:20px 20px 0 0;background:#f4f2ee"></div>
<div class="a" style="left:0;top:142px;width:239px;height:35px;background:linear-gradient(180deg,#c08050,#a86a40)"></div>
<div class="a" style="left:22px;top:151px;width:14px;height:9px;background:#1e1e22;transform:rotate(-18deg)"></div>
<div class="a" style="left:107px;top:150px;width:12px;height:10px;background:#1e1e22;transform:rotate(10deg)"></div>
<div class="a" style="left:83px;top:148px;width:18px;height:10px;background:#f8f8f4;transform:rotate(-12deg)"></div>
<div class="a" style="left:135px;top:150px;width:44px;height:20px;background:#f4f2ee;transform:rotate(4deg)"></div>
<div class="a" style="left:186px;top:150px;width:14px;height:8px;background:#c83848;transform:rotate(18deg)"></div>
<div class="a" style="left:212px;top:138px;width:30px;height:40px;border-radius:16px 0 0 0;background:#1e1e20"></div>
</div>
<div class="a" style="left:288px;top:915px;width:1162px;height:35px;background:#2e74b8"></div>
<div class="t" style="top:923.00px;font-size:21px;line-height:21px;color:#fff;font-weight:bold;left:770.00px;transform:scaleX(0.9311);">РУМЦ МГППУ,  2022 г.</div>
</div>
<div class="t" id="t125" style="top:645.00px;font-size:11.5px;line-height:11.5px;color:#d9572f;left:9.19px;">4</div>
<svg style="left:153px;top:697px" width="12" height="19"><path d="M1 1V15.5L4.6 12.2L7.2 17.8L9.6 16.7L7.1 11.2H11.8Z" fill="#fff" stroke="#111" stroke-width="1.1" stroke-linejoin="round"/></svg>
<div class="a" style="left:21px;top:761px;width:177px;height:100px;background:#fff;border:1px solid #d0d0d0;overflow:hidden"></div>
<div class="a" style="left:24px;top:763px;width:4px;height:7px;background:#1b63b3"></div>
<div class="a" style="left:28px;top:763px;width:4px;height:7px;background:linear-gradient(#e8173a 0 30%,#9c4d9d 30% 55%,#86c340 55% 80%,#f8a91c 80%)"></div>
<div class="a" style="left:33px;top:764px;width:10px;height:4px;background:repeating-linear-gradient(#b8cfe6 0 1px,transparent 1px 2px)"></div>
<div class="a" style="left:189px;top:763px;width:6px;height:8px;border:1px solid #aaa;background:#fff"></div>
<div class="a" style="left:24px;top:773px;width:171px;height:1px;background:#3a9ad8"></div>
<div class="t" id="t126" style="top:767.00px;font-size:5.5px;line-height:5.5px;color:#1a2a5a;font-weight:bold;left:89.00px;transform:scaleX(0.8135);">Call – центр РУМЦ</div>
<div class="a" style="left:66px;top:776px;width:44px;height:3px;background:#3a3a5a"></div>
<div class="t" id="t127" style="top:775.00px;font-size:6.5px;line-height:6.5px;color:#1a2a5a;font-weight:bold;left:113.00px;transform:scaleX(0.8240);">: 8.800.707.49.29</div>
<div class="a" style="left:27px;top:785px;width:20px;height:16px;background:#5a5ad8;clip-path:polygon(10% 40%,60% 20%,100% 60%,90% 100%,0 100%)"></div>
<div class="a" style="left:31px;top:782px;width:12px;height:5px;background:#f0a0a0;border-radius:3px"></div>
<div class="a" style="left:55px;top:784px;width:22px;height:22px;background:linear-gradient(90deg,transparent 0 20%,#4a8ae0 20% 30%,transparent 30% 40%,#4a8ae0 40% 55%,transparent 55% 65%,#4a8ae0 65% 80%,transparent 80% 85%,#3a7ad0 85%);clip-path:polygon(0 100%,100% 0,100% 100%)"></div>
<div class="a" style="left:54px;top:782px;width:24px;height:20px;border-top:2px solid #d04040;border-radius:0 40px 0 0"></div>
<div class="a" style="left:81px;top:783px;width:25px;height:24px;border-radius:50%;background:conic-gradient(#4a78b8 0 35%,#2a9aa0 35% 50%,#8ab0d8 50% 70%,#a0a0a0 70% 78%,#6a98c8 78%)"></div>
<div class="a" style="left:112px;top:783px;width:19px;height:24px;background:repeating-linear-gradient(#cfcfcf 0 1px,#fff 1px 3px)"></div>
<div class="a" style="left:135px;top:781px;width:61px;height:32px;background:#4a86d0"></div>
<div class="a" style="left:137px;top:786px;width:42px;height:25px;background:repeating-linear-gradient(#1a2a5a 0 2px,#5a96e0 2px 5px)"></div>
<div class="a" style="left:22px;top:811px;width:8px;height:3px;background:#c02020"></div>
<div class="a" style="left:31px;top:812px;width:52px;height:1.5px;background:#aaa"></div>
<div class="a" style="left:27px;top:835px;width:38px;height:1px;background:#ccc"></div>
<div class="a" style="left:36px;top:835px;width:3px;height:7px;background:#9fd0f0;border:1px solid #5aa0d8"></div>
<div class="a" style="left:43px;top:833px;width:3px;height:9px;background:#9fd0f0;border:1px solid #5aa0d8"></div>
<div class="a" style="left:50px;top:831px;width:3px;height:11px;background:#9fd0f0;border:1px solid #5aa0d8"></div>
<div class="a" style="left:58px;top:826px;width:3px;height:16px;background:#9fd0f0;border:1px solid #5aa0d8"></div>
<div class="a" style="left:112px;top:815px;width:62px;height:1.5px;background:#444"></div>
<div class="a" style="left:79px;top:818px;width:46px;height:32px;background:repeating-linear-gradient(#d8d8d8 0 1px,#fff 1px 3px);border-bottom:1px solid #4a9a4a"></div>
<div class="a" style="left:86px;top:817px;width:40px;height:1px;background:#d04040"></div>
<div class="a" style="left:138px;top:819px;width:52px;height:30px;background:repeating-linear-gradient(#e0e0e0 0 1px,#fff 1px 3px)"></div>
<div class="a" style="left:25px;top:850px;width:40px;height:2px;background:#444"></div>
<div class="a" style="left:79px;top:852px;width:52px;height:2px;background:#444"></div>
<div class="a" style="left:138px;top:853px;width:58px;height:2px;background:#444"></div>
<div class="a" style="left:22px;top:856px;width:175px;height:5px;background:#2e74b8"></div>
<div class="t" id="t128" style="top:760.00px;font-size:11.5px;line-height:11.5px;color:#555;left:8.59px;">5</div>
<div class="a" style="left:21px;top:877px;width:177px;height:93px;background:#fff;border:1px solid #d0d0d0;border-bottom:none"></div>
<div class="a" style="left:24px;top:879px;width:4px;height:7px;background:#1b63b3"></div>
<div class="a" style="left:28px;top:879px;width:4px;height:7px;background:linear-gradient(#e8173a 0 30%,#9c4d9d 30% 55%,#86c340 55% 80%,#f8a91c 80%)"></div>
<div class="a" style="left:33px;top:880px;width:10px;height:4px;background:repeating-linear-gradient(#b8cfe6 0 1px,transparent 1px 2px)"></div>
<div class="a" style="left:189px;top:879px;width:6px;height:8px;border:1px solid #aaa;background:#fff"></div>
<div class="a" style="left:24px;top:889px;width:171px;height:1px;background:#3a9ad8"></div>
<div class="t" id="t129" style="top:879.00px;font-size:4.6px;line-height:4.6px;color:#1a2a5a;font-weight:bold;left:51.00px;transform:scaleX(0.9960);">Формирование компетенций у ППС и сотрудников вузов</div>
<div class="t" id="t130" style="top:883.00px;font-size:4.6px;line-height:4.6px;color:#1a2a5a;font-weight:bold;left:56.00px;transform:scaleX(0.9862);">в области инклюзивного высшего образования</div>
<div class="a" style="left:54px;top:892px;width:116px;height:8px;border:1px solid #5577aa;background:#e8eef8"></div>
<div class="a" style="left:57px;top:894.5px;width:110px;height:2px;background:#333"></div>
<div class="a" style="left:33px;top:900.5px;width:21px;height:15px;border-radius:50%;background:#2aa9e3"></div>
<div class="a" style="left:37px;top:905px;width:13px;height:5px;background:repeating-linear-gradient(#b01030 0 1px,transparent 1px 2px)"></div>
<div class="a" style="left:55px;top:900.5px;width:20px;height:15px;border-radius:50%;background:#2aa9e3"></div>
<div class="a" style="left:59px;top:905px;width:12px;height:5px;background:repeating-linear-gradient(#b01030 0 1px,transparent 1px 2px)"></div>
<div class="a" style="left:77px;top:900.5px;width:19px;height:15px;border-radius:50%;background:#2aa9e3"></div>
<div class="a" style="left:81px;top:905px;width:11px;height:5px;background:repeating-linear-gradient(#b01030 0 1px,transparent 1px 2px)"></div>
<div class="a" style="left:97px;top:900.5px;width:19px;height:15px;border-radius:50%;background:#2aa9e3"></div>
<div class="a" style="left:101px;top:905px;width:11px;height:5px;background:repeating-linear-gradient(#b01030 0 1px,transparent 1px 2px)"></div>
<div class="a" style="left:118px;top:900.5px;width:20px;height:15px;border-radius:50%;background:#2aa9e3"></div>
<div class="a" style="left:122px;top:905px;width:12px;height:5px;background:repeating-linear-gradient(#b01030 0 1px,transparent 1px 2px)"></div>
<div class="a" style="left:139px;top:900.5px;width:19px;height:15px;border-radius:50%;background:#2aa9e3"></div>
<div class="a" style="left:143px;top:905px;width:11px;height:5px;background:repeating-linear-gradient(#b01030 0 1px,transparent 1px 2px)"></div>
<div class="a" style="left:159px;top:900.5px;width:25px;height:15px;border-radius:50%;background:#2aa9e3"></div>
<div class="a" style="left:163px;top:905px;width:17px;height:5px;background:repeating-linear-gradient(#b01030 0 1px,transparent 1px 2px)"></div>
<div class="a" style="left:86px;top:915.5px;width:40px;height:22px;background:#a8c8e8"></div>
<div class="a" style="left:90px;top:919px;width:30px;height:12px;background:#333;transform:rotate(-10deg)"></div>
<div class="a" style="left:94px;top:921px;width:22px;height:8px;background:#ddd;transform:rotate(-10deg)"></div>
<div class="a" style="left:26px;top:937px;width:57px;height:33px;background:repeating-linear-gradient(#dfe6f0 0 3px,#fff 3px 4px);border-left:4px solid #4a86c8"></div>
<div class="a" style="left:26px;top:937px;width:57px;height:2px;background:#4a86c8"></div>
<div class="a" style="left:87px;top:938px;width:52px;height:32px;background:#1e1e1e"></div>
<div class="a" style="left:88px;top:942px;width:38px;height:26px;background:repeating-linear-gradient(90deg,#6a6a6a 0 4px,#2a2a2a 4px 6px)"></div>
<div class="a" style="left:143px;top:939px;width:47px;height:31px;background:#f6f4e2;border:1px solid #dcd8b0"></div>
<div class="t" id="t131" style="top:875.00px;font-size:11.5px;line-height:11.5px;color:#555;left:8.59px;">6</div>
<div class="a" style="left:1520px;top:29px;width:400px;height:976px;background:#fff"></div>
<svg style="left:1545px;top:54px" width="11" height="8"><path d="M1 1.5L5.5 6L10 1.5" fill="none" stroke="#555" stroke-width="1.6"/></svg>
<div class="t" id="t132" style="top:49.00px;font-size:17.4px;line-height:17.4px;color:#111;font-weight:bold;left:1662.00px;transform:scaleX(0.9271);">Участники (20)</div>
<div class="a" style="left:1544px;top:97px;width:354px;height:39px;border:1px solid #c4c4cc;border-radius:9px;background:#fff"></div>
<svg style="left:1559px;top:110px" width="15" height="15"><circle cx="6" cy="6" r="5" fill="none" stroke="#777" stroke-width="1.4"/><path d="M9.7 9.7L14 14" stroke="#777" stroke-width="1.5"/></svg>
<div class="t" id="t133" style="top:109.00px;font-size:16px;line-height:16px;color:#70707a;left:1579.70px;transform:scaleX(0.9568);">Найти участника</div>
<div class="a" style="left:1907px;top:140px;width:10px;height:797px;background:#f1f1f4;border-radius:5px"></div>
<div class="a" style="left:1907px;top:140px;width:10px;height:657px;background:#a9abb3;border-radius:5px"></div>
<div class="a" style="left:0;top:0;width:1920px;height:1080px;overflow:hidden;clip-path:inset(140px 0 143px 0)">
<div class="a" style="left:1548px;top:148px;width:33px;height:33px;border-radius:7px;background:#20a78b"></div>
<div class="t" id="t134" style="top:157.00px;font-size:15px;line-height:15px;color:#fff;font-weight:bold;left:1559.02px;">Ц</div>
<div class="t" id="t135" style="top:159.00px;font-size:16px;line-height:16px;color:#232333;left:1596.50px;transform:scaleX(0.9639);">Цилюгина Ирина Борисовна (Я)</div>
<svg style="left:1839px;top:155px" width="20" height="20"><rect x="7" y="1.2" width="6" height="10.6" rx="3" fill="none" stroke="#e0454a" stroke-width="1.2"/><path d="M4.5 9Q4.5 15 10 15Q15.5 15 15.5 9M10 15V18.5M7 18.7H13" fill="none" stroke="#e0454a" stroke-width="1.3"/><path d="M0.5 19.5L19.5 0.5" stroke="#e0454a" stroke-width="1.3"/></svg>
<svg style="left:1869px;top:155px" width="21" height="20"><path d="M2.5 4H13.5Q15 4 15 5.5V14.5Q15 16 13.5 16H2.5Q1 16 1 14.5V5.5Q1 4 2.5 4ZM15 8.5L20 5V15L15 11.5" fill="none" stroke="#e0454a" stroke-width="1.3"/><path d="M1 19.5L20.5 0.5" stroke="#e0454a" stroke-width="1.3"/></svg>
<svg style="left:1547px;top:198px" width="36" height="36"><path d="M6.5 4H16V1H21V4H30Q33 4 33 7V15H34.5V20H33V30Q33 33 30 33H21V34H16V33H6.5Q3.5 33 3.5 30V20H1V15H3.5V7Q3.5 4 6.5 4Z" fill="#f59f2a"/>
<path d="M10.5 20L16 24.5Q20 26 22.5 22Q24 18 19.5 13" fill="none" stroke="#fff" stroke-width="2.6"/><path d="M10 19.5L13 22.5" stroke="#f59f2a" stroke-width="1"/></svg>
<div class="t" id="t136" style="top:210.00px;font-size:16px;line-height:16px;color:#232333;left:1596.50px;transform:scaleX(0.9538);">Университет Дет...  (Организатор)</div>
<svg style="left:1839px;top:206px" width="20" height="20"><rect x="7" y="1.2" width="6" height="10.6" rx="3" fill="none" stroke="#e0454a" stroke-width="1.2"/><path d="M4.5 9Q4.5 15 10 15Q15.5 15 15.5 9M10 15V18.5M7 18.7H13" fill="none" stroke="#e0454a" stroke-width="1.3"/><path d="M0.5 19.5L19.5 0.5" stroke="#e0454a" stroke-width="1.3"/></svg>
<svg style="left:1869px;top:206px" width="21" height="20"><path d="M2.5 4H13.5Q15 4 15 5.5V14.5Q15 16 13.5 16H2.5Q1 16 1 14.5V5.5Q1 4 2.5 4ZM15 8.5L20 5V15L15 11.5" fill="none" stroke="#e0454a" stroke-width="1.3"/><path d="M1 19.5L20.5 0.5" stroke="#e0454a" stroke-width="1.3"/></svg>
<div class="a" style="left:1548px;top:250px;width:33px;height:33px;border-radius:7px;background:#20a78b"></div>
<div class="t" id="t137" style="top:259.00px;font-size:15px;line-height:15px;color:#fff;font-weight:bold;left:1560.24px;">Г</div>
<div class="t" id="t138" style="top:261.00px;font-size:16px;line-height:16px;color:#232333;left:1596.50px;transform:scaleX(0.9308);">Гузель Саитгалиева</div>
<svg style="left:1839px;top:257px" width="20" height="20"><rect x="6.5" y="0.7" width="7" height="12" rx="3.5" fill="#80808a"/><path d="M4.5 9Q4.5 15 10 15Q15.5 15 15.5 9M10 15V18.5M7 18.7H13" fill="none" stroke="#7a7a86" stroke-width="1.3"/></svg>
<svg style="left:1869px;top:257px" width="21" height="20"><path d="M2.5 4H13.5Q15 4 15 5.5V14.5Q15 16 13.5 16H2.5Q1 16 1 14.5V5.5Q1 4 2.5 4ZM15 8.5L20 5V15L15 11.5" fill="none" stroke="#7a7a86" stroke-width="1.3"/></svg>
<div class="a" style="left:1809px;top:260px;width:20px;height:14px;border-radius:2px;background:#11a52c"></div>
<svg style="left:1814px;top:262px" width="10" height="10"><path d="M5 9V2M1.8 5L5 1.5L8.2 5" fill="none" stroke="#fff" stroke-width="1.8"/></svg>
<div class="a" style="left:1548px;top:301px;width:33px;height:33px;border-radius:7px;background:#f59f1b"></div>
<div class="t" id="t139" style="top:311.00px;font-size:15px;line-height:15px;color:#fff;font-weight:bold;left:1559.49px;">Р</div>
<div class="t" id="t140" style="top:312.00px;font-size:16px;line-height:16px;color:#232333;left:1596.50px;transform:scaleX(0.9328);">Режиссёр (Stre...  (Соорганизатор)</div>
<svg style="left:1839px;top:308px" width="20" height="20"><rect x="7" y="1.2" width="6" height="10.6" rx="3" fill="none" stroke="#7a7a86" stroke-width="1.2"/><path d="M4.5 9Q4.5 15 10 15Q15.5 15 15.5 9M10 15V18.5M7 18.7H13" fill="none" stroke="#7a7a86" stroke-width="1.3"/></svg>
<svg style="left:1869px;top:308px" width="21" height="20"><path d="M2.5 4H13.5Q15 4 15 5.5V14.5Q15 16 13.5 16H2.5Q1 16 1 14.5V5.5Q1 4 2.5 4ZM15 8.5L20 5V15L15 11.5" fill="none" stroke="#7a7a86" stroke-width="1.3"/></svg>
<div class="a" style="left:1548px;top:352px;width:33px;height:33px;border-radius:7px;background:#d0530f"></div>
<div class="t" id="t141" style="top:361.00px;font-size:15px;line-height:15px;color:#fff;font-weight:bold;left:1559.49px;">S</div>
<div class="t" id="t142" style="top:363.00px;font-size:16px;line-height:16px;color:#232333;left:1596.50px;transform:scaleX(0.9501);">Stream2  (Соорганизатор)</div>
<svg style="left:1839px;top:359px" width="20" height="20"><rect x="7" y="1.2" width="6" height="10.6" rx="3" fill="none" stroke="#e0454a" stroke-width="1.2"/><path d="M4.5 9Q4.5 15 10 15Q15.5 15 15.5 9M10 15V18.5M7 18.7H13" fill="none" stroke="#e0454a" stroke-width="1.3"/><path d="M0.5 19.5L19.5 0.5" stroke="#e0454a" stroke-width="1.3"/></svg>
<svg style="left:1869px;top:359px" width="21" height="20"><path d="M2.5 4H13.5Q15 4 15 5.5V14.5Q15 16 13.5 16H2.5Q1 16 1 14.5V5.5Q1 4 2.5 4ZM15 8.5L20 5V15L15 11.5" fill="none" stroke="#7a7a86" stroke-width="1.3"/></svg>
<div class="a" style="left:1548px;top:403px;width:33px;height:33px;border-radius:7px;background:#2aa85a"></div>
<div class="t" id="t143" style="top:413.00px;font-size:15px;line-height:15px;color:#fff;font-weight:bold;left:1559.49px;">Е</div>
<div class="t" id="t144" style="top:414.00px;font-size:16px;line-height:16px;color:#232333;left:1596.50px;transform:scaleX(0.9275);">Евгений (Assist...  (Соорганизатор)</div>
<svg style="left:1839px;top:410px" width="20" height="20"><rect x="7" y="1.2" width="6" height="10.6" rx="3" fill="none" stroke="#e0454a" stroke-width="1.2"/><path d="M4.5 9Q4.5 15 10 15Q15.5 15 15.5 9M10 15V18.5M7 18.7H13" fill="none" stroke="#e0454a" stroke-width="1.3"/><path d="M0.5 19.5L19.5 0.5" stroke="#e0454a" stroke-width="1.3"/></svg>
<svg style="left:1869px;top:410px" width="21" height="20"><path d="M2.5 4H13.5Q15 4 15 5.5V14.5Q15 16 13.5 16H2.5Q1 16 1 14.5V5.5Q1 4 2.5 4ZM15 8.5L20 5V15L15 11.5" fill="none" stroke="#e0454a" stroke-width="1.3"/><path d="M1 19.5L20.5 0.5" stroke="#e0454a" stroke-width="1.3"/></svg>
<div class="a" style="left:1548px;top:454px;width:33px;height:33px;border-radius:7px;overflow:hidden;background:#efe7df">
<div class="a" style="left:4px;top:2px;width:26px;height:33px;border-radius:13px 13px 4px 4px;background:#a87b4a"></div>
<div class="a" style="left:9px;top:8px;width:15px;height:20px;border-radius:8px;background:#e8b898"></div>
<div class="a" style="left:27px;top:1px;width:6px;height:10px;background:#9a4aa0;border-radius:3px"></div></div>
<div class="t" id="t145" style="top:465.00px;font-size:16px;line-height:16px;color:#232333;left:1596.50px;transform:scaleX(0.9453);">Mag. Lane Maerz</div>
<svg style="left:1839px;top:461px" width="20" height="20"><rect x="7" y="1.2" width="6" height="10.6" rx="3" fill="none" stroke="#7a7a86" stroke-width="1.2"/><path d="M4.5 9Q4.5 15 10 15Q15.5 15 15.5 9M10 15V18.5M7 18.7H13" fill="none" stroke="#7a7a86" stroke-width="1.3"/></svg>
<svg style="left:1869px;top:461px" width="21" height="20"><path d="M2.5 4H13.5Q15 4 15 5.5V14.5Q15 16 13.5 16H2.5Q1 16 1 14.5V5.5Q1 4 2.5 4ZM15 8.5L20 5V15L15 11.5" fill="none" stroke="#e0454a" stroke-width="1.3"/><path d="M1 19.5L20.5 0.5" stroke="#e0454a" stroke-width="1.3"/></svg>
<div class="a" style="left:1548px;top:505px;width:33px;height:33px;border-radius:7px;background:#7b8e9e"></div>
<div class="t" id="t146" style="top:513.00px;font-size:22px;line-height:22px;color:#fff;left:1557.16px;">A</div>
<div class="t" id="t147" style="top:516.00px;font-size:16px;line-height:16px;color:#232333;left:1596.50px;transform:scaleX(0.9232);">Andrei Semy...     (Переводчик)</div>
<svg style="left:1839px;top:512px" width="20" height="20"><rect x="7" y="1.2" width="6" height="10.6" rx="3" fill="none" stroke="#7a7a86" stroke-width="1.2"/><path d="M4.5 9Q4.5 15 10 15Q15.5 15 15.5 9M10 15V18.5M7 18.7H13" fill="none" stroke="#7a7a86" stroke-width="1.3"/></svg>
<svg style="left:1869px;top:512px" width="21" height="20"><path d="M2.5 4H13.5Q15 4 15 5.5V14.5Q15 16 13.5 16H2.5Q1 16 1 14.5V5.5Q1 4 2.5 4ZM15 8.5L20 5V15L15 11.5" fill="none" stroke="#e0454a" stroke-width="1.3"/><path d="M1 19.5L20.5 0.5" stroke="#e0454a" stroke-width="1.3"/></svg>
<div class="a" style="left:1809px;top:512px;width:20px;height:20px;border-radius:50%;background:#ececf0"></div>
<div class="t" id="t148" style="top:518.00px;font-size:9.5px;line-height:9.5px;color:#555;font-weight:bold;left:1812.40px;">EN</div>
<div class="a" style="left:1548px;top:556px;width:33px;height:33px;border-radius:7px;background:#2a7cc0"></div>
<div class="t" id="t149" style="top:565.00px;font-size:15.5px;line-height:15.5px;color:#fff;font-weight:bold;left:1552.50px;transform:scaleX(1.1770);">AV</div>
<div class="t" id="t150" style="top:567.00px;font-size:16px;line-height:16px;color:#232333;left:1596.50px;transform:scaleX(0.9451);">Alica Vančová</div>
<svg style="left:1839px;top:563px" width="20" height="20"><rect x="7" y="1.2" width="6" height="10.6" rx="3" fill="none" stroke="#e0454a" stroke-width="1.2"/><path d="M4.5 9Q4.5 15 10 15Q15.5 15 15.5 9M10 15V18.5M7 18.7H13" fill="none" stroke="#e0454a" stroke-width="1.3"/><path d="M0.5 19.5L19.5 0.5" stroke="#e0454a" stroke-width="1.3"/></svg>
<svg style="left:1869px;top:563px" width="21" height="20"><path d="M2.5 4H13.5Q15 4 15 5.5V14.5Q15 16 13.5 16H2.5Q1 16 1 14.5V5.5Q1 4 2.5 4ZM15 8.5L20 5V15L15 11.5" fill="none" stroke="#e0454a" stroke-width="1.3"/><path d="M1 19.5L20.5 0.5" stroke="#e0454a" stroke-width="1.3"/></svg>
<div class="a" style="left:1548px;top:607px;width:33px;height:33px;border-radius:7px;background:#34495e"></div>
<div class="t" id="t151" style="top:617.00px;font-size:15.5px;line-height:15.5px;color:#fff;font-weight:bold;left:1553.00px;transform:scaleX(1.2924);">LT</div>
<div class="t" id="t152" style="top:618.00px;font-size:16px;line-height:16px;color:#232333;left:1596.50px;transform:scaleX(0.9398);">Larissa the Int...  (Переводчик)</div>
<svg style="left:1839px;top:614px" width="20" height="20"><rect x="7" y="1.2" width="6" height="10.6" rx="3" fill="none" stroke="#e0454a" stroke-width="1.2"/><path d="M4.5 9Q4.5 15 10 15Q15.5 15 15.5 9M10 15V18.5M7 18.7H13" fill="none" stroke="#e0454a" stroke-width="1.3"/><path d="M0.5 19.5L19.5 0.5" stroke="#e0454a" stroke-width="1.3"/></svg>
<svg style="left:1869px;top:614px" width="21" height="20"><path d="M2.5 4H13.5Q15 4 15 5.5V14.5Q15 16 13.5 16H2.5Q1 16 1 14.5V5.5Q1 4 2.5 4ZM15 8.5L20 5V15L15 11.5" fill="none" stroke="#e0454a" stroke-width="1.3"/><path d="M1 19.5L20.5 0.5" stroke="#e0454a" stroke-width="1.3"/></svg>
<div class="a" style="left:1809px;top:614px;width:20px;height:20px;border-radius:50%;background:#ececf0"></div>
<div class="t" id="t153" style="top:620.00px;font-size:9.5px;line-height:9.5px;color:#555;font-weight:bold;left:1812.40px;">EN</div>
<div class="a" style="left:1548px;top:658px;width:33px;height:33px;border-radius:7px;background:#34495e"></div>
<div class="t" id="t154" style="top:667.00px;font-size:15.5px;line-height:15.5px;color:#fff;font-weight:bold;left:1553.00px;transform:scaleX(1.0674);">SD</div>
<div class="t" id="t155" style="top:669.00px;font-size:16px;line-height:16px;color:#232333;left:1596.50px;transform:scaleX(0.9453);">second device</div>
<svg style="left:1839px;top:665px" width="20" height="20"><rect x="7" y="1.2" width="6" height="10.6" rx="3" fill="none" stroke="#e0454a" stroke-width="1.2"/><path d="M4.5 9Q4.5 15 10 15Q15.5 15 15.5 9M10 15V18.5M7 18.7H13" fill="none" stroke="#e0454a" stroke-width="1.3"/><path d="M0.5 19.5L19.5 0.5" stroke="#e0454a" stroke-width="1.3"/></svg>
<svg style="left:1869px;top:665px" width="21" height="20"><path d="M2.5 4H13.5Q15 4 15 5.5V14.5Q15 16 13.5 16H2.5Q1 16 1 14.5V5.5Q1 4 2.5 4ZM15 8.5L20 5V15L15 11.5" fill="none" stroke="#e0454a" stroke-width="1.3"/><path d="M1 19.5L20.5 0.5" stroke="#e0454a" stroke-width="1.3"/></svg>
<div class="a" style="left:1548px;top:709px;width:33px;height:33px;border-radius:7px;background:#d0530f"></div>
<div class="t" id="t156" style="top:719.00px;font-size:15px;line-height:15px;color:#fff;font-weight:bold;left:1559.49px;">S</div>
<div class="t" id="t157" style="top:720.00px;font-size:16px;line-height:16px;color:#232333;left:1596.50px;transform:scaleX(0.9187);">Serena</div>
<svg style="left:1839px;top:716px" width="20" height="20"><rect x="7" y="1.2" width="6" height="10.6" rx="3" fill="none" stroke="#e0454a" stroke-width="1.2"/><path d="M4.5 9Q4.5 15 10 15Q15.5 15 15.5 9M10 15V18.5M7 18.7H13" fill="none" stroke="#e0454a" stroke-width="1.3"/><path d="M0.5 19.5L19.5 0.5" stroke="#e0454a" stroke-width="1.3"/></svg>
<svg style="left:1869px;top:716px" width="21" height="20"><path d="M2.5 4H13.5Q15 4 15 5.5V14.5Q15 16 13.5 16H2.5Q1 16 1 14.5V5.5Q1 4 2.5 4ZM15 8.5L20 5V15L15 11.5" fill="none" stroke="#e0454a" stroke-width="1.3"/><path d="M1 19.5L20.5 0.5" stroke="#e0454a" stroke-width="1.3"/></svg>
<div class="a" style="left:1548px;top:760px;width:33px;height:33px;border-radius:7px;background:#16a085"></div>
<div class="t" id="t158" style="top:769.00px;font-size:15.5px;line-height:15.5px;color:#fff;font-weight:bold;left:1553.00px;transform:scaleX(1.1609);">ZP</div>
<div class="t" id="t159" style="top:771.00px;font-size:16px;line-height:16px;color:#232333;left:1596.50px;transform:scaleX(0.9297);">Zoia Prestes</div>
<svg style="left:1839px;top:767px" width="20" height="20"><rect x="7" y="1.2" width="6" height="10.6" rx="3" fill="none" stroke="#e0454a" stroke-width="1.2"/><path d="M4.5 9Q4.5 15 10 15Q15.5 15 15.5 9M10 15V18.5M7 18.7H13" fill="none" stroke="#e0454a" stroke-width="1.3"/><path d="M0.5 19.5L19.5 0.5" stroke="#e0454a" stroke-width="1.3"/></svg>
<svg style="left:1869px;top:767px" width="21" height="20"><path d="M2.5 4H13.5Q15 4 15 5.5V14.5Q15 16 13.5 16H2.5Q1 16 1 14.5V5.5Q1 4 2.5 4ZM15 8.5L20 5V15L15 11.5" fill="none" stroke="#e0454a" stroke-width="1.3"/><path d="M1 19.5L20.5 0.5" stroke="#e0454a" stroke-width="1.3"/></svg>
<div class="a" style="left:1548px;top:811px;width:33px;height:33px;border-radius:7px;background:#f39c12"></div>
<div class="t" id="t160" style="top:821.00px;font-size:15px;line-height:15px;color:#fff;font-weight:bold;left:1559.08px;">А</div>
<div class="t" id="t161" style="top:822.00px;font-size:16px;line-height:16px;color:#232333;left:1596.50px;transform:scaleX(0.9332);">Альбина</div>
<svg style="left:1839px;top:818px" width="20" height="20"><rect x="7" y="1.2" width="6" height="10.6" rx="3" fill="none" stroke="#e0454a" stroke-width="1.2"/><path d="M4.5 9Q4.5 15 10 15Q15.5 15 15.5 9M10 15V18.5M7 18.7H13" fill="none" stroke="#e0454a" stroke-width="1.3"/><path d="M0.5 19.5L19.5 0.5" stroke="#e0454a" stroke-width="1.3"/></svg>
<svg style="left:1869px;top:818px" width="21" height="20"><path d="M2.5 4H13.5Q15 4 15 5.5V14.5Q15 16 13.5 16H2.5Q1 16 1 14.5V5.5Q1 4 2.5 4ZM15 8.5L20 5V15L15 11.5" fill="none" stroke="#e0454a" stroke-width="1.3"/><path d="M1 19.5L20.5 0.5" stroke="#e0454a" stroke-width="1.3"/></svg>
<div class="a" style="left:1548px;top:862px;width:33px;height:33px;border-radius:7px;background:#f39c12"></div>
<div class="t" id="t162" style="top:871.00px;font-size:15px;line-height:15px;color:#fff;font-weight:bold;left:1559.92px;">К</div>
<div class="t" id="t163" style="top:873.00px;font-size:16px;line-height:16px;color:#232333;left:1596.50px;transform:scaleX(0.9727);">Кабардов МК</div>
<svg style="left:1839px;top:869px" width="20" height="20"><rect x="7" y="1.2" width="6" height="10.6" rx="3" fill="none" stroke="#e0454a" stroke-width="1.2"/><path d="M4.5 9Q4.5 15 10 15Q15.5 15 15.5 9M10 15V18.5M7 18.7H13" fill="none" stroke="#e0454a" stroke-width="1.3"/><path d="M0.5 19.5L19.5 0.5" stroke="#e0454a" stroke-width="1.3"/></svg>
<svg style="left:1869px;top:869px" width="21" height="20"><path d="M2.5 4H13.5Q15 4 15 5.5V14.5Q15 16 13.5 16H2.5Q1 16 1 14.5V5.5Q1 4 2.5 4ZM15 8.5L20 5V15L15 11.5" fill="none" stroke="#e0454a" stroke-width="1.3"/><path d="M1 19.5L20.5 0.5" stroke="#e0454a" stroke-width="1.3"/></svg>
<div class="a" style="left:1548px;top:913px;width:33px;height:33px;border-radius:7px;background:#c0392b"></div>
<div class="t" id="t164" style="top:923.00px;font-size:15px;line-height:15px;color:#fff;font-weight:bold;left:1559.23px;">Л</div>
<div class="t" id="t165" style="top:924.00px;font-size:16px;line-height:16px;color:#232333;left:1596.50px;transform:scaleX(0.9467);">Леханова О.Л.</div>
<svg style="left:1839px;top:920px" width="20" height="20"><rect x="7" y="1.2" width="6" height="10.6" rx="3" fill="none" stroke="#e0454a" stroke-width="1.2"/><path d="M4.5 9Q4.5 15 10 15Q15.5 15 15.5 9M10 15V18.5M7 18.7H13" fill="none" stroke="#e0454a" stroke-width="1.3"/><path d="M0.5 19.5L19.5 0.5" stroke="#e0454a" stroke-width="1.3"/></svg>
<svg style="left:1869px;top:920px" width="21" height="20"><path d="M2.5 4H13.5Q15 4 15 5.5V14.5Q15 16 13.5 16H2.5Q1 16 1 14.5V5.5Q1 4 2.5 4ZM15 8.5L20 5V15L15 11.5" fill="none" stroke="#e0454a" stroke-width="1.3"/><path d="M1 19.5L20.5 0.5" stroke="#e0454a" stroke-width="1.3"/></svg>
</div>
<div class="a" style="left:1560px;top:958px;width:111px;height:29px;border:1px solid #b8b8c0;border-radius:8px;background:#fff"></div>
<div class="t" id="t166" style="top:966.00px;font-size:15.5px;line-height:15.5px;color:#232333;left:1574.30px;transform:scaleX(0.9845);">Пригласить</div>
<div class="a" style="left:1710px;top:958px;width:172px;height:29px;border:1px solid #b8b8c0;border-radius:8px;background:#fff"></div>
<div class="t" id="t167" style="top:966.00px;font-size:15.5px;line-height:15.5px;color:#232333;left:1724.00px;transform:scaleX(1.0187);">Включить свой звук</div>
<div class="a" style="left:0;top:1005px;width:1920px;height:75px;background:#03060d"></div>
<svg style="left:19px;top:1031px" width="22" height="22"><path d="M0.5 3.2L9 2V10.2H0.5ZM10.2 1.8L21.5 0.3V10.2H10.2ZM0.5 11.4H9V19.6L0.5 18.4ZM10.2 11.4H21.5V21.3L10.2 19.8Z" fill="#fff"/></svg>
<svg style="left:79px;top:1031px" width="22" height="22"><circle cx="14" cy="7.6" r="6.6" fill="none" stroke="#fff" stroke-width="1.3"/><path d="M9.3 12.3L1.3 20.5" stroke="#fff" stroke-width="1.3"/></svg>
<svg style="left:137px;top:1032px" width="26" height="20"><rect x="5.3" y="0.8" width="15.4" height="17.4" fill="none" stroke="#fff" stroke-width="1.3"/><path d="M3.3 3.5H0.7V15.5H3.3M22.7 3.5H25.3V15.5H22.7" fill="none" stroke="#fff" stroke-width="1.2"/></svg>
<div class="a" style="left:186px;top:1017px;width:1px;height:51px;background:#5a5a5a"></div><div class="a" style="left:189px;top:1017px;width:1px;height:51px;background:#5a5a5a"></div>
<div class="a" style="left:316px;top:1005px;width:54px;height:50px;background:#2c2c2c"></div>
<div class="a" style="left:368px;top:1005px;width:2px;height:50px;background:#3a3a3a"></div>
<div class="a" style="left:209px;top:1052px;width:45px;height:3px;background:#76b9ed"></div>
<div class="a" style="left:265px;top:1052px;width:45px;height:3px;background:#76b9ed"></div>
<div class="a" style="left:316px;top:1052px;width:54px;height:3px;background:#76b9ed"></div>
<div class="a" style="left:376px;top:1052px;width:44px;height:3px;background:#76b9ed"></div>
<div class="a" style="left:431px;top:1052px;width:44px;height:3px;background:#76b9ed"></div>
<svg style="left:216px;top:1016px" width="28" height="28">
<path d="M1 4L16 1V27L1 24Z" fill="#2b579a"/>
<rect x="16" y="5" width="11" height="18" fill="#fff" stroke="#2b579a" stroke-width="1"/>
<path d="M18 8H25M18 11H25M18 14H25M18 17H25M18 20H25" stroke="#2b579a" stroke-width="1.2"/>
<path d="M3 9L5 19L7.5 12L10 19L12 9" fill="none" stroke="#fff" stroke-width="1.7"/>
</svg>
<svg style="left:272px;top:1015px" width="30" height="30">
<circle cx="15" cy="15" r="15" fill="#db4437"/>
<path d="M15 15L2 7.5A15 15 0 0 0 7.5 28Z" fill="#0f9d58"/>
<path d="M15 15L7.5 28A15 15 0 0 0 30 15Z" fill="#f4b400"/>
<path d="M15 15L30 15A15 15 0 0 0 28 7.5L15 7.5Z" fill="#db4437"/>
<circle cx="15" cy="15" r="7" fill="#fff"/><circle cx="15" cy="15" r="5.5" fill="#4285f4"/>
</svg>
<div class="a" style="left:326px;top:1015px;width:30px;height:30px;border-radius:44%;background:radial-gradient(circle at 50% 35%,#2d8cff,#0b5cff 70%)"></div>
<div class="a" style="left:327px;top:1026px;width:28px;height:8px;font:bold 7px/8px 'Liberation Sans';color:#fff;text-align:center;letter-spacing:-0.2px">zoom</div>
<svg style="left:384px;top:1017px" width="28" height="24">
<path d="M0 2H9L11 4H27V23H0Z" fill="#e8b84a"/>
<rect x="0" y="6" width="28" height="17" fill="#f8d775"/>
<path d="M7 22V14H21V22H18V17H10V22Z" fill="#1e9be0"/>
<rect x="2" y="3" width="6" height="2" fill="#fff"/>
</svg>
<svg style="left:438px;top:1015px" width="30" height="29">
<rect x="14" y="5" width="14" height="19" fill="#fff" stroke="#d24726" stroke-width="1"/>
<path d="M19 9A5 5 0 1 0 24 14H19Z" fill="#d24726"/><path d="M20 8V13H25A5 5 0 0 0 20 8Z" fill="#d24726"/>
<path d="M18 19H26M18 21H26" stroke="#d24726" stroke-width="1"/>
<path d="M1 4L16 1V28L1 25Z" fill="#d24726"/>
<path d="M5 20V9H9Q12 9 12 12Q12 15 9 15H5" fill="none" stroke="#fff" stroke-width="1.8"/>
</svg>
<div class="a" style="left:496.5px;top:1017px;width:1px;height:50px;background:#5a5a5a"></div><div class="a" style="left:499.5px;top:1017px;width:1px;height:50px;background:#5a5a5a"></div>
<div class="t" id="t168" style="top:1034.00px;font-size:16px;line-height:16px;color:#e6e6e6;left:510.00px;transform:scaleX(0.9001);">Ссылки</div>
<div class="a" style="left:1478.5px;top:1017px;width:1px;height:50px;background:#5a5a5a"></div><div class="a" style="left:1481px;top:1017px;width:1px;height:50px;background:#5a5a5a"></div>
<div class="t" id="t169" style="top:1034.00px;font-size:16px;line-height:16px;color:#e6e6e6;left:1492.00px;transform:scaleX(0.9309);">Рабочий стол</div>
<svg style="left:1596px;top:1012px" width="10" height="9"><path d="M1 1L4.5 4.5L1 8M5 1L8.5 4.5L5 8" fill="none" stroke="#fff" stroke-width="1.3"/></svg>
<div class="a" style="left:1611px;top:1005px;width:30px;height:75px;background:#1e1f24"></div>
<svg style="left:1617px;top:1037px" width="18" height="10"><path d="M1 9L9 1.2L17 9" fill="none" stroke="#fff" stroke-width="1.3"/></svg>
<svg style="left:1646px;top:1036px" width="21" height="12"><path d="M1 2V4M1 3H3M2 3V0.5" stroke="#fff" stroke-width="1"/><rect x="3.6" y="1.6" width="15" height="9.4" fill="none" stroke="#fff" stroke-width="1.2"/><rect x="5" y="3" width="9" height="6.6" fill="#fff"/><rect x="18.6" y="4.5" width="2" height="3.6" fill="#fff"/></svg>
<svg style="left:1679px;top:1035px" width="17" height="15"><path d="M1.5 13.5A12 12 0 0 1 13.5 1.5M4.5 13.5A9 9 0 0 1 13.5 4.5M7.5 13.5A6 6 0 0 1 13.5 7.5" fill="none" stroke="#fff" stroke-width="1.1"/><circle cx="13" cy="12.5" r="2" fill="#fff"/></svg>
<div class="t" id="t170" style="top:1035.00px;font-size:15px;line-height:15px;color:#fff;left:1709.60px;transform:scaleX(0.8642);">ENG</div>
<div class="t" id="t171" style="top:1012.00px;font-size:15px;line-height:15px;color:#fff;left:1782.65px;transform:scaleX(0.9135);">13:36</div>
<div class="t" id="t172" style="top:1035.00px;font-size:15px;line-height:15px;color:#fff;left:1780.00px;transform:scaleX(0.9718);">среда</div>
<div class="t" id="t173" style="top:1058.00px;font-size:15px;line-height:15px;color:#fff;left:1765.55px;transform:scaleX(0.9342);">16.11.2022</div>
<svg style="left:1868px;top:1031px" width="22" height="22"><path d="M1 1.6H21V17H14L11 20L8 17H1Z" fill="none" stroke="#fff" stroke-width="1.3"/></svg>
<div class="a" style="left:1914px;top:1005px;width:1px;height:75px;background:#4a4a4a"></div>
</body></html>
